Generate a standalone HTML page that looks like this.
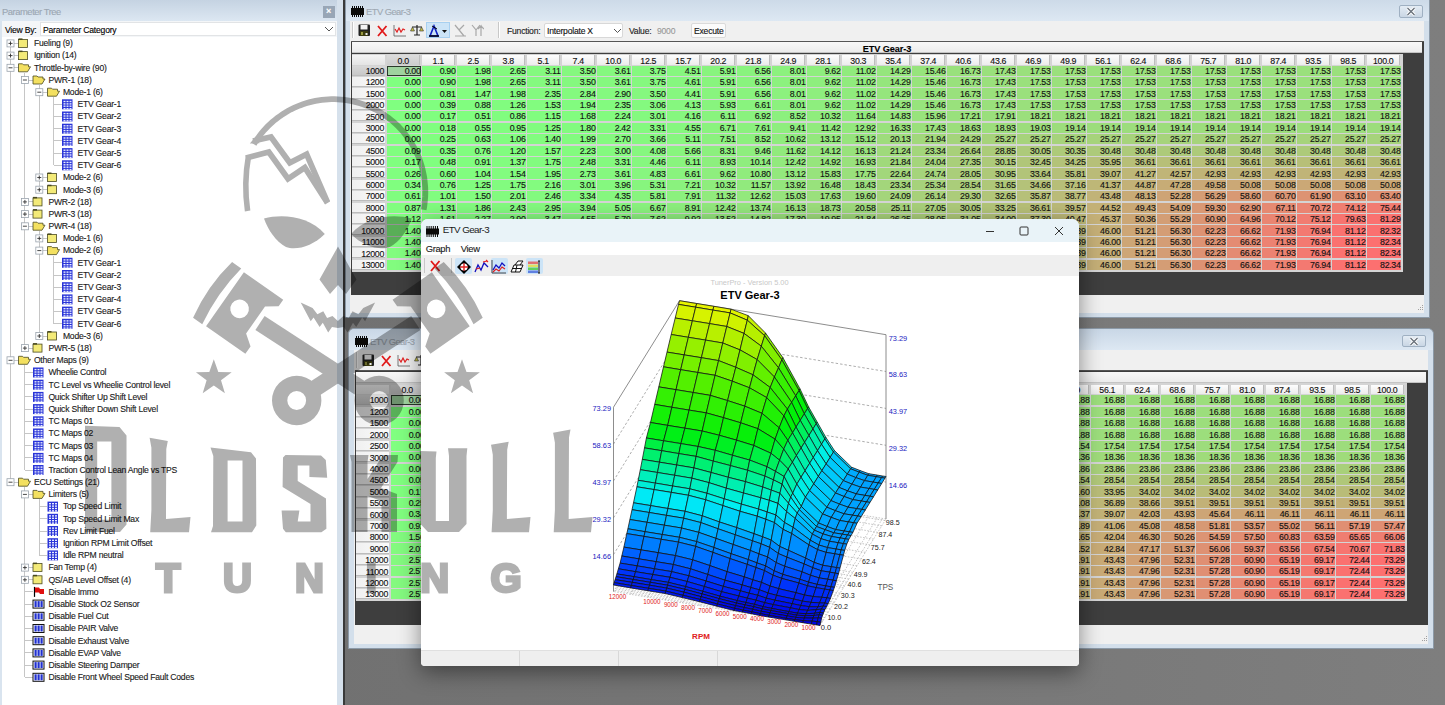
<!DOCTYPE html><html><head><meta charset="utf-8"><style>
*{margin:0;padding:0;box-sizing:border-box}
html,body{width:1445px;height:705px;overflow:hidden}
body{position:relative;background:#727272;font-family:"Liberation Sans",sans-serif;color:#000}
.a{position:absolute}
.tx{position:absolute;white-space:nowrap;font-size:8.6px;letter-spacing:-0.22px;line-height:10px;-webkit-text-stroke:0.12px currentColor}
.nm{font-size:8.8px;letter-spacing:-0.32px}
.c{position:absolute;display:block;font-style:normal;width:34px;height:10.3px;padding-top:0.3px;text-align:right;color:#111;white-space:nowrap;font-size:8.8px;letter-spacing:-0.32px;line-height:10px;-webkit-text-stroke:0.12px #111}

</style></head><body>
<div class="a" style="left:0;top:0;width:1445px;height:705px;background:linear-gradient(90deg,#6e6e6e 0%,#757575 50%,#7e7e7e 100%)"></div>
<div class="a" style="left:0;top:0;width:343px;height:705px;background:#d9e4ef"></div>
<div class="a" style="left:0;top:0;width:337px;height:21px;background:linear-gradient(#c5d3e2,#dce7f2)"></div>
<div class="tx" style="left:2px;top:7px;font-size:9.4px;color:#9ba6b2;letter-spacing:-0.45px">Parameter Tree</div>
<div class="a" style="left:323px;top:6px;width:12px;height:12px;background:#98a6b6"></div>
<div class="tx" style="left:326px;top:6px;color:#fff;font-size:9px;font-weight:bold">&#215;</div>
<div class="a" style="left:2px;top:21px;width:335px;height:16px;background:#f4f6f8"></div>
<div class="tx" style="left:5px;top:24.5px;">View By:</div>
<div class="a" style="left:40px;top:21.5px;width:296px;height:14.5px;background:#fff;border:1px solid #e2e4e6"></div>
<div class="tx" style="left:43px;top:24.5px;">Parameter Category</div>
<svg class="a" style="left:324px;top:26px" width="10" height="6"><path d="M1 1 L5 5 L9 1" stroke="#555" fill="none" stroke-width="1"/></svg>
<div class="a" style="left:2px;top:37px;width:335px;height:668px;background:#fff"></div>
<svg class="a" style="left:0;top:0" width="340" height="705"><g stroke="#c6c6c6" stroke-width="1" shape-rendering="crispEdges"><line x1="24.9" y1="72.8" x2="24.9" y2="348.1"/><line x1="39.3" y1="85.0" x2="39.3" y2="189.7"/><line x1="53.7" y1="97.2" x2="53.7" y2="165.3"/><line x1="39.3" y1="231.2" x2="39.3" y2="336.0"/><line x1="53.7" y1="255.6" x2="53.7" y2="323.8"/><line x1="24.9" y1="365.3" x2="24.9" y2="470.0"/><line x1="24.9" y1="487.2" x2="24.9" y2="677.3"/><line x1="39.3" y1="499.4" x2="39.3" y2="555.4"/><line x1="10.5" y1="43.4" x2="10.5" y2="482.2"/><line x1="10.5" y1="43.4" x2="18.5" y2="43.4"/><line x1="10.5" y1="55.6" x2="18.5" y2="55.6"/><line x1="10.5" y1="67.8" x2="18.5" y2="67.8"/><line x1="24.9" y1="80.0" x2="32.9" y2="80.0"/><line x1="39.3" y1="92.2" x2="47.3" y2="92.2"/><line x1="53.7" y1="104.3" x2="61.7" y2="104.3"/><line x1="53.7" y1="116.5" x2="61.7" y2="116.5"/><line x1="53.7" y1="128.7" x2="61.7" y2="128.7"/><line x1="53.7" y1="140.9" x2="61.7" y2="140.9"/><line x1="53.7" y1="153.1" x2="61.7" y2="153.1"/><line x1="53.7" y1="165.3" x2="61.7" y2="165.3"/><line x1="39.3" y1="177.5" x2="47.3" y2="177.5"/><line x1="39.3" y1="189.7" x2="47.3" y2="189.7"/><line x1="24.9" y1="201.9" x2="32.9" y2="201.9"/><line x1="24.9" y1="214.1" x2="32.9" y2="214.1"/><line x1="24.9" y1="226.2" x2="32.9" y2="226.2"/><line x1="39.3" y1="238.4" x2="47.3" y2="238.4"/><line x1="39.3" y1="250.6" x2="47.3" y2="250.6"/><line x1="53.7" y1="262.8" x2="61.7" y2="262.8"/><line x1="53.7" y1="275.0" x2="61.7" y2="275.0"/><line x1="53.7" y1="287.2" x2="61.7" y2="287.2"/><line x1="53.7" y1="299.4" x2="61.7" y2="299.4"/><line x1="53.7" y1="311.6" x2="61.7" y2="311.6"/><line x1="53.7" y1="323.8" x2="61.7" y2="323.8"/><line x1="39.3" y1="336.0" x2="47.3" y2="336.0"/><line x1="24.9" y1="348.1" x2="32.9" y2="348.1"/><line x1="10.5" y1="360.3" x2="18.5" y2="360.3"/><line x1="24.9" y1="372.5" x2="32.9" y2="372.5"/><line x1="24.9" y1="384.7" x2="32.9" y2="384.7"/><line x1="24.9" y1="396.9" x2="32.9" y2="396.9"/><line x1="24.9" y1="409.1" x2="32.9" y2="409.1"/><line x1="24.9" y1="421.3" x2="32.9" y2="421.3"/><line x1="24.9" y1="433.5" x2="32.9" y2="433.5"/><line x1="24.9" y1="445.7" x2="32.9" y2="445.7"/><line x1="24.9" y1="457.9" x2="32.9" y2="457.9"/><line x1="24.9" y1="470.0" x2="32.9" y2="470.0"/><line x1="10.5" y1="482.2" x2="18.5" y2="482.2"/><line x1="24.9" y1="494.4" x2="32.9" y2="494.4"/><line x1="39.3" y1="506.6" x2="47.3" y2="506.6"/><line x1="39.3" y1="518.8" x2="47.3" y2="518.8"/><line x1="39.3" y1="531.0" x2="47.3" y2="531.0"/><line x1="39.3" y1="543.2" x2="47.3" y2="543.2"/><line x1="39.3" y1="555.4" x2="47.3" y2="555.4"/><line x1="24.9" y1="567.6" x2="32.9" y2="567.6"/><line x1="24.9" y1="579.8" x2="32.9" y2="579.8"/><line x1="24.9" y1="591.9" x2="32.9" y2="591.9"/><line x1="24.9" y1="604.1" x2="32.9" y2="604.1"/><line x1="24.9" y1="616.3" x2="32.9" y2="616.3"/><line x1="24.9" y1="628.5" x2="32.9" y2="628.5"/><line x1="24.9" y1="640.7" x2="32.9" y2="640.7"/><line x1="24.9" y1="652.9" x2="32.9" y2="652.9"/><line x1="24.9" y1="665.1" x2="32.9" y2="665.1"/><line x1="24.9" y1="677.3" x2="32.9" y2="677.3"/></g></svg>
<svg class="a" style="left:0;top:0" width="340" height="705"><rect x="7.0" y="39.9" width="7" height="7" fill="#fff" stroke="#9aa3ad" stroke-width="0.8"/><line x1="8.5" y1="43.4" x2="12.5" y2="43.4" stroke="#333" stroke-width="0.9"/><line x1="10.5" y1="41.4" x2="10.5" y2="45.4" stroke="#333" stroke-width="0.9"/><rect x="18.5" y="39.4" width="9" height="8" fill="#f3ea78" stroke="#4a4a20" stroke-width="0.8"/><rect x="18.5" y="38.4" width="4" height="1.5" fill="#4a4a20"/><rect x="7.0" y="52.1" width="7" height="7" fill="#fff" stroke="#9aa3ad" stroke-width="0.8"/><line x1="8.5" y1="55.6" x2="12.5" y2="55.6" stroke="#333" stroke-width="0.9"/><line x1="10.5" y1="53.6" x2="10.5" y2="57.6" stroke="#333" stroke-width="0.9"/><rect x="18.5" y="51.6" width="9" height="8" fill="#f3ea78" stroke="#4a4a20" stroke-width="0.8"/><rect x="18.5" y="50.6" width="4" height="1.5" fill="#4a4a20"/><rect x="7.0" y="64.3" width="7" height="7" fill="#fff" stroke="#9aa3ad" stroke-width="0.8"/><line x1="8.5" y1="67.8" x2="12.5" y2="67.8" stroke="#333" stroke-width="0.9"/><path d="M18.5 63.8 h4 l1 1 h5 v2 h2 l-3 5 h-9 z" fill="#f3e060" stroke="#4a4a20" stroke-width="0.8"/><rect x="21.4" y="76.5" width="7" height="7" fill="#fff" stroke="#9aa3ad" stroke-width="0.8"/><line x1="22.9" y1="80.0" x2="26.9" y2="80.0" stroke="#333" stroke-width="0.9"/><path d="M33.0 76.0 h4 l1 1 h5 v2 h2 l-3 5 h-9 z" fill="#f3e060" stroke="#4a4a20" stroke-width="0.8"/><rect x="35.8" y="88.7" width="7" height="7" fill="#fff" stroke="#9aa3ad" stroke-width="0.8"/><line x1="37.3" y1="92.2" x2="41.3" y2="92.2" stroke="#333" stroke-width="0.9"/><path d="M47.5 88.2 h4 l1 1 h5 v2 h2 l-3 5 h-9 z" fill="#f3e060" stroke="#4a4a20" stroke-width="0.8"/><rect x="62.0" y="99.3" width="10.5" height="10" fill="#2a35d8"/><rect x="63.5" y="100.8" width="2" height="1.4" fill="#e8ecff"/><rect x="63.5" y="103.2" width="2" height="1.4" fill="#e8ecff"/><rect x="63.5" y="105.5" width="2" height="1.4" fill="#e8ecff"/><rect x="63.5" y="108.0" width="2" height="1.4" fill="#e8ecff"/><rect x="66.5" y="100.8" width="2" height="1.4" fill="#e8ecff"/><rect x="66.5" y="103.2" width="2" height="1.4" fill="#e8ecff"/><rect x="66.5" y="105.5" width="2" height="1.4" fill="#e8ecff"/><rect x="66.5" y="108.0" width="2" height="1.4" fill="#e8ecff"/><rect x="69.5" y="100.8" width="2" height="1.4" fill="#e8ecff"/><rect x="69.5" y="103.2" width="2" height="1.4" fill="#e8ecff"/><rect x="69.5" y="105.5" width="2" height="1.4" fill="#e8ecff"/><rect x="69.5" y="108.0" width="2" height="1.4" fill="#e8ecff"/><rect x="62.0" y="111.5" width="10.5" height="10" fill="#2a35d8"/><rect x="63.5" y="112.9" width="2" height="1.4" fill="#e8ecff"/><rect x="63.5" y="115.3" width="2" height="1.4" fill="#e8ecff"/><rect x="63.5" y="117.7" width="2" height="1.4" fill="#e8ecff"/><rect x="63.5" y="120.1" width="2" height="1.4" fill="#e8ecff"/><rect x="66.5" y="112.9" width="2" height="1.4" fill="#e8ecff"/><rect x="66.5" y="115.3" width="2" height="1.4" fill="#e8ecff"/><rect x="66.5" y="117.7" width="2" height="1.4" fill="#e8ecff"/><rect x="66.5" y="120.1" width="2" height="1.4" fill="#e8ecff"/><rect x="69.5" y="112.9" width="2" height="1.4" fill="#e8ecff"/><rect x="69.5" y="115.3" width="2" height="1.4" fill="#e8ecff"/><rect x="69.5" y="117.7" width="2" height="1.4" fill="#e8ecff"/><rect x="69.5" y="120.1" width="2" height="1.4" fill="#e8ecff"/><rect x="62.0" y="123.7" width="10.5" height="10" fill="#2a35d8"/><rect x="63.5" y="125.1" width="2" height="1.4" fill="#e8ecff"/><rect x="63.5" y="127.5" width="2" height="1.4" fill="#e8ecff"/><rect x="63.5" y="129.9" width="2" height="1.4" fill="#e8ecff"/><rect x="63.5" y="132.3" width="2" height="1.4" fill="#e8ecff"/><rect x="66.5" y="125.1" width="2" height="1.4" fill="#e8ecff"/><rect x="66.5" y="127.5" width="2" height="1.4" fill="#e8ecff"/><rect x="66.5" y="129.9" width="2" height="1.4" fill="#e8ecff"/><rect x="66.5" y="132.3" width="2" height="1.4" fill="#e8ecff"/><rect x="69.5" y="125.1" width="2" height="1.4" fill="#e8ecff"/><rect x="69.5" y="127.5" width="2" height="1.4" fill="#e8ecff"/><rect x="69.5" y="129.9" width="2" height="1.4" fill="#e8ecff"/><rect x="69.5" y="132.3" width="2" height="1.4" fill="#e8ecff"/><rect x="62.0" y="135.9" width="10.5" height="10" fill="#2a35d8"/><rect x="63.5" y="137.3" width="2" height="1.4" fill="#e8ecff"/><rect x="63.5" y="139.7" width="2" height="1.4" fill="#e8ecff"/><rect x="63.5" y="142.1" width="2" height="1.4" fill="#e8ecff"/><rect x="63.5" y="144.5" width="2" height="1.4" fill="#e8ecff"/><rect x="66.5" y="137.3" width="2" height="1.4" fill="#e8ecff"/><rect x="66.5" y="139.7" width="2" height="1.4" fill="#e8ecff"/><rect x="66.5" y="142.1" width="2" height="1.4" fill="#e8ecff"/><rect x="66.5" y="144.5" width="2" height="1.4" fill="#e8ecff"/><rect x="69.5" y="137.3" width="2" height="1.4" fill="#e8ecff"/><rect x="69.5" y="139.7" width="2" height="1.4" fill="#e8ecff"/><rect x="69.5" y="142.1" width="2" height="1.4" fill="#e8ecff"/><rect x="69.5" y="144.5" width="2" height="1.4" fill="#e8ecff"/><rect x="62.0" y="148.1" width="10.5" height="10" fill="#2a35d8"/><rect x="63.5" y="149.5" width="2" height="1.4" fill="#e8ecff"/><rect x="63.5" y="151.9" width="2" height="1.4" fill="#e8ecff"/><rect x="63.5" y="154.3" width="2" height="1.4" fill="#e8ecff"/><rect x="63.5" y="156.7" width="2" height="1.4" fill="#e8ecff"/><rect x="66.5" y="149.5" width="2" height="1.4" fill="#e8ecff"/><rect x="66.5" y="151.9" width="2" height="1.4" fill="#e8ecff"/><rect x="66.5" y="154.3" width="2" height="1.4" fill="#e8ecff"/><rect x="66.5" y="156.7" width="2" height="1.4" fill="#e8ecff"/><rect x="69.5" y="149.5" width="2" height="1.4" fill="#e8ecff"/><rect x="69.5" y="151.9" width="2" height="1.4" fill="#e8ecff"/><rect x="69.5" y="154.3" width="2" height="1.4" fill="#e8ecff"/><rect x="69.5" y="156.7" width="2" height="1.4" fill="#e8ecff"/><rect x="62.0" y="160.3" width="10.5" height="10" fill="#2a35d8"/><rect x="63.5" y="161.7" width="2" height="1.4" fill="#e8ecff"/><rect x="63.5" y="164.1" width="2" height="1.4" fill="#e8ecff"/><rect x="63.5" y="166.5" width="2" height="1.4" fill="#e8ecff"/><rect x="63.5" y="168.9" width="2" height="1.4" fill="#e8ecff"/><rect x="66.5" y="161.7" width="2" height="1.4" fill="#e8ecff"/><rect x="66.5" y="164.1" width="2" height="1.4" fill="#e8ecff"/><rect x="66.5" y="166.5" width="2" height="1.4" fill="#e8ecff"/><rect x="66.5" y="168.9" width="2" height="1.4" fill="#e8ecff"/><rect x="69.5" y="161.7" width="2" height="1.4" fill="#e8ecff"/><rect x="69.5" y="164.1" width="2" height="1.4" fill="#e8ecff"/><rect x="69.5" y="166.5" width="2" height="1.4" fill="#e8ecff"/><rect x="69.5" y="168.9" width="2" height="1.4" fill="#e8ecff"/><rect x="35.8" y="174.0" width="7" height="7" fill="#fff" stroke="#9aa3ad" stroke-width="0.8"/><line x1="37.3" y1="177.5" x2="41.3" y2="177.5" stroke="#333" stroke-width="0.9"/><line x1="39.3" y1="175.5" x2="39.3" y2="179.5" stroke="#333" stroke-width="0.9"/><rect x="47.5" y="173.5" width="9" height="8" fill="#f3ea78" stroke="#4a4a20" stroke-width="0.8"/><rect x="47.5" y="172.5" width="4" height="1.5" fill="#4a4a20"/><rect x="35.8" y="186.2" width="7" height="7" fill="#fff" stroke="#9aa3ad" stroke-width="0.8"/><line x1="37.3" y1="189.7" x2="41.3" y2="189.7" stroke="#333" stroke-width="0.9"/><line x1="39.3" y1="187.7" x2="39.3" y2="191.7" stroke="#333" stroke-width="0.9"/><rect x="47.5" y="185.7" width="9" height="8" fill="#f3ea78" stroke="#4a4a20" stroke-width="0.8"/><rect x="47.5" y="184.7" width="4" height="1.5" fill="#4a4a20"/><rect x="21.4" y="198.4" width="7" height="7" fill="#fff" stroke="#9aa3ad" stroke-width="0.8"/><line x1="22.9" y1="201.9" x2="26.9" y2="201.9" stroke="#333" stroke-width="0.9"/><line x1="24.9" y1="199.9" x2="24.9" y2="203.9" stroke="#333" stroke-width="0.9"/><rect x="33.0" y="197.9" width="9" height="8" fill="#f3ea78" stroke="#4a4a20" stroke-width="0.8"/><rect x="33.0" y="196.9" width="4" height="1.5" fill="#4a4a20"/><rect x="21.4" y="210.6" width="7" height="7" fill="#fff" stroke="#9aa3ad" stroke-width="0.8"/><line x1="22.9" y1="214.1" x2="26.9" y2="214.1" stroke="#333" stroke-width="0.9"/><line x1="24.9" y1="212.1" x2="24.9" y2="216.1" stroke="#333" stroke-width="0.9"/><rect x="33.0" y="210.1" width="9" height="8" fill="#f3ea78" stroke="#4a4a20" stroke-width="0.8"/><rect x="33.0" y="209.1" width="4" height="1.5" fill="#4a4a20"/><rect x="21.4" y="222.8" width="7" height="7" fill="#fff" stroke="#9aa3ad" stroke-width="0.8"/><line x1="22.9" y1="226.2" x2="26.9" y2="226.2" stroke="#333" stroke-width="0.9"/><path d="M33.0 222.2 h4 l1 1 h5 v2 h2 l-3 5 h-9 z" fill="#f3e060" stroke="#4a4a20" stroke-width="0.8"/><rect x="35.8" y="234.9" width="7" height="7" fill="#fff" stroke="#9aa3ad" stroke-width="0.8"/><line x1="37.3" y1="238.4" x2="41.3" y2="238.4" stroke="#333" stroke-width="0.9"/><line x1="39.3" y1="236.4" x2="39.3" y2="240.4" stroke="#333" stroke-width="0.9"/><rect x="47.5" y="234.4" width="9" height="8" fill="#f3ea78" stroke="#4a4a20" stroke-width="0.8"/><rect x="47.5" y="233.4" width="4" height="1.5" fill="#4a4a20"/><rect x="35.8" y="247.1" width="7" height="7" fill="#fff" stroke="#9aa3ad" stroke-width="0.8"/><line x1="37.3" y1="250.6" x2="41.3" y2="250.6" stroke="#333" stroke-width="0.9"/><path d="M47.5 246.6 h4 l1 1 h5 v2 h2 l-3 5 h-9 z" fill="#f3e060" stroke="#4a4a20" stroke-width="0.8"/><rect x="62.0" y="257.8" width="10.5" height="10" fill="#2a35d8"/><rect x="63.5" y="259.2" width="2" height="1.4" fill="#e8ecff"/><rect x="63.5" y="261.6" width="2" height="1.4" fill="#e8ecff"/><rect x="63.5" y="264.0" width="2" height="1.4" fill="#e8ecff"/><rect x="63.5" y="266.4" width="2" height="1.4" fill="#e8ecff"/><rect x="66.5" y="259.2" width="2" height="1.4" fill="#e8ecff"/><rect x="66.5" y="261.6" width="2" height="1.4" fill="#e8ecff"/><rect x="66.5" y="264.0" width="2" height="1.4" fill="#e8ecff"/><rect x="66.5" y="266.4" width="2" height="1.4" fill="#e8ecff"/><rect x="69.5" y="259.2" width="2" height="1.4" fill="#e8ecff"/><rect x="69.5" y="261.6" width="2" height="1.4" fill="#e8ecff"/><rect x="69.5" y="264.0" width="2" height="1.4" fill="#e8ecff"/><rect x="69.5" y="266.4" width="2" height="1.4" fill="#e8ecff"/><rect x="62.0" y="270.0" width="10.5" height="10" fill="#2a35d8"/><rect x="63.5" y="271.4" width="2" height="1.4" fill="#e8ecff"/><rect x="63.5" y="273.8" width="2" height="1.4" fill="#e8ecff"/><rect x="63.5" y="276.2" width="2" height="1.4" fill="#e8ecff"/><rect x="63.5" y="278.6" width="2" height="1.4" fill="#e8ecff"/><rect x="66.5" y="271.4" width="2" height="1.4" fill="#e8ecff"/><rect x="66.5" y="273.8" width="2" height="1.4" fill="#e8ecff"/><rect x="66.5" y="276.2" width="2" height="1.4" fill="#e8ecff"/><rect x="66.5" y="278.6" width="2" height="1.4" fill="#e8ecff"/><rect x="69.5" y="271.4" width="2" height="1.4" fill="#e8ecff"/><rect x="69.5" y="273.8" width="2" height="1.4" fill="#e8ecff"/><rect x="69.5" y="276.2" width="2" height="1.4" fill="#e8ecff"/><rect x="69.5" y="278.6" width="2" height="1.4" fill="#e8ecff"/><rect x="62.0" y="282.2" width="10.5" height="10" fill="#2a35d8"/><rect x="63.5" y="283.6" width="2" height="1.4" fill="#e8ecff"/><rect x="63.5" y="286.0" width="2" height="1.4" fill="#e8ecff"/><rect x="63.5" y="288.4" width="2" height="1.4" fill="#e8ecff"/><rect x="63.5" y="290.8" width="2" height="1.4" fill="#e8ecff"/><rect x="66.5" y="283.6" width="2" height="1.4" fill="#e8ecff"/><rect x="66.5" y="286.0" width="2" height="1.4" fill="#e8ecff"/><rect x="66.5" y="288.4" width="2" height="1.4" fill="#e8ecff"/><rect x="66.5" y="290.8" width="2" height="1.4" fill="#e8ecff"/><rect x="69.5" y="283.6" width="2" height="1.4" fill="#e8ecff"/><rect x="69.5" y="286.0" width="2" height="1.4" fill="#e8ecff"/><rect x="69.5" y="288.4" width="2" height="1.4" fill="#e8ecff"/><rect x="69.5" y="290.8" width="2" height="1.4" fill="#e8ecff"/><rect x="62.0" y="294.4" width="10.5" height="10" fill="#2a35d8"/><rect x="63.5" y="295.8" width="2" height="1.4" fill="#e8ecff"/><rect x="63.5" y="298.2" width="2" height="1.4" fill="#e8ecff"/><rect x="63.5" y="300.6" width="2" height="1.4" fill="#e8ecff"/><rect x="63.5" y="303.0" width="2" height="1.4" fill="#e8ecff"/><rect x="66.5" y="295.8" width="2" height="1.4" fill="#e8ecff"/><rect x="66.5" y="298.2" width="2" height="1.4" fill="#e8ecff"/><rect x="66.5" y="300.6" width="2" height="1.4" fill="#e8ecff"/><rect x="66.5" y="303.0" width="2" height="1.4" fill="#e8ecff"/><rect x="69.5" y="295.8" width="2" height="1.4" fill="#e8ecff"/><rect x="69.5" y="298.2" width="2" height="1.4" fill="#e8ecff"/><rect x="69.5" y="300.6" width="2" height="1.4" fill="#e8ecff"/><rect x="69.5" y="303.0" width="2" height="1.4" fill="#e8ecff"/><rect x="62.0" y="306.6" width="10.5" height="10" fill="#2a35d8"/><rect x="63.5" y="308.0" width="2" height="1.4" fill="#e8ecff"/><rect x="63.5" y="310.4" width="2" height="1.4" fill="#e8ecff"/><rect x="63.5" y="312.8" width="2" height="1.4" fill="#e8ecff"/><rect x="63.5" y="315.2" width="2" height="1.4" fill="#e8ecff"/><rect x="66.5" y="308.0" width="2" height="1.4" fill="#e8ecff"/><rect x="66.5" y="310.4" width="2" height="1.4" fill="#e8ecff"/><rect x="66.5" y="312.8" width="2" height="1.4" fill="#e8ecff"/><rect x="66.5" y="315.2" width="2" height="1.4" fill="#e8ecff"/><rect x="69.5" y="308.0" width="2" height="1.4" fill="#e8ecff"/><rect x="69.5" y="310.4" width="2" height="1.4" fill="#e8ecff"/><rect x="69.5" y="312.8" width="2" height="1.4" fill="#e8ecff"/><rect x="69.5" y="315.2" width="2" height="1.4" fill="#e8ecff"/><rect x="62.0" y="318.8" width="10.5" height="10" fill="#2a35d8"/><rect x="63.5" y="320.2" width="2" height="1.4" fill="#e8ecff"/><rect x="63.5" y="322.6" width="2" height="1.4" fill="#e8ecff"/><rect x="63.5" y="325.0" width="2" height="1.4" fill="#e8ecff"/><rect x="63.5" y="327.4" width="2" height="1.4" fill="#e8ecff"/><rect x="66.5" y="320.2" width="2" height="1.4" fill="#e8ecff"/><rect x="66.5" y="322.6" width="2" height="1.4" fill="#e8ecff"/><rect x="66.5" y="325.0" width="2" height="1.4" fill="#e8ecff"/><rect x="66.5" y="327.4" width="2" height="1.4" fill="#e8ecff"/><rect x="69.5" y="320.2" width="2" height="1.4" fill="#e8ecff"/><rect x="69.5" y="322.6" width="2" height="1.4" fill="#e8ecff"/><rect x="69.5" y="325.0" width="2" height="1.4" fill="#e8ecff"/><rect x="69.5" y="327.4" width="2" height="1.4" fill="#e8ecff"/><rect x="35.8" y="332.5" width="7" height="7" fill="#fff" stroke="#9aa3ad" stroke-width="0.8"/><line x1="37.3" y1="336.0" x2="41.3" y2="336.0" stroke="#333" stroke-width="0.9"/><line x1="39.3" y1="334.0" x2="39.3" y2="338.0" stroke="#333" stroke-width="0.9"/><rect x="47.5" y="332.0" width="9" height="8" fill="#f3ea78" stroke="#4a4a20" stroke-width="0.8"/><rect x="47.5" y="331.0" width="4" height="1.5" fill="#4a4a20"/><rect x="21.4" y="344.6" width="7" height="7" fill="#fff" stroke="#9aa3ad" stroke-width="0.8"/><line x1="22.9" y1="348.1" x2="26.9" y2="348.1" stroke="#333" stroke-width="0.9"/><line x1="24.9" y1="346.1" x2="24.9" y2="350.1" stroke="#333" stroke-width="0.9"/><rect x="33.0" y="344.1" width="9" height="8" fill="#f3ea78" stroke="#4a4a20" stroke-width="0.8"/><rect x="33.0" y="343.1" width="4" height="1.5" fill="#4a4a20"/><rect x="7.0" y="356.8" width="7" height="7" fill="#fff" stroke="#9aa3ad" stroke-width="0.8"/><line x1="8.5" y1="360.3" x2="12.5" y2="360.3" stroke="#333" stroke-width="0.9"/><path d="M18.5 356.3 h4 l1 1 h5 v2 h2 l-3 5 h-9 z" fill="#f3e060" stroke="#4a4a20" stroke-width="0.8"/><rect x="33.0" y="367.5" width="10.5" height="10" fill="#2a35d8"/><rect x="34.5" y="368.9" width="2" height="1.4" fill="#e8ecff"/><rect x="34.5" y="371.3" width="2" height="1.4" fill="#e8ecff"/><rect x="34.5" y="373.7" width="2" height="1.4" fill="#e8ecff"/><rect x="34.5" y="376.1" width="2" height="1.4" fill="#e8ecff"/><rect x="37.5" y="368.9" width="2" height="1.4" fill="#e8ecff"/><rect x="37.5" y="371.3" width="2" height="1.4" fill="#e8ecff"/><rect x="37.5" y="373.7" width="2" height="1.4" fill="#e8ecff"/><rect x="37.5" y="376.1" width="2" height="1.4" fill="#e8ecff"/><rect x="40.5" y="368.9" width="2" height="1.4" fill="#e8ecff"/><rect x="40.5" y="371.3" width="2" height="1.4" fill="#e8ecff"/><rect x="40.5" y="373.7" width="2" height="1.4" fill="#e8ecff"/><rect x="40.5" y="376.1" width="2" height="1.4" fill="#e8ecff"/><rect x="33.0" y="379.7" width="10.5" height="10" fill="#2a35d8"/><rect x="34.5" y="381.1" width="2" height="1.4" fill="#e8ecff"/><rect x="34.5" y="383.5" width="2" height="1.4" fill="#e8ecff"/><rect x="34.5" y="385.9" width="2" height="1.4" fill="#e8ecff"/><rect x="34.5" y="388.3" width="2" height="1.4" fill="#e8ecff"/><rect x="37.5" y="381.1" width="2" height="1.4" fill="#e8ecff"/><rect x="37.5" y="383.5" width="2" height="1.4" fill="#e8ecff"/><rect x="37.5" y="385.9" width="2" height="1.4" fill="#e8ecff"/><rect x="37.5" y="388.3" width="2" height="1.4" fill="#e8ecff"/><rect x="40.5" y="381.1" width="2" height="1.4" fill="#e8ecff"/><rect x="40.5" y="383.5" width="2" height="1.4" fill="#e8ecff"/><rect x="40.5" y="385.9" width="2" height="1.4" fill="#e8ecff"/><rect x="40.5" y="388.3" width="2" height="1.4" fill="#e8ecff"/><rect x="33.0" y="391.9" width="10.5" height="10" fill="#2a35d8"/><rect x="34.5" y="393.3" width="2" height="1.4" fill="#e8ecff"/><rect x="34.5" y="395.7" width="2" height="1.4" fill="#e8ecff"/><rect x="34.5" y="398.1" width="2" height="1.4" fill="#e8ecff"/><rect x="34.5" y="400.5" width="2" height="1.4" fill="#e8ecff"/><rect x="37.5" y="393.3" width="2" height="1.4" fill="#e8ecff"/><rect x="37.5" y="395.7" width="2" height="1.4" fill="#e8ecff"/><rect x="37.5" y="398.1" width="2" height="1.4" fill="#e8ecff"/><rect x="37.5" y="400.5" width="2" height="1.4" fill="#e8ecff"/><rect x="40.5" y="393.3" width="2" height="1.4" fill="#e8ecff"/><rect x="40.5" y="395.7" width="2" height="1.4" fill="#e8ecff"/><rect x="40.5" y="398.1" width="2" height="1.4" fill="#e8ecff"/><rect x="40.5" y="400.5" width="2" height="1.4" fill="#e8ecff"/><rect x="33.0" y="404.1" width="10.5" height="10" fill="#2a35d8"/><rect x="34.5" y="405.5" width="2" height="1.4" fill="#e8ecff"/><rect x="34.5" y="407.9" width="2" height="1.4" fill="#e8ecff"/><rect x="34.5" y="410.3" width="2" height="1.4" fill="#e8ecff"/><rect x="34.5" y="412.7" width="2" height="1.4" fill="#e8ecff"/><rect x="37.5" y="405.5" width="2" height="1.4" fill="#e8ecff"/><rect x="37.5" y="407.9" width="2" height="1.4" fill="#e8ecff"/><rect x="37.5" y="410.3" width="2" height="1.4" fill="#e8ecff"/><rect x="37.5" y="412.7" width="2" height="1.4" fill="#e8ecff"/><rect x="40.5" y="405.5" width="2" height="1.4" fill="#e8ecff"/><rect x="40.5" y="407.9" width="2" height="1.4" fill="#e8ecff"/><rect x="40.5" y="410.3" width="2" height="1.4" fill="#e8ecff"/><rect x="40.5" y="412.7" width="2" height="1.4" fill="#e8ecff"/><rect x="33.0" y="416.3" width="10.5" height="10" fill="#2a35d8"/><rect x="34.5" y="417.7" width="2" height="1.4" fill="#e8ecff"/><rect x="34.5" y="420.1" width="2" height="1.4" fill="#e8ecff"/><rect x="34.5" y="422.5" width="2" height="1.4" fill="#e8ecff"/><rect x="34.5" y="424.9" width="2" height="1.4" fill="#e8ecff"/><rect x="37.5" y="417.7" width="2" height="1.4" fill="#e8ecff"/><rect x="37.5" y="420.1" width="2" height="1.4" fill="#e8ecff"/><rect x="37.5" y="422.5" width="2" height="1.4" fill="#e8ecff"/><rect x="37.5" y="424.9" width="2" height="1.4" fill="#e8ecff"/><rect x="40.5" y="417.7" width="2" height="1.4" fill="#e8ecff"/><rect x="40.5" y="420.1" width="2" height="1.4" fill="#e8ecff"/><rect x="40.5" y="422.5" width="2" height="1.4" fill="#e8ecff"/><rect x="40.5" y="424.9" width="2" height="1.4" fill="#e8ecff"/><rect x="33.0" y="428.5" width="10.5" height="10" fill="#2a35d8"/><rect x="34.5" y="429.9" width="2" height="1.4" fill="#e8ecff"/><rect x="34.5" y="432.3" width="2" height="1.4" fill="#e8ecff"/><rect x="34.5" y="434.7" width="2" height="1.4" fill="#e8ecff"/><rect x="34.5" y="437.1" width="2" height="1.4" fill="#e8ecff"/><rect x="37.5" y="429.9" width="2" height="1.4" fill="#e8ecff"/><rect x="37.5" y="432.3" width="2" height="1.4" fill="#e8ecff"/><rect x="37.5" y="434.7" width="2" height="1.4" fill="#e8ecff"/><rect x="37.5" y="437.1" width="2" height="1.4" fill="#e8ecff"/><rect x="40.5" y="429.9" width="2" height="1.4" fill="#e8ecff"/><rect x="40.5" y="432.3" width="2" height="1.4" fill="#e8ecff"/><rect x="40.5" y="434.7" width="2" height="1.4" fill="#e8ecff"/><rect x="40.5" y="437.1" width="2" height="1.4" fill="#e8ecff"/><rect x="33.0" y="440.7" width="10.5" height="10" fill="#2a35d8"/><rect x="34.5" y="442.1" width="2" height="1.4" fill="#e8ecff"/><rect x="34.5" y="444.5" width="2" height="1.4" fill="#e8ecff"/><rect x="34.5" y="446.9" width="2" height="1.4" fill="#e8ecff"/><rect x="34.5" y="449.3" width="2" height="1.4" fill="#e8ecff"/><rect x="37.5" y="442.1" width="2" height="1.4" fill="#e8ecff"/><rect x="37.5" y="444.5" width="2" height="1.4" fill="#e8ecff"/><rect x="37.5" y="446.9" width="2" height="1.4" fill="#e8ecff"/><rect x="37.5" y="449.3" width="2" height="1.4" fill="#e8ecff"/><rect x="40.5" y="442.1" width="2" height="1.4" fill="#e8ecff"/><rect x="40.5" y="444.5" width="2" height="1.4" fill="#e8ecff"/><rect x="40.5" y="446.9" width="2" height="1.4" fill="#e8ecff"/><rect x="40.5" y="449.3" width="2" height="1.4" fill="#e8ecff"/><rect x="33.0" y="452.9" width="10.5" height="10" fill="#2a35d8"/><rect x="34.5" y="454.3" width="2" height="1.4" fill="#e8ecff"/><rect x="34.5" y="456.7" width="2" height="1.4" fill="#e8ecff"/><rect x="34.5" y="459.1" width="2" height="1.4" fill="#e8ecff"/><rect x="34.5" y="461.5" width="2" height="1.4" fill="#e8ecff"/><rect x="37.5" y="454.3" width="2" height="1.4" fill="#e8ecff"/><rect x="37.5" y="456.7" width="2" height="1.4" fill="#e8ecff"/><rect x="37.5" y="459.1" width="2" height="1.4" fill="#e8ecff"/><rect x="37.5" y="461.5" width="2" height="1.4" fill="#e8ecff"/><rect x="40.5" y="454.3" width="2" height="1.4" fill="#e8ecff"/><rect x="40.5" y="456.7" width="2" height="1.4" fill="#e8ecff"/><rect x="40.5" y="459.1" width="2" height="1.4" fill="#e8ecff"/><rect x="40.5" y="461.5" width="2" height="1.4" fill="#e8ecff"/><rect x="33.0" y="465.0" width="10.5" height="10" fill="#2a35d8"/><rect x="34.5" y="466.4" width="2" height="1.4" fill="#e8ecff"/><rect x="34.5" y="468.8" width="2" height="1.4" fill="#e8ecff"/><rect x="34.5" y="471.2" width="2" height="1.4" fill="#e8ecff"/><rect x="34.5" y="473.6" width="2" height="1.4" fill="#e8ecff"/><rect x="37.5" y="466.4" width="2" height="1.4" fill="#e8ecff"/><rect x="37.5" y="468.8" width="2" height="1.4" fill="#e8ecff"/><rect x="37.5" y="471.2" width="2" height="1.4" fill="#e8ecff"/><rect x="37.5" y="473.6" width="2" height="1.4" fill="#e8ecff"/><rect x="40.5" y="466.4" width="2" height="1.4" fill="#e8ecff"/><rect x="40.5" y="468.8" width="2" height="1.4" fill="#e8ecff"/><rect x="40.5" y="471.2" width="2" height="1.4" fill="#e8ecff"/><rect x="40.5" y="473.6" width="2" height="1.4" fill="#e8ecff"/><rect x="7.0" y="478.7" width="7" height="7" fill="#fff" stroke="#9aa3ad" stroke-width="0.8"/><line x1="8.5" y1="482.2" x2="12.5" y2="482.2" stroke="#333" stroke-width="0.9"/><path d="M18.5 478.2 h4 l1 1 h5 v2 h2 l-3 5 h-9 z" fill="#f3e060" stroke="#4a4a20" stroke-width="0.8"/><rect x="21.4" y="490.9" width="7" height="7" fill="#fff" stroke="#9aa3ad" stroke-width="0.8"/><line x1="22.9" y1="494.4" x2="26.9" y2="494.4" stroke="#333" stroke-width="0.9"/><path d="M33.0 490.4 h4 l1 1 h5 v2 h2 l-3 5 h-9 z" fill="#f3e060" stroke="#4a4a20" stroke-width="0.8"/><rect x="47.5" y="501.6" width="10.5" height="10" fill="#2a35d8"/><rect x="49.0" y="503.0" width="2" height="1.4" fill="#e8ecff"/><rect x="49.0" y="505.4" width="2" height="1.4" fill="#e8ecff"/><rect x="49.0" y="507.8" width="2" height="1.4" fill="#e8ecff"/><rect x="49.0" y="510.2" width="2" height="1.4" fill="#e8ecff"/><rect x="52.0" y="503.0" width="2" height="1.4" fill="#e8ecff"/><rect x="52.0" y="505.4" width="2" height="1.4" fill="#e8ecff"/><rect x="52.0" y="507.8" width="2" height="1.4" fill="#e8ecff"/><rect x="52.0" y="510.2" width="2" height="1.4" fill="#e8ecff"/><rect x="55.0" y="503.0" width="2" height="1.4" fill="#e8ecff"/><rect x="55.0" y="505.4" width="2" height="1.4" fill="#e8ecff"/><rect x="55.0" y="507.8" width="2" height="1.4" fill="#e8ecff"/><rect x="55.0" y="510.2" width="2" height="1.4" fill="#e8ecff"/><rect x="47.5" y="513.8" width="10.5" height="10" fill="#2a35d8"/><rect x="49.0" y="515.2" width="2" height="1.4" fill="#e8ecff"/><rect x="49.0" y="517.6" width="2" height="1.4" fill="#e8ecff"/><rect x="49.0" y="520.0" width="2" height="1.4" fill="#e8ecff"/><rect x="49.0" y="522.4" width="2" height="1.4" fill="#e8ecff"/><rect x="52.0" y="515.2" width="2" height="1.4" fill="#e8ecff"/><rect x="52.0" y="517.6" width="2" height="1.4" fill="#e8ecff"/><rect x="52.0" y="520.0" width="2" height="1.4" fill="#e8ecff"/><rect x="52.0" y="522.4" width="2" height="1.4" fill="#e8ecff"/><rect x="55.0" y="515.2" width="2" height="1.4" fill="#e8ecff"/><rect x="55.0" y="517.6" width="2" height="1.4" fill="#e8ecff"/><rect x="55.0" y="520.0" width="2" height="1.4" fill="#e8ecff"/><rect x="55.0" y="522.4" width="2" height="1.4" fill="#e8ecff"/><rect x="47.5" y="526.0" width="10.5" height="10" fill="#2a35d8"/><rect x="49.0" y="527.4" width="2" height="1.4" fill="#e8ecff"/><rect x="49.0" y="529.8" width="2" height="1.4" fill="#e8ecff"/><rect x="49.0" y="532.2" width="2" height="1.4" fill="#e8ecff"/><rect x="49.0" y="534.6" width="2" height="1.4" fill="#e8ecff"/><rect x="52.0" y="527.4" width="2" height="1.4" fill="#e8ecff"/><rect x="52.0" y="529.8" width="2" height="1.4" fill="#e8ecff"/><rect x="52.0" y="532.2" width="2" height="1.4" fill="#e8ecff"/><rect x="52.0" y="534.6" width="2" height="1.4" fill="#e8ecff"/><rect x="55.0" y="527.4" width="2" height="1.4" fill="#e8ecff"/><rect x="55.0" y="529.8" width="2" height="1.4" fill="#e8ecff"/><rect x="55.0" y="532.2" width="2" height="1.4" fill="#e8ecff"/><rect x="55.0" y="534.6" width="2" height="1.4" fill="#e8ecff"/><rect x="47.5" y="538.2" width="10.5" height="10" fill="#2a35d8"/><rect x="49.0" y="539.6" width="2" height="1.4" fill="#e8ecff"/><rect x="49.0" y="542.0" width="2" height="1.4" fill="#e8ecff"/><rect x="49.0" y="544.4" width="2" height="1.4" fill="#e8ecff"/><rect x="49.0" y="546.8" width="2" height="1.4" fill="#e8ecff"/><rect x="52.0" y="539.6" width="2" height="1.4" fill="#e8ecff"/><rect x="52.0" y="542.0" width="2" height="1.4" fill="#e8ecff"/><rect x="52.0" y="544.4" width="2" height="1.4" fill="#e8ecff"/><rect x="52.0" y="546.8" width="2" height="1.4" fill="#e8ecff"/><rect x="55.0" y="539.6" width="2" height="1.4" fill="#e8ecff"/><rect x="55.0" y="542.0" width="2" height="1.4" fill="#e8ecff"/><rect x="55.0" y="544.4" width="2" height="1.4" fill="#e8ecff"/><rect x="55.0" y="546.8" width="2" height="1.4" fill="#e8ecff"/><rect x="47.5" y="550.4" width="10.5" height="10" fill="#2a35d8"/><rect x="49.0" y="551.8" width="2" height="1.4" fill="#e8ecff"/><rect x="49.0" y="554.2" width="2" height="1.4" fill="#e8ecff"/><rect x="49.0" y="556.6" width="2" height="1.4" fill="#e8ecff"/><rect x="49.0" y="559.0" width="2" height="1.4" fill="#e8ecff"/><rect x="52.0" y="551.8" width="2" height="1.4" fill="#e8ecff"/><rect x="52.0" y="554.2" width="2" height="1.4" fill="#e8ecff"/><rect x="52.0" y="556.6" width="2" height="1.4" fill="#e8ecff"/><rect x="52.0" y="559.0" width="2" height="1.4" fill="#e8ecff"/><rect x="55.0" y="551.8" width="2" height="1.4" fill="#e8ecff"/><rect x="55.0" y="554.2" width="2" height="1.4" fill="#e8ecff"/><rect x="55.0" y="556.6" width="2" height="1.4" fill="#e8ecff"/><rect x="55.0" y="559.0" width="2" height="1.4" fill="#e8ecff"/><rect x="21.4" y="564.1" width="7" height="7" fill="#fff" stroke="#9aa3ad" stroke-width="0.8"/><line x1="22.9" y1="567.6" x2="26.9" y2="567.6" stroke="#333" stroke-width="0.9"/><line x1="24.9" y1="565.6" x2="24.9" y2="569.6" stroke="#333" stroke-width="0.9"/><rect x="33.0" y="563.6" width="9" height="8" fill="#f3ea78" stroke="#4a4a20" stroke-width="0.8"/><rect x="33.0" y="562.6" width="4" height="1.5" fill="#4a4a20"/><rect x="21.4" y="576.3" width="7" height="7" fill="#fff" stroke="#9aa3ad" stroke-width="0.8"/><line x1="22.9" y1="579.8" x2="26.9" y2="579.8" stroke="#333" stroke-width="0.9"/><line x1="24.9" y1="577.8" x2="24.9" y2="581.8" stroke="#333" stroke-width="0.9"/><rect x="33.0" y="575.8" width="9" height="8" fill="#f3ea78" stroke="#4a4a20" stroke-width="0.8"/><rect x="33.0" y="574.8" width="4" height="1.5" fill="#4a4a20"/><line x1="34.5" y1="586.9" x2="34.5" y2="596.9" stroke="#000" stroke-width="1.2"/><path d="M35.0 587.4 h4 l1 1.5 h4 v5 h-4 l-1 -1.5 h-4 z" fill="#e01010"/><rect x="33.0" y="600.1" width="11" height="8" fill="#fff" stroke="#111" stroke-width="1"/><rect x="34.5" y="601.1" width="2.2" height="6" fill="#2030d0"/><rect x="37.5" y="601.1" width="2.2" height="6" fill="#2030d0"/><rect x="40.5" y="601.1" width="2.2" height="6" fill="#2030d0"/><rect x="33.0" y="612.3" width="11" height="8" fill="#fff" stroke="#111" stroke-width="1"/><rect x="34.5" y="613.3" width="2.2" height="6" fill="#2030d0"/><rect x="37.5" y="613.3" width="2.2" height="6" fill="#2030d0"/><rect x="40.5" y="613.3" width="2.2" height="6" fill="#2030d0"/><rect x="33.0" y="624.5" width="11" height="8" fill="#fff" stroke="#111" stroke-width="1"/><rect x="34.5" y="625.5" width="2.2" height="6" fill="#2030d0"/><rect x="37.5" y="625.5" width="2.2" height="6" fill="#2030d0"/><rect x="40.5" y="625.5" width="2.2" height="6" fill="#2030d0"/><rect x="33.0" y="636.7" width="11" height="8" fill="#fff" stroke="#111" stroke-width="1"/><rect x="34.5" y="637.7" width="2.2" height="6" fill="#2030d0"/><rect x="37.5" y="637.7" width="2.2" height="6" fill="#2030d0"/><rect x="40.5" y="637.7" width="2.2" height="6" fill="#2030d0"/><rect x="33.0" y="648.9" width="11" height="8" fill="#fff" stroke="#111" stroke-width="1"/><rect x="34.5" y="649.9" width="2.2" height="6" fill="#2030d0"/><rect x="37.5" y="649.9" width="2.2" height="6" fill="#2030d0"/><rect x="40.5" y="649.9" width="2.2" height="6" fill="#2030d0"/><rect x="33.0" y="661.1" width="11" height="8" fill="#fff" stroke="#111" stroke-width="1"/><rect x="34.5" y="662.1" width="2.2" height="6" fill="#2030d0"/><rect x="37.5" y="662.1" width="2.2" height="6" fill="#2030d0"/><rect x="40.5" y="662.1" width="2.2" height="6" fill="#2030d0"/><rect x="33.0" y="673.3" width="11" height="8" fill="#fff" stroke="#111" stroke-width="1"/><rect x="34.5" y="674.3" width="2.2" height="6" fill="#2030d0"/><rect x="37.5" y="674.3" width="2.2" height="6" fill="#2030d0"/><rect x="40.5" y="674.3" width="2.2" height="6" fill="#2030d0"/></svg>
<div class="tx" style="left:33.9px;top:38.2px;color:#1a1a1a">Fueling (9)</div>
<div class="tx" style="left:33.9px;top:50.4px;color:#1a1a1a">Ignition (14)</div>
<div class="tx" style="left:33.9px;top:62.6px;color:#1a1a1a">Throttle-by-wire (90)</div>
<div class="tx" style="left:48.4px;top:74.8px;color:#1a1a1a">PWR-1 (18)</div>
<div class="tx" style="left:62.9px;top:87.0px;color:#1a1a1a">Mode-1 (6)</div>
<div class="tx" style="left:77.4px;top:99.1px;color:#1a1a1a">ETV Gear-1</div>
<div class="tx" style="left:77.4px;top:111.3px;color:#1a1a1a">ETV Gear-2</div>
<div class="tx" style="left:77.4px;top:123.5px;color:#1a1a1a">ETV Gear-3</div>
<div class="tx" style="left:77.4px;top:135.7px;color:#1a1a1a">ETV Gear-4</div>
<div class="tx" style="left:77.4px;top:147.9px;color:#1a1a1a">ETV Gear-5</div>
<div class="tx" style="left:77.4px;top:160.1px;color:#1a1a1a">ETV Gear-6</div>
<div class="tx" style="left:62.9px;top:172.3px;color:#1a1a1a">Mode-2 (6)</div>
<div class="tx" style="left:62.9px;top:184.5px;color:#1a1a1a">Mode-3 (6)</div>
<div class="tx" style="left:48.4px;top:196.7px;color:#1a1a1a">PWR-2 (18)</div>
<div class="tx" style="left:48.4px;top:208.9px;color:#1a1a1a">PWR-3 (18)</div>
<div class="tx" style="left:48.4px;top:221.1px;color:#1a1a1a">PWR-4 (18)</div>
<div class="tx" style="left:62.9px;top:233.2px;color:#1a1a1a">Mode-1 (6)</div>
<div class="tx" style="left:62.9px;top:245.4px;color:#1a1a1a">Mode-2 (6)</div>
<div class="tx" style="left:77.4px;top:257.6px;color:#1a1a1a">ETV Gear-1</div>
<div class="tx" style="left:77.4px;top:269.8px;color:#1a1a1a">ETV Gear-2</div>
<div class="tx" style="left:77.4px;top:282.0px;color:#1a1a1a">ETV Gear-3</div>
<div class="tx" style="left:77.4px;top:294.2px;color:#1a1a1a">ETV Gear-4</div>
<div class="tx" style="left:77.4px;top:306.4px;color:#1a1a1a">ETV Gear-5</div>
<div class="tx" style="left:77.4px;top:318.6px;color:#1a1a1a">ETV Gear-6</div>
<div class="tx" style="left:62.9px;top:330.8px;color:#1a1a1a">Mode-3 (6)</div>
<div class="tx" style="left:48.4px;top:342.9px;color:#1a1a1a">PWR-5 (18)</div>
<div class="tx" style="left:33.9px;top:355.1px;color:#1a1a1a">Other Maps (9)</div>
<div class="tx" style="left:48.4px;top:367.3px;color:#1a1a1a">Wheelie Control</div>
<div class="tx" style="left:48.4px;top:379.5px;color:#1a1a1a">TC Level vs Wheelie Control level</div>
<div class="tx" style="left:48.4px;top:391.7px;color:#1a1a1a">Quick Shifter Up Shift Level</div>
<div class="tx" style="left:48.4px;top:403.9px;color:#1a1a1a">Quick Shifter Down Shift Level</div>
<div class="tx" style="left:48.4px;top:416.1px;color:#1a1a1a">TC Maps 01</div>
<div class="tx" style="left:48.4px;top:428.3px;color:#1a1a1a">TC Maps 02</div>
<div class="tx" style="left:48.4px;top:440.5px;color:#1a1a1a">TC Maps 03</div>
<div class="tx" style="left:48.4px;top:452.7px;color:#1a1a1a">TC Maps 04</div>
<div class="tx" style="left:48.4px;top:464.8px;color:#1a1a1a">Traction Control Lean Angle vs TPS</div>
<div class="tx" style="left:33.9px;top:477.0px;color:#1a1a1a">ECU Settings (21)</div>
<div class="tx" style="left:48.4px;top:489.2px;color:#1a1a1a">Limiters (5)</div>
<div class="tx" style="left:62.9px;top:501.4px;color:#1a1a1a">Top Speed Limit</div>
<div class="tx" style="left:62.9px;top:513.6px;color:#1a1a1a">Top Speed Limit Max</div>
<div class="tx" style="left:62.9px;top:525.8px;color:#1a1a1a">Rev Limit Fuel</div>
<div class="tx" style="left:62.9px;top:538.0px;color:#1a1a1a">Ignition RPM Limit Offset</div>
<div class="tx" style="left:62.9px;top:550.2px;color:#1a1a1a">Idle RPM neutral</div>
<div class="tx" style="left:48.4px;top:562.4px;color:#1a1a1a">Fan Temp (4)</div>
<div class="tx" style="left:48.4px;top:574.6px;color:#1a1a1a">QS/AB Level Offset (4)</div>
<div class="tx" style="left:48.4px;top:586.7px;color:#1a1a1a">Disable Immo</div>
<div class="tx" style="left:48.4px;top:598.9px;color:#1a1a1a">Disable Stock O2 Sensor</div>
<div class="tx" style="left:48.4px;top:611.1px;color:#1a1a1a">Disable Fuel Cut</div>
<div class="tx" style="left:48.4px;top:623.3px;color:#1a1a1a">Disable PAIR Valve</div>
<div class="tx" style="left:48.4px;top:635.5px;color:#1a1a1a">Disable Exhaust Valve</div>
<div class="tx" style="left:48.4px;top:647.7px;color:#1a1a1a">Disable EVAP Valve</div>
<div class="tx" style="left:48.4px;top:659.9px;color:#1a1a1a">Disable Steering Damper</div>
<div class="tx" style="left:48.4px;top:672.1px;color:#1a1a1a">Disable Front Wheel Speed Fault Codes</div>
<div class="a" style="left:337px;top:0;width:6px;height:705px;background:#d6e1ec"></div>
<div class="a" style="left:343px;top:0;width:2px;height:705px;background:#3a3a3a"></div><div class="a" style="left:0;top:0;width:0;height:0;overflow:visible">
<div class="a" style="left:345px;top:-6px;width:1085px;height:324px;background:#d3dfeb;border:1px solid #8c9aa8;border-radius:6px 6px 0 0"></div><div class="a" style="left:346px;top:-5px;width:1083px;height:26px;background:linear-gradient(#c9d7e6,#dde8f3);border-radius:6px 6px 0 0"></div><svg class="a" style="left:351px;top:6px" width="13" height="11" shape-rendering="crispEdges"><rect x="0" y="2" width="13" height="7" fill="#0a0a0a"/><rect x="1" y="0" width="1" height="11" fill="#0a0a0a"/><rect x="3" y="0" width="1" height="11" fill="#0a0a0a"/><rect x="5" y="0" width="1" height="11" fill="#0a0a0a"/><rect x="7" y="0" width="1" height="11" fill="#0a0a0a"/><rect x="9" y="0" width="1" height="11" fill="#0a0a0a"/><rect x="11" y="0" width="1" height="11" fill="#0a0a0a"/></svg><div class="tx" style="left:366px;top:7px;font-size:9.4px;color:#9ea8b2;letter-spacing:-0.55px">ETV Gear-3</div><div class="a" style="left:1399px;top:5px;width:24px;height:13px;border:1px solid #9fb0c2;border-radius:2px;background:linear-gradient(#e4ecf4,#c9d6e4)"></div><svg class="a" style="left:1406px;top:7px" width="10" height="9"><path d="M1.5 1 L8.5 8 M8.5 1 L1.5 8" stroke="#fff" stroke-width="3.2"/><path d="M1.5 1 L8.5 8 M8.5 1 L1.5 8" stroke="#6a727c" stroke-width="1.4"/></svg><div class="a" style="left:350px;top:21px;width:1074px;height:292px;background:#f0f0f0"></div><div class="a" style="left:352px;top:22px;width:2px;height:16px;border-left:1px solid #c8c8c8;border-right:1px solid #fff"></div><svg class="a" style="left:358px;top:24px" width="13" height="13"><rect x="0.5" y="0.5" width="11.5" height="11.5" fill="#222" rx="1"/><rect x="2.5" y="1" width="7" height="4.5" fill="#f4f4f4"/><rect x="2" y="7" width="8" height="5" fill="#3c3c10"/><rect x="3" y="8" width="2" height="3" fill="#9a9a40"/><rect x="7.5" y="9" width="2" height="2" fill="#eee"/></svg><svg class="a" style="left:377px;top:25px" width="11" height="12"><path d="M1 1 L9.5 11 M9.5 1 L1 11" stroke="#e01818" stroke-width="1.8"/></svg><svg class="a" style="left:393px;top:24px" width="14" height="13"><path d="M1 1 V12 H13" stroke="#555" stroke-width="0.8" fill="none"/><path d="M2 5 L4 8 L6 4 L8 8 L10 5 L12 6" stroke="#e02020" stroke-width="1.2" fill="none"/></svg><svg class="a" style="left:410px;top:24px" width="14" height="13"><path d="M7 1 V11 M2 3 H12 M4 11 H10" stroke="#222" stroke-width="1.2"/><path d="M0.5 7 L2.5 3 L4.5 7 Z M9.5 7 L11.5 3 L13.5 7 Z" fill="#c8c040" stroke="#333" stroke-width="0.6"/></svg><div class="a" style="left:426px;top:22px;width:24px;height:15.5px;background:#cce4f7;border:1px solid #a8d0f0"></div><svg class="a" style="left:428px;top:24px" width="22" height="13"><path d="M2 12 L6 2 L10 12 Z" fill="none" stroke="#1020c0" stroke-width="1.6"/><path d="M1 12 H11" stroke="#000" stroke-width="1.4"/><path d="M4 2 L9 5" stroke="#000" stroke-width="1"/><path d="M14 6 H19 L16.5 9 Z" fill="#111"/></svg><svg class="a" style="left:454px;top:24px" width="13" height="13"><path d="M1 1 L10 12 M10 1 L5 6 M1 12 H12" stroke="#a8a8a8" stroke-width="1.2" fill="none"/></svg><svg class="a" style="left:471px;top:24px" width="13" height="13"><path d="M1 1 L5 6 V12 M9 1 L5 6 M10 12 V2 L7 5 M10 2 L13 5" stroke="#a8a8a8" stroke-width="1.2" fill="none"/></svg><div class="a" style="left:498px;top:22px;width:2px;height:16px;border-left:1px solid #c8c8c8;border-right:1px solid #fff"></div><div class="tx" style="left:507px;top:26px;color:#222">Function:</div><div class="a" style="left:544px;top:23px;width:79px;height:14.5px;background:#fff;border:1px solid #d8d8d8;border-radius:2px"></div><div class="tx" style="left:547px;top:26px;color:#111">Interpolate X</div><svg class="a" style="left:613px;top:28px" width="9" height="6"><path d="M1 1 L4.5 4.5 L8 1" stroke="#555" fill="none"/></svg><div class="tx" style="left:629px;top:26px;color:#222">Value:</div><div class="tx" style="left:657px;top:26px;color:#999">9000</div><div class="a" style="left:691px;top:23px;width:35px;height:14.5px;background:#fbfbfb;border:1px solid #dadada;border-radius:2px"></div><div class="tx" style="left:694px;top:26px;color:#111">Execute</div><div class="a" style="left:350.5px;top:40.5px;width:1073.0px;height:254.5px;background:#3e3e3e;border-top:1.5px solid #555"></div><div class="a" style="left:352.0px;top:42.0px;width:1070.0px;height:11px;background:linear-gradient(#f8f8f8,#ececec);border-bottom:1px solid #c4c4c4"></div><div class="tx" style="left:352.0px;top:43.5px;width:1070.0px;text-align:center;font-weight:bold;font-size:9.2px;letter-spacing:-0.1px">ETV Gear-3</div><div class="a" style="left:352.0px;top:53.5px;width:1050.5px;height:218.1px;background:#d4d4d4"></div><div class="a" style="left:352.0px;top:55.0px;width:32.5px;height:9.5px;background:linear-gradient(#f4f4f4,#e4e4e4)"></div><div class="a" style="left:386.5px;top:55.0px;width:33.5px;height:9.5px;background:linear-gradient(#dcdcdc,#cdcdcd);border-right:1px solid #bdbdbd"></div><div class="tx nm" style="left:386.5px;top:55.8px;width:33.5px;text-align:center;color:#111">0.0</div><div class="a" style="left:421.5px;top:55.0px;width:33.5px;height:9.5px;background:linear-gradient(#fdfdfd,#ececec);border-right:1px solid #bdbdbd"></div><div class="tx nm" style="left:421.5px;top:55.8px;width:33.5px;text-align:center;color:#111">1.1</div><div class="a" style="left:456.5px;top:55.0px;width:33.5px;height:9.5px;background:linear-gradient(#fdfdfd,#ececec);border-right:1px solid #bdbdbd"></div><div class="tx nm" style="left:456.5px;top:55.8px;width:33.5px;text-align:center;color:#111">2.5</div><div class="a" style="left:491.5px;top:55.0px;width:33.5px;height:9.5px;background:linear-gradient(#fdfdfd,#ececec);border-right:1px solid #bdbdbd"></div><div class="tx nm" style="left:491.5px;top:55.8px;width:33.5px;text-align:center;color:#111">3.8</div><div class="a" style="left:526.5px;top:55.0px;width:33.5px;height:9.5px;background:linear-gradient(#fdfdfd,#ececec);border-right:1px solid #bdbdbd"></div><div class="tx nm" style="left:526.5px;top:55.8px;width:33.5px;text-align:center;color:#111">5.1</div><div class="a" style="left:561.5px;top:55.0px;width:33.5px;height:9.5px;background:linear-gradient(#fdfdfd,#ececec);border-right:1px solid #bdbdbd"></div><div class="tx nm" style="left:561.5px;top:55.8px;width:33.5px;text-align:center;color:#111">7.4</div><div class="a" style="left:596.5px;top:55.0px;width:33.5px;height:9.5px;background:linear-gradient(#fdfdfd,#ececec);border-right:1px solid #bdbdbd"></div><div class="tx nm" style="left:596.5px;top:55.8px;width:33.5px;text-align:center;color:#111">10.0</div><div class="a" style="left:631.5px;top:55.0px;width:33.5px;height:9.5px;background:linear-gradient(#fdfdfd,#ececec);border-right:1px solid #bdbdbd"></div><div class="tx nm" style="left:631.5px;top:55.8px;width:33.5px;text-align:center;color:#111">12.5</div><div class="a" style="left:666.5px;top:55.0px;width:33.5px;height:9.5px;background:linear-gradient(#fdfdfd,#ececec);border-right:1px solid #bdbdbd"></div><div class="tx nm" style="left:666.5px;top:55.8px;width:33.5px;text-align:center;color:#111">15.7</div><div class="a" style="left:701.5px;top:55.0px;width:33.5px;height:9.5px;background:linear-gradient(#fdfdfd,#ececec);border-right:1px solid #bdbdbd"></div><div class="tx nm" style="left:701.5px;top:55.8px;width:33.5px;text-align:center;color:#111">20.2</div><div class="a" style="left:736.5px;top:55.0px;width:33.5px;height:9.5px;background:linear-gradient(#fdfdfd,#ececec);border-right:1px solid #bdbdbd"></div><div class="tx nm" style="left:736.5px;top:55.8px;width:33.5px;text-align:center;color:#111">21.8</div><div class="a" style="left:771.5px;top:55.0px;width:33.5px;height:9.5px;background:linear-gradient(#fdfdfd,#ececec);border-right:1px solid #bdbdbd"></div><div class="tx nm" style="left:771.5px;top:55.8px;width:33.5px;text-align:center;color:#111">24.9</div><div class="a" style="left:806.5px;top:55.0px;width:33.5px;height:9.5px;background:linear-gradient(#fdfdfd,#ececec);border-right:1px solid #bdbdbd"></div><div class="tx nm" style="left:806.5px;top:55.8px;width:33.5px;text-align:center;color:#111">28.1</div><div class="a" style="left:841.5px;top:55.0px;width:33.5px;height:9.5px;background:linear-gradient(#fdfdfd,#ececec);border-right:1px solid #bdbdbd"></div><div class="tx nm" style="left:841.5px;top:55.8px;width:33.5px;text-align:center;color:#111">30.3</div><div class="a" style="left:876.5px;top:55.0px;width:33.5px;height:9.5px;background:linear-gradient(#fdfdfd,#ececec);border-right:1px solid #bdbdbd"></div><div class="tx nm" style="left:876.5px;top:55.8px;width:33.5px;text-align:center;color:#111">35.4</div><div class="a" style="left:911.5px;top:55.0px;width:33.5px;height:9.5px;background:linear-gradient(#fdfdfd,#ececec);border-right:1px solid #bdbdbd"></div><div class="tx nm" style="left:911.5px;top:55.8px;width:33.5px;text-align:center;color:#111">37.4</div><div class="a" style="left:946.5px;top:55.0px;width:33.5px;height:9.5px;background:linear-gradient(#fdfdfd,#ececec);border-right:1px solid #bdbdbd"></div><div class="tx nm" style="left:946.5px;top:55.8px;width:33.5px;text-align:center;color:#111">40.6</div><div class="a" style="left:981.5px;top:55.0px;width:33.5px;height:9.5px;background:linear-gradient(#fdfdfd,#ececec);border-right:1px solid #bdbdbd"></div><div class="tx nm" style="left:981.5px;top:55.8px;width:33.5px;text-align:center;color:#111">43.6</div><div class="a" style="left:1016.5px;top:55.0px;width:33.5px;height:9.5px;background:linear-gradient(#fdfdfd,#ececec);border-right:1px solid #bdbdbd"></div><div class="tx nm" style="left:1016.5px;top:55.8px;width:33.5px;text-align:center;color:#111">46.9</div><div class="a" style="left:1051.5px;top:55.0px;width:33.5px;height:9.5px;background:linear-gradient(#fdfdfd,#ececec);border-right:1px solid #bdbdbd"></div><div class="tx nm" style="left:1051.5px;top:55.8px;width:33.5px;text-align:center;color:#111">49.9</div><div class="a" style="left:1086.5px;top:55.0px;width:33.5px;height:9.5px;background:linear-gradient(#fdfdfd,#ececec);border-right:1px solid #bdbdbd"></div><div class="tx nm" style="left:1086.5px;top:55.8px;width:33.5px;text-align:center;color:#111">56.1</div><div class="a" style="left:1121.5px;top:55.0px;width:33.5px;height:9.5px;background:linear-gradient(#fdfdfd,#ececec);border-right:1px solid #bdbdbd"></div><div class="tx nm" style="left:1121.5px;top:55.8px;width:33.5px;text-align:center;color:#111">62.4</div><div class="a" style="left:1156.5px;top:55.0px;width:33.5px;height:9.5px;background:linear-gradient(#fdfdfd,#ececec);border-right:1px solid #bdbdbd"></div><div class="tx nm" style="left:1156.5px;top:55.8px;width:33.5px;text-align:center;color:#111">68.6</div><div class="a" style="left:1191.5px;top:55.0px;width:33.5px;height:9.5px;background:linear-gradient(#fdfdfd,#ececec);border-right:1px solid #bdbdbd"></div><div class="tx nm" style="left:1191.5px;top:55.8px;width:33.5px;text-align:center;color:#111">75.7</div><div class="a" style="left:1226.5px;top:55.0px;width:33.5px;height:9.5px;background:linear-gradient(#fdfdfd,#ececec);border-right:1px solid #bdbdbd"></div><div class="tx nm" style="left:1226.5px;top:55.8px;width:33.5px;text-align:center;color:#111">81.0</div><div class="a" style="left:1261.5px;top:55.0px;width:33.5px;height:9.5px;background:linear-gradient(#fdfdfd,#ececec);border-right:1px solid #bdbdbd"></div><div class="tx nm" style="left:1261.5px;top:55.8px;width:33.5px;text-align:center;color:#111">87.4</div><div class="a" style="left:1296.5px;top:55.0px;width:33.5px;height:9.5px;background:linear-gradient(#fdfdfd,#ececec);border-right:1px solid #bdbdbd"></div><div class="tx nm" style="left:1296.5px;top:55.8px;width:33.5px;text-align:center;color:#111">93.5</div><div class="a" style="left:1331.5px;top:55.0px;width:33.5px;height:9.5px;background:linear-gradient(#fdfdfd,#ececec);border-right:1px solid #bdbdbd"></div><div class="tx nm" style="left:1331.5px;top:55.8px;width:33.5px;text-align:center;color:#111">98.5</div><div class="a" style="left:1366.5px;top:55.0px;width:33.5px;height:9.5px;background:linear-gradient(#fdfdfd,#ececec);border-right:1px solid #bdbdbd"></div><div class="tx nm" style="left:1366.5px;top:55.8px;width:33.5px;text-align:center;color:#111">100.0</div><div class="a" style="left:352.0px;top:65.6px;width:32.5px;height:10.2px;background:linear-gradient(#d8d8d8,#c8c8c8);border-bottom:1px solid #bcbcbc"></div><div class="tx nm" style="left:352.0px;top:65.9px;width:32px;text-align:right;color:#111">1000</div><div class="a" style="left:386.5px;top:65.6px;width:34px;height:10.3px;background:#9fd39f;border:1px solid #2a3a2a;"></div><div class="tx nm" style="left:386.5px;top:65.9px;width:34px;text-align:right;color:#111">0.00</div><i class="c" style="left:421.5px;top:65.6px;background:#81fd7f">0.90</i><i class="c" style="left:456.5px;top:65.6px;background:#82fb7f">1.98</i><i class="c" style="left:491.5px;top:65.6px;background:#83fa7f">2.65</i><i class="c" style="left:526.5px;top:65.6px;background:#84f97f">3.11</i><i class="c" style="left:561.5px;top:65.6px;background:#85f87f">3.50</i><i class="c" style="left:596.5px;top:65.6px;background:#85f87f">3.61</i><i class="c" style="left:631.5px;top:65.6px;background:#85f87f">3.75</i><i class="c" style="left:666.5px;top:65.6px;background:#86f77f">4.51</i><i class="c" style="left:701.5px;top:65.6px;background:#88f47e">5.91</i><i class="c" style="left:736.5px;top:65.6px;background:#89f37e">6.56</i><i class="c" style="left:771.5px;top:65.6px;background:#8cf17e">8.01</i><i class="c" style="left:806.5px;top:65.6px;background:#8eee7e">9.62</i><i class="c" style="left:841.5px;top:65.6px;background:#90eb7d">11.02</i><i class="c" style="left:876.5px;top:65.6px;background:#95e67d">14.29</i><i class="c" style="left:911.5px;top:65.6px;background:#97e47c">15.46</i><i class="c" style="left:946.5px;top:65.6px;background:#99e17c">16.73</i><i class="c" style="left:981.5px;top:65.6px;background:#9ae07c">17.43</i><i class="c" style="left:1016.5px;top:65.6px;background:#9ae07c">17.53</i><i class="c" style="left:1051.5px;top:65.6px;background:#9ae07c">17.53</i><i class="c" style="left:1086.5px;top:65.6px;background:#9ae07c">17.53</i><i class="c" style="left:1121.5px;top:65.6px;background:#9ae07c">17.53</i><i class="c" style="left:1156.5px;top:65.6px;background:#9ae07c">17.53</i><i class="c" style="left:1191.5px;top:65.6px;background:#9ae07c">17.53</i><i class="c" style="left:1226.5px;top:65.6px;background:#9ae07c">17.53</i><i class="c" style="left:1261.5px;top:65.6px;background:#9ae07c">17.53</i><i class="c" style="left:1296.5px;top:65.6px;background:#9ae07c">17.53</i><i class="c" style="left:1331.5px;top:65.6px;background:#9ae07c">17.53</i><i class="c" style="left:1366.5px;top:65.6px;background:#9ae07c">17.53</i><div class="a" style="left:352.0px;top:77.0px;width:32.5px;height:10.2px;background:linear-gradient(90deg,#f0f0f0,#fbfbfb);border-bottom:1px solid #bcbcbc"></div><div class="tx nm" style="left:352.0px;top:77.3px;width:32px;text-align:right;color:#111">1200</div><i class="c" style="left:386.5px;top:77.0px;background:#80ff80">0.00</i><i class="c" style="left:421.5px;top:77.0px;background:#81fd7f">0.90</i><i class="c" style="left:456.5px;top:77.0px;background:#82fb7f">1.98</i><i class="c" style="left:491.5px;top:77.0px;background:#83fa7f">2.65</i><i class="c" style="left:526.5px;top:77.0px;background:#84f97f">3.11</i><i class="c" style="left:561.5px;top:77.0px;background:#85f87f">3.50</i><i class="c" style="left:596.5px;top:77.0px;background:#85f87f">3.61</i><i class="c" style="left:631.5px;top:77.0px;background:#85f87f">3.75</i><i class="c" style="left:666.5px;top:77.0px;background:#86f67f">4.61</i><i class="c" style="left:701.5px;top:77.0px;background:#88f47e">5.91</i><i class="c" style="left:736.5px;top:77.0px;background:#89f37e">6.56</i><i class="c" style="left:771.5px;top:77.0px;background:#8cf17e">8.01</i><i class="c" style="left:806.5px;top:77.0px;background:#8eee7e">9.62</i><i class="c" style="left:841.5px;top:77.0px;background:#90eb7d">11.02</i><i class="c" style="left:876.5px;top:77.0px;background:#95e67d">14.29</i><i class="c" style="left:911.5px;top:77.0px;background:#97e47c">15.46</i><i class="c" style="left:946.5px;top:77.0px;background:#99e17c">16.73</i><i class="c" style="left:981.5px;top:77.0px;background:#9ae07c">17.43</i><i class="c" style="left:1016.5px;top:77.0px;background:#9ae07c">17.53</i><i class="c" style="left:1051.5px;top:77.0px;background:#9ae07c">17.53</i><i class="c" style="left:1086.5px;top:77.0px;background:#9ae07c">17.53</i><i class="c" style="left:1121.5px;top:77.0px;background:#9ae07c">17.53</i><i class="c" style="left:1156.5px;top:77.0px;background:#9ae07c">17.53</i><i class="c" style="left:1191.5px;top:77.0px;background:#9ae07c">17.53</i><i class="c" style="left:1226.5px;top:77.0px;background:#9ae07c">17.53</i><i class="c" style="left:1261.5px;top:77.0px;background:#9ae07c">17.53</i><i class="c" style="left:1296.5px;top:77.0px;background:#9ae07c">17.53</i><i class="c" style="left:1331.5px;top:77.0px;background:#9ae07c">17.53</i><i class="c" style="left:1366.5px;top:77.0px;background:#9ae07c">17.53</i><div class="a" style="left:352.0px;top:88.4px;width:32.5px;height:10.2px;background:linear-gradient(90deg,#f0f0f0,#fbfbfb);border-bottom:1px solid #bcbcbc"></div><div class="tx nm" style="left:352.0px;top:88.7px;width:32px;text-align:right;color:#111">1500</div><i class="c" style="left:386.5px;top:88.4px;background:#80ff80">0.00</i><i class="c" style="left:421.5px;top:88.4px;background:#81fd7f">0.81</i><i class="c" style="left:456.5px;top:88.4px;background:#82fc7f">1.47</i><i class="c" style="left:491.5px;top:88.4px;background:#82fb7f">1.98</i><i class="c" style="left:526.5px;top:88.4px;background:#83fa7f">2.35</i><i class="c" style="left:561.5px;top:88.4px;background:#84fa7f">2.84</i><i class="c" style="left:596.5px;top:88.4px;background:#84f97f">2.90</i><i class="c" style="left:631.5px;top:88.4px;background:#85f87f">3.50</i><i class="c" style="left:666.5px;top:88.4px;background:#86f77f">4.41</i><i class="c" style="left:701.5px;top:88.4px;background:#88f47e">5.91</i><i class="c" style="left:736.5px;top:88.4px;background:#89f37e">6.56</i><i class="c" style="left:771.5px;top:88.4px;background:#8cf17e">8.01</i><i class="c" style="left:806.5px;top:88.4px;background:#8eee7e">9.62</i><i class="c" style="left:841.5px;top:88.4px;background:#90eb7d">11.02</i><i class="c" style="left:876.5px;top:88.4px;background:#95e67d">14.29</i><i class="c" style="left:911.5px;top:88.4px;background:#97e47c">15.46</i><i class="c" style="left:946.5px;top:88.4px;background:#99e17c">16.73</i><i class="c" style="left:981.5px;top:88.4px;background:#9ae07c">17.43</i><i class="c" style="left:1016.5px;top:88.4px;background:#9ae07c">17.53</i><i class="c" style="left:1051.5px;top:88.4px;background:#9ae07c">17.53</i><i class="c" style="left:1086.5px;top:88.4px;background:#9ae07c">17.53</i><i class="c" style="left:1121.5px;top:88.4px;background:#9ae07c">17.53</i><i class="c" style="left:1156.5px;top:88.4px;background:#9ae07c">17.53</i><i class="c" style="left:1191.5px;top:88.4px;background:#9ae07c">17.53</i><i class="c" style="left:1226.5px;top:88.4px;background:#9ae07c">17.53</i><i class="c" style="left:1261.5px;top:88.4px;background:#9ae07c">17.53</i><i class="c" style="left:1296.5px;top:88.4px;background:#9ae07c">17.53</i><i class="c" style="left:1331.5px;top:88.4px;background:#9ae07c">17.53</i><i class="c" style="left:1366.5px;top:88.4px;background:#9ae07c">17.53</i><div class="a" style="left:352.0px;top:99.8px;width:32.5px;height:10.2px;background:linear-gradient(90deg,#f0f0f0,#fbfbfb);border-bottom:1px solid #bcbcbc"></div><div class="tx nm" style="left:352.0px;top:100.1px;width:32px;text-align:right;color:#111">2000</div><i class="c" style="left:386.5px;top:99.8px;background:#80ff80">0.00</i><i class="c" style="left:421.5px;top:99.8px;background:#80fe7f">0.39</i><i class="c" style="left:456.5px;top:99.8px;background:#81fd7f">0.88</i><i class="c" style="left:491.5px;top:99.8px;background:#81fc7f">1.26</i><i class="c" style="left:526.5px;top:99.8px;background:#82fc7f">1.53</i><i class="c" style="left:561.5px;top:99.8px;background:#82fb7f">1.94</i><i class="c" style="left:596.5px;top:99.8px;background:#83fa7f">2.35</i><i class="c" style="left:631.5px;top:99.8px;background:#84f97f">3.06</i><i class="c" style="left:666.5px;top:99.8px;background:#86f77f">4.13</i><i class="c" style="left:701.5px;top:99.8px;background:#88f47e">5.93</i><i class="c" style="left:736.5px;top:99.8px;background:#89f37e">6.61</i><i class="c" style="left:771.5px;top:99.8px;background:#8cf17e">8.01</i><i class="c" style="left:806.5px;top:99.8px;background:#8eee7e">9.62</i><i class="c" style="left:841.5px;top:99.8px;background:#90eb7d">11.02</i><i class="c" style="left:876.5px;top:99.8px;background:#95e67d">14.29</i><i class="c" style="left:911.5px;top:99.8px;background:#97e47c">15.46</i><i class="c" style="left:946.5px;top:99.8px;background:#99e17c">16.73</i><i class="c" style="left:981.5px;top:99.8px;background:#9ae07c">17.43</i><i class="c" style="left:1016.5px;top:99.8px;background:#9ae07c">17.53</i><i class="c" style="left:1051.5px;top:99.8px;background:#9ae07c">17.53</i><i class="c" style="left:1086.5px;top:99.8px;background:#9ae07c">17.53</i><i class="c" style="left:1121.5px;top:99.8px;background:#9ae07c">17.53</i><i class="c" style="left:1156.5px;top:99.8px;background:#9ae07c">17.53</i><i class="c" style="left:1191.5px;top:99.8px;background:#9ae07c">17.53</i><i class="c" style="left:1226.5px;top:99.8px;background:#9ae07c">17.53</i><i class="c" style="left:1261.5px;top:99.8px;background:#9ae07c">17.53</i><i class="c" style="left:1296.5px;top:99.8px;background:#9ae07c">17.53</i><i class="c" style="left:1331.5px;top:99.8px;background:#9ae07c">17.53</i><i class="c" style="left:1366.5px;top:99.8px;background:#9ae07c">17.53</i><div class="a" style="left:352.0px;top:111.2px;width:32.5px;height:10.2px;background:linear-gradient(90deg,#f0f0f0,#fbfbfb);border-bottom:1px solid #bcbcbc"></div><div class="tx nm" style="left:352.0px;top:111.5px;width:32px;text-align:right;color:#111">2500</div><i class="c" style="left:386.5px;top:111.2px;background:#80ff80">0.00</i><i class="c" style="left:421.5px;top:111.2px;background:#80fe7f">0.17</i><i class="c" style="left:456.5px;top:111.2px;background:#80fe7f">0.51</i><i class="c" style="left:491.5px;top:111.2px;background:#81fd7f">0.86</i><i class="c" style="left:526.5px;top:111.2px;background:#81fd7f">1.15</i><i class="c" style="left:561.5px;top:111.2px;background:#82fc7f">1.68</i><i class="c" style="left:596.5px;top:111.2px;background:#83fb7f">2.24</i><i class="c" style="left:631.5px;top:111.2px;background:#84f97f">3.01</i><i class="c" style="left:666.5px;top:111.2px;background:#86f77f">4.16</i><i class="c" style="left:701.5px;top:111.2px;background:#89f47e">6.11</i><i class="c" style="left:736.5px;top:111.2px;background:#8af27e">6.92</i><i class="c" style="left:771.5px;top:111.2px;background:#8cf07e">8.52</i><i class="c" style="left:806.5px;top:111.2px;background:#8fed7d">10.32</i><i class="c" style="left:841.5px;top:111.2px;background:#91ea7d">11.64</i><i class="c" style="left:876.5px;top:111.2px;background:#96e57d">14.83</i><i class="c" style="left:911.5px;top:111.2px;background:#98e37c">15.96</i><i class="c" style="left:946.5px;top:111.2px;background:#99e17c">17.21</i><i class="c" style="left:981.5px;top:111.2px;background:#9adf7c">17.91</i><i class="c" style="left:1016.5px;top:111.2px;background:#9bdf7c">18.21</i><i class="c" style="left:1051.5px;top:111.2px;background:#9bdf7c">18.21</i><i class="c" style="left:1086.5px;top:111.2px;background:#9bdf7c">18.21</i><i class="c" style="left:1121.5px;top:111.2px;background:#9bdf7c">18.21</i><i class="c" style="left:1156.5px;top:111.2px;background:#9bdf7c">18.21</i><i class="c" style="left:1191.5px;top:111.2px;background:#9bdf7c">18.21</i><i class="c" style="left:1226.5px;top:111.2px;background:#9bdf7c">18.21</i><i class="c" style="left:1261.5px;top:111.2px;background:#9bdf7c">18.21</i><i class="c" style="left:1296.5px;top:111.2px;background:#9bdf7c">18.21</i><i class="c" style="left:1331.5px;top:111.2px;background:#9bdf7c">18.21</i><i class="c" style="left:1366.5px;top:111.2px;background:#9bdf7c">18.21</i><div class="a" style="left:352.0px;top:122.6px;width:32.5px;height:10.2px;background:linear-gradient(90deg,#f0f0f0,#fbfbfb);border-bottom:1px solid #bcbcbc"></div><div class="tx nm" style="left:352.0px;top:122.9px;width:32px;text-align:right;color:#111">3000</div><i class="c" style="left:386.5px;top:122.6px;background:#80ff80">0.00</i><i class="c" style="left:421.5px;top:122.6px;background:#80fe7f">0.18</i><i class="c" style="left:456.5px;top:122.6px;background:#80fe7f">0.55</i><i class="c" style="left:491.5px;top:122.6px;background:#81fd7f">0.95</i><i class="c" style="left:526.5px;top:122.6px;background:#81fc7f">1.25</i><i class="c" style="left:561.5px;top:122.6px;background:#82fb7f">1.80</i><i class="c" style="left:596.5px;top:122.6px;background:#83fa7f">2.42</i><i class="c" style="left:631.5px;top:122.6px;background:#84f97f">3.31</i><i class="c" style="left:666.5px;top:122.6px;background:#86f77f">4.55</i><i class="c" style="left:701.5px;top:122.6px;background:#8af37e">6.71</i><i class="c" style="left:736.5px;top:122.6px;background:#8bf17e">7.61</i><i class="c" style="left:771.5px;top:122.6px;background:#8eee7e">9.41</i><i class="c" style="left:806.5px;top:122.6px;background:#91eb7d">11.42</i><i class="c" style="left:841.5px;top:122.6px;background:#93e87d">12.92</i><i class="c" style="left:876.5px;top:122.6px;background:#98e27c">16.33</i><i class="c" style="left:911.5px;top:122.6px;background:#9ae07c">17.43</i><i class="c" style="left:946.5px;top:122.6px;background:#9cde7c">18.63</i><i class="c" style="left:981.5px;top:122.6px;background:#9cde7c">18.93</i><i class="c" style="left:1016.5px;top:122.6px;background:#9cdd7c">19.03</i><i class="c" style="left:1051.5px;top:122.6px;background:#9cdd7c">19.14</i><i class="c" style="left:1086.5px;top:122.6px;background:#9cdd7c">19.14</i><i class="c" style="left:1121.5px;top:122.6px;background:#9cdd7c">19.14</i><i class="c" style="left:1156.5px;top:122.6px;background:#9cdd7c">19.14</i><i class="c" style="left:1191.5px;top:122.6px;background:#9cdd7c">19.14</i><i class="c" style="left:1226.5px;top:122.6px;background:#9cdd7c">19.14</i><i class="c" style="left:1261.5px;top:122.6px;background:#9cdd7c">19.14</i><i class="c" style="left:1296.5px;top:122.6px;background:#9cdd7c">19.14</i><i class="c" style="left:1331.5px;top:122.6px;background:#9cdd7c">19.14</i><i class="c" style="left:1366.5px;top:122.6px;background:#9cdd7c">19.14</i><div class="a" style="left:352.0px;top:134.1px;width:32.5px;height:10.2px;background:linear-gradient(90deg,#f0f0f0,#fbfbfb);border-bottom:1px solid #bcbcbc"></div><div class="tx nm" style="left:352.0px;top:134.4px;width:32px;text-align:right;color:#111">4000</div><i class="c" style="left:386.5px;top:134.1px;background:#80ff80">0.00</i><i class="c" style="left:421.5px;top:134.1px;background:#80fe7f">0.25</i><i class="c" style="left:456.5px;top:134.1px;background:#80fd7f">0.63</i><i class="c" style="left:491.5px;top:134.1px;background:#81fd7f">1.06</i><i class="c" style="left:526.5px;top:134.1px;background:#82fc7f">1.40</i><i class="c" style="left:561.5px;top:134.1px;background:#82fb7f">1.99</i><i class="c" style="left:596.5px;top:134.1px;background:#84fa7f">2.70</i><i class="c" style="left:631.5px;top:134.1px;background:#85f87f">3.66</i><i class="c" style="left:666.5px;top:134.1px;background:#87f67f">5.11</i><i class="c" style="left:701.5px;top:134.1px;background:#8bf17e">7.51</i><i class="c" style="left:736.5px;top:134.1px;background:#8cf07e">8.52</i><i class="c" style="left:771.5px;top:134.1px;background:#8fec7d">10.62</i><i class="c" style="left:806.5px;top:134.1px;background:#93e87d">13.12</i><i class="c" style="left:841.5px;top:134.1px;background:#96e47d">15.12</i><i class="c" style="left:876.5px;top:134.1px;background:#9edc7c">20.13</i><i class="c" style="left:911.5px;top:134.1px;background:#a1d87b">21.94</i><i class="c" style="left:946.5px;top:134.1px;background:#a4d47b">24.29</i><i class="c" style="left:981.5px;top:134.1px;background:#a6d37b">25.27</i><i class="c" style="left:1016.5px;top:134.1px;background:#a6d37b">25.27</i><i class="c" style="left:1051.5px;top:134.1px;background:#a6d37b">25.27</i><i class="c" style="left:1086.5px;top:134.1px;background:#a6d37b">25.27</i><i class="c" style="left:1121.5px;top:134.1px;background:#a6d37b">25.27</i><i class="c" style="left:1156.5px;top:134.1px;background:#a6d37b">25.27</i><i class="c" style="left:1191.5px;top:134.1px;background:#a6d37b">25.27</i><i class="c" style="left:1226.5px;top:134.1px;background:#a6d37b">25.27</i><i class="c" style="left:1261.5px;top:134.1px;background:#a6d37b">25.27</i><i class="c" style="left:1296.5px;top:134.1px;background:#a6d37b">25.27</i><i class="c" style="left:1331.5px;top:134.1px;background:#a6d37b">25.27</i><i class="c" style="left:1366.5px;top:134.1px;background:#a6d37b">25.27</i><div class="a" style="left:352.0px;top:145.5px;width:32.5px;height:10.2px;background:linear-gradient(90deg,#f0f0f0,#fbfbfb);border-bottom:1px solid #bcbcbc"></div><div class="tx nm" style="left:352.0px;top:145.8px;width:32px;text-align:right;color:#111">4500</div><i class="c" style="left:386.5px;top:145.5px;background:#80fe7f">0.09</i><i class="c" style="left:421.5px;top:145.5px;background:#80fe7f">0.35</i><i class="c" style="left:456.5px;top:145.5px;background:#81fd7f">0.76</i><i class="c" style="left:491.5px;top:145.5px;background:#81fc7f">1.20</i><i class="c" style="left:526.5px;top:145.5px;background:#82fc7f">1.57</i><i class="c" style="left:561.5px;top:145.5px;background:#83fb7f">2.23</i><i class="c" style="left:596.5px;top:145.5px;background:#84f97f">3.00</i><i class="c" style="left:631.5px;top:145.5px;background:#86f77f">4.08</i><i class="c" style="left:666.5px;top:145.5px;background:#88f57e">5.66</i><i class="c" style="left:701.5px;top:145.5px;background:#8cf07e">8.31</i><i class="c" style="left:736.5px;top:145.5px;background:#8eee7e">9.46</i><i class="c" style="left:771.5px;top:145.5px;background:#91ea7d">11.62</i><i class="c" style="left:806.5px;top:145.5px;background:#95e67d">14.12</i><i class="c" style="left:841.5px;top:145.5px;background:#98e27c">16.13</i><i class="c" style="left:876.5px;top:145.5px;background:#9fda7b">21.24</i><i class="c" style="left:911.5px;top:145.5px;background:#a3d67b">23.34</i><i class="c" style="left:946.5px;top:145.5px;background:#a8d07a">26.64</i><i class="c" style="left:981.5px;top:145.5px;background:#abcc7a">28.85</i><i class="c" style="left:1016.5px;top:145.5px;background:#adca7a">30.05</i><i class="c" style="left:1051.5px;top:145.5px;background:#adca7a">30.35</i><i class="c" style="left:1086.5px;top:145.5px;background:#adca7a">30.48</i><i class="c" style="left:1121.5px;top:145.5px;background:#adca7a">30.48</i><i class="c" style="left:1156.5px;top:145.5px;background:#adca7a">30.48</i><i class="c" style="left:1191.5px;top:145.5px;background:#adca7a">30.48</i><i class="c" style="left:1226.5px;top:145.5px;background:#adca7a">30.48</i><i class="c" style="left:1261.5px;top:145.5px;background:#adca7a">30.48</i><i class="c" style="left:1296.5px;top:145.5px;background:#adca7a">30.48</i><i class="c" style="left:1331.5px;top:145.5px;background:#adca7a">30.48</i><i class="c" style="left:1366.5px;top:145.5px;background:#adca7a">30.48</i><div class="a" style="left:352.0px;top:156.9px;width:32.5px;height:10.2px;background:linear-gradient(90deg,#f0f0f0,#fbfbfb);border-bottom:1px solid #bcbcbc"></div><div class="tx nm" style="left:352.0px;top:157.2px;width:32px;text-align:right;color:#111">5000</div><i class="c" style="left:386.5px;top:156.9px;background:#80fe7f">0.17</i><i class="c" style="left:421.5px;top:156.9px;background:#80fe7f">0.48</i><i class="c" style="left:456.5px;top:156.9px;background:#81fd7f">0.91</i><i class="c" style="left:491.5px;top:156.9px;background:#82fc7f">1.37</i><i class="c" style="left:526.5px;top:156.9px;background:#82fb7f">1.75</i><i class="c" style="left:561.5px;top:156.9px;background:#83fa7f">2.48</i><i class="c" style="left:596.5px;top:156.9px;background:#84f97f">3.31</i><i class="c" style="left:631.5px;top:156.9px;background:#86f77f">4.46</i><i class="c" style="left:666.5px;top:156.9px;background:#89f47e">6.11</i><i class="c" style="left:701.5px;top:156.9px;background:#8def7e">8.93</i><i class="c" style="left:736.5px;top:156.9px;background:#8fed7e">10.14</i><i class="c" style="left:771.5px;top:156.9px;background:#92e97d">12.42</i><i class="c" style="left:806.5px;top:156.9px;background:#96e57d">14.92</i><i class="c" style="left:841.5px;top:156.9px;background:#99e17c">16.93</i><i class="c" style="left:876.5px;top:156.9px;background:#a0d97b">21.84</i><i class="c" style="left:911.5px;top:156.9px;background:#a4d57b">24.04</i><i class="c" style="left:946.5px;top:156.9px;background:#a9cf7a">27.35</i><i class="c" style="left:981.5px;top:156.9px;background:#adca7a">30.15</i><i class="c" style="left:1016.5px;top:156.9px;background:#b0c679">32.45</i><i class="c" style="left:1051.5px;top:156.9px;background:#b3c379">34.25</i><i class="c" style="left:1086.5px;top:156.9px;background:#b6c079">35.95</i><i class="c" style="left:1121.5px;top:156.9px;background:#b7bf78">36.61</i><i class="c" style="left:1156.5px;top:156.9px;background:#b7bf78">36.61</i><i class="c" style="left:1191.5px;top:156.9px;background:#b7bf78">36.61</i><i class="c" style="left:1226.5px;top:156.9px;background:#b7bf78">36.61</i><i class="c" style="left:1261.5px;top:156.9px;background:#b7bf78">36.61</i><i class="c" style="left:1296.5px;top:156.9px;background:#b7bf78">36.61</i><i class="c" style="left:1331.5px;top:156.9px;background:#b7bf78">36.61</i><i class="c" style="left:1366.5px;top:156.9px;background:#b7bf78">36.61</i><div class="a" style="left:352.0px;top:168.3px;width:32.5px;height:10.2px;background:linear-gradient(90deg,#f0f0f0,#fbfbfb);border-bottom:1px solid #bcbcbc"></div><div class="tx nm" style="left:352.0px;top:168.6px;width:32px;text-align:right;color:#111">5500</div><i class="c" style="left:386.5px;top:168.3px;background:#80fe7f">0.26</i><i class="c" style="left:421.5px;top:168.3px;background:#80fd7f">0.60</i><i class="c" style="left:456.5px;top:168.3px;background:#81fd7f">1.04</i><i class="c" style="left:491.5px;top:168.3px;background:#82fc7f">1.54</i><i class="c" style="left:526.5px;top:168.3px;background:#82fb7f">1.95</i><i class="c" style="left:561.5px;top:168.3px;background:#84fa7f">2.73</i><i class="c" style="left:596.5px;top:168.3px;background:#85f87f">3.61</i><i class="c" style="left:631.5px;top:168.3px;background:#87f67f">4.83</i><i class="c" style="left:666.5px;top:168.3px;background:#89f37e">6.61</i><i class="c" style="left:701.5px;top:168.3px;background:#8eee7e">9.62</i><i class="c" style="left:736.5px;top:168.3px;background:#90ec7d">10.80</i><i class="c" style="left:771.5px;top:168.3px;background:#93e87d">13.12</i><i class="c" style="left:806.5px;top:168.3px;background:#97e37c">15.83</i><i class="c" style="left:841.5px;top:168.3px;background:#9ae07c">17.75</i><i class="c" style="left:876.5px;top:168.3px;background:#a2d77b">22.64</i><i class="c" style="left:911.5px;top:168.3px;background:#a5d47b">24.74</i><i class="c" style="left:946.5px;top:168.3px;background:#aace7a">28.05</i><i class="c" style="left:981.5px;top:168.3px;background:#aec979">30.95</i><i class="c" style="left:1016.5px;top:168.3px;background:#b2c479">33.64</i><i class="c" style="left:1051.5px;top:168.3px;background:#b5c079">35.81</i><i class="c" style="left:1086.5px;top:168.3px;background:#babb78">39.07</i><i class="c" style="left:1121.5px;top:168.3px;background:#beb777">41.27</i><i class="c" style="left:1156.5px;top:168.3px;background:#c0b577">42.57</i><i class="c" style="left:1191.5px;top:168.3px;background:#c0b477">42.93</i><i class="c" style="left:1226.5px;top:168.3px;background:#c0b477">42.93</i><i class="c" style="left:1261.5px;top:168.3px;background:#c0b477">42.93</i><i class="c" style="left:1296.5px;top:168.3px;background:#c0b477">42.93</i><i class="c" style="left:1331.5px;top:168.3px;background:#c0b477">42.93</i><i class="c" style="left:1366.5px;top:168.3px;background:#c0b477">42.93</i><div class="a" style="left:352.0px;top:179.7px;width:32.5px;height:10.2px;background:linear-gradient(90deg,#f0f0f0,#fbfbfb);border-bottom:1px solid #bcbcbc"></div><div class="tx nm" style="left:352.0px;top:180.0px;width:32px;text-align:right;color:#111">6000</div><i class="c" style="left:386.5px;top:179.7px;background:#80fe7f">0.34</i><i class="c" style="left:421.5px;top:179.7px;background:#81fd7f">0.76</i><i class="c" style="left:456.5px;top:179.7px;background:#81fc7f">1.25</i><i class="c" style="left:491.5px;top:179.7px;background:#82fb7f">1.75</i><i class="c" style="left:526.5px;top:179.7px;background:#83fb7f">2.16</i><i class="c" style="left:561.5px;top:179.7px;background:#84f97f">3.01</i><i class="c" style="left:596.5px;top:179.7px;background:#85f87f">3.96</i><i class="c" style="left:631.5px;top:179.7px;background:#87f57e">5.31</i><i class="c" style="left:666.5px;top:179.7px;background:#8af27e">7.21</i><i class="c" style="left:701.5px;top:179.7px;background:#8fed7d">10.32</i><i class="c" style="left:736.5px;top:179.7px;background:#91ea7d">11.57</i><i class="c" style="left:771.5px;top:179.7px;background:#94e67d">13.92</i><i class="c" style="left:806.5px;top:179.7px;background:#98e27c">16.48</i><i class="c" style="left:841.5px;top:179.7px;background:#9bde7c">18.43</i><i class="c" style="left:876.5px;top:179.7px;background:#a3d67b">23.34</i><i class="c" style="left:911.5px;top:179.7px;background:#a6d27b">25.34</i><i class="c" style="left:946.5px;top:179.7px;background:#aacd7a">28.54</i><i class="c" style="left:981.5px;top:179.7px;background:#afc879">31.65</i><i class="c" style="left:1016.5px;top:179.7px;background:#b4c279">34.66</i><i class="c" style="left:1051.5px;top:179.7px;background:#b7be78">37.16</i><i class="c" style="left:1086.5px;top:179.7px;background:#beb777">41.37</i><i class="c" style="left:1121.5px;top:179.7px;background:#c3b177">44.87</i><i class="c" style="left:1156.5px;top:179.7px;background:#c7ac76">47.28</i><i class="c" style="left:1191.5px;top:179.7px;background:#caa876">49.58</i><i class="c" style="left:1226.5px;top:179.7px;background:#cba876">50.08</i><i class="c" style="left:1261.5px;top:179.7px;background:#cba876">50.08</i><i class="c" style="left:1296.5px;top:179.7px;background:#cba876">50.08</i><i class="c" style="left:1331.5px;top:179.7px;background:#cba876">50.08</i><i class="c" style="left:1366.5px;top:179.7px;background:#cba876">50.08</i><div class="a" style="left:352.0px;top:191.1px;width:32.5px;height:10.2px;background:linear-gradient(90deg,#f0f0f0,#fbfbfb);border-bottom:1px solid #bcbcbc"></div><div class="tx nm" style="left:352.0px;top:191.4px;width:32px;text-align:right;color:#111">7000</div><i class="c" style="left:386.5px;top:191.1px;background:#80fd7f">0.61</i><i class="c" style="left:421.5px;top:191.1px;background:#81fd7f">1.01</i><i class="c" style="left:456.5px;top:191.1px;background:#82fc7f">1.50</i><i class="c" style="left:491.5px;top:191.1px;background:#83fb7f">2.01</i><i class="c" style="left:526.5px;top:191.1px;background:#83fa7f">2.46</i><i class="c" style="left:561.5px;top:191.1px;background:#85f97f">3.34</i><i class="c" style="left:596.5px;top:191.1px;background:#86f77f">4.35</i><i class="c" style="left:631.5px;top:191.1px;background:#88f47e">5.81</i><i class="c" style="left:666.5px;top:191.1px;background:#8bf17e">7.91</i><i class="c" style="left:701.5px;top:191.1px;background:#91eb7d">11.32</i><i class="c" style="left:736.5px;top:191.1px;background:#93e97d">12.62</i><i class="c" style="left:771.5px;top:191.1px;background:#96e47d">15.03</i><i class="c" style="left:806.5px;top:191.1px;background:#9ae07c">17.63</i><i class="c" style="left:841.5px;top:191.1px;background:#9ddc7c">19.60</i><i class="c" style="left:876.5px;top:191.1px;background:#a4d57b">24.09</i><i class="c" style="left:911.5px;top:191.1px;background:#a7d17a">26.14</i><i class="c" style="left:946.5px;top:191.1px;background:#accc7a">29.30</i><i class="c" style="left:981.5px;top:191.1px;background:#b1c679">32.65</i><i class="c" style="left:1016.5px;top:191.1px;background:#b6c079">35.87</i><i class="c" style="left:1051.5px;top:191.1px;background:#babb78">38.77</i><i class="c" style="left:1086.5px;top:191.1px;background:#c1b377">43.48</i><i class="c" style="left:1121.5px;top:191.1px;background:#c8ab76">48.13</i><i class="c" style="left:1156.5px;top:191.1px;background:#cea475">52.28</i><i class="c" style="left:1191.5px;top:191.1px;background:#d49d75">56.29</i><i class="c" style="left:1226.5px;top:191.1px;background:#d89974">58.60</i><i class="c" style="left:1261.5px;top:191.1px;background:#db9574">60.70</i><i class="c" style="left:1296.5px;top:191.1px;background:#dd9373">61.90</i><i class="c" style="left:1331.5px;top:191.1px;background:#df9173">63.10</i><i class="c" style="left:1366.5px;top:191.1px;background:#df9073">63.40</i><div class="a" style="left:352.0px;top:202.5px;width:32.5px;height:10.2px;background:linear-gradient(90deg,#f0f0f0,#fbfbfb);border-bottom:1px solid #bcbcbc"></div><div class="tx nm" style="left:352.0px;top:202.8px;width:32px;text-align:right;color:#111">8000</div><i class="c" style="left:386.5px;top:202.5px;background:#81fd7f">0.87</i><i class="c" style="left:421.5px;top:202.5px;background:#81fc7f">1.31</i><i class="c" style="left:456.5px;top:202.5px;background:#82fb7f">1.86</i><i class="c" style="left:491.5px;top:202.5px;background:#83fa7f">2.43</i><i class="c" style="left:526.5px;top:202.5px;background:#84f97f">2.95</i><i class="c" style="left:561.5px;top:202.5px;background:#85f87f">3.94</i><i class="c" style="left:596.5px;top:202.5px;background:#87f67f">5.05</i><i class="c" style="left:631.5px;top:202.5px;background:#8af37e">6.67</i><i class="c" style="left:666.5px;top:202.5px;background:#8def7e">8.91</i><i class="c" style="left:701.5px;top:202.5px;background:#92e97d">12.42</i><i class="c" style="left:736.5px;top:202.5px;background:#94e77d">13.74</i><i class="c" style="left:771.5px;top:202.5px;background:#98e27c">16.13</i><i class="c" style="left:806.5px;top:202.5px;background:#9cde7c">18.73</i><i class="c" style="left:841.5px;top:202.5px;background:#9edb7c">20.58</i><i class="c" style="left:876.5px;top:202.5px;background:#a5d37b">25.11</i><i class="c" style="left:911.5px;top:202.5px;background:#a8d07a">27.05</i><i class="c" style="left:946.5px;top:202.5px;background:#adca7a">30.05</i><i class="c" style="left:981.5px;top:202.5px;background:#b2c579">33.25</i><i class="c" style="left:1016.5px;top:202.5px;background:#b7bf78">36.61</i><i class="c" style="left:1051.5px;top:202.5px;background:#bbba78">39.57</i><i class="c" style="left:1086.5px;top:202.5px;background:#c3b177">44.52</i><i class="c" style="left:1121.5px;top:202.5px;background:#caa976">49.43</i><i class="c" style="left:1156.5px;top:202.5px;background:#d1a175">54.09</i><i class="c" style="left:1191.5px;top:202.5px;background:#d99874">59.30</i><i class="c" style="left:1226.5px;top:202.5px;background:#de9173">62.90</i><i class="c" style="left:1261.5px;top:202.5px;background:#e58a72">67.11</i><i class="c" style="left:1296.5px;top:202.5px;background:#ea8472">70.72</i><i class="c" style="left:1331.5px;top:202.5px;background:#ef7e71">74.12</i><i class="c" style="left:1366.5px;top:202.5px;background:#f17b71">75.44</i><div class="a" style="left:352.0px;top:213.9px;width:32.5px;height:10.2px;background:linear-gradient(90deg,#f0f0f0,#fbfbfb);border-bottom:1px solid #bcbcbc"></div><div class="tx nm" style="left:352.0px;top:214.2px;width:32px;text-align:right;color:#111">9000</div><i class="c" style="left:386.5px;top:213.9px;background:#81fd7f">1.12</i><i class="c" style="left:421.5px;top:213.9px;background:#82fc7f">1.61</i><i class="c" style="left:456.5px;top:213.9px;background:#83fb7f">2.27</i><i class="c" style="left:491.5px;top:213.9px;background:#84f97f">2.90</i><i class="c" style="left:526.5px;top:213.9px;background:#85f87f">3.47</i><i class="c" style="left:561.5px;top:213.9px;background:#86f77f">4.55</i><i class="c" style="left:596.5px;top:213.9px;background:#88f47e">5.79</i><i class="c" style="left:631.5px;top:213.9px;background:#8bf17e">7.62</i><i class="c" style="left:666.5px;top:213.9px;background:#8eed7e">9.92</i><i class="c" style="left:701.5px;top:213.9px;background:#94e77d">13.52</i><i class="c" style="left:736.5px;top:213.9px;background:#96e57d">14.82</i><i class="c" style="left:771.5px;top:213.9px;background:#9ae07c">17.30</i><i class="c" style="left:806.5px;top:213.9px;background:#9edc7c">19.95</i><i class="c" style="left:841.5px;top:213.9px;background:#a0d97b">21.84</i><i class="c" style="left:876.5px;top:213.9px;background:#a7d17a">26.25</i><i class="c" style="left:911.5px;top:213.9px;background:#aace7a">28.05</i><i class="c" style="left:946.5px;top:213.9px;background:#aec979">31.05</i><i class="c" style="left:981.5px;top:213.9px;background:#b3c379">34.00</i><i class="c" style="left:1016.5px;top:213.9px;background:#b8be78">37.30</i><i class="c" style="left:1051.5px;top:213.9px;background:#bcb878">40.47</i><i class="c" style="left:1086.5px;top:213.9px;background:#c4b077">45.37</i><i class="c" style="left:1121.5px;top:213.9px;background:#cba776">50.36</i><i class="c" style="left:1156.5px;top:213.9px;background:#d39e75">55.29</i><i class="c" style="left:1191.5px;top:213.9px;background:#db9574">60.90</i><i class="c" style="left:1226.5px;top:213.9px;background:#e18e73">64.96</i><i class="c" style="left:1261.5px;top:213.9px;background:#e98572">70.12</i><i class="c" style="left:1296.5px;top:213.9px;background:#f17c71">75.12</i><i class="c" style="left:1331.5px;top:213.9px;background:#f77470">79.63</i><i class="c" style="left:1366.5px;top:213.9px;background:#fa7170">81.29</i><div class="a" style="left:352.0px;top:225.3px;width:32.5px;height:10.2px;background:linear-gradient(90deg,#f0f0f0,#fbfbfb);border-bottom:1px solid #bcbcbc"></div><div class="tx nm" style="left:352.0px;top:225.6px;width:32px;text-align:right;color:#111">10000</div><i class="c" style="left:386.5px;top:225.3px;background:#82fc7f">1.40</i><i class="c" style="left:421.5px;top:225.3px;background:#82fb7f">1.91</i><i class="c" style="left:456.5px;top:225.3px;background:#83fa7f">2.57</i><i class="c" style="left:491.5px;top:225.3px;background:#84f97f">3.20</i><i class="c" style="left:526.5px;top:225.3px;background:#85f87f">3.77</i><i class="c" style="left:561.5px;top:225.3px;background:#87f67f">4.85</i><i class="c" style="left:596.5px;top:225.3px;background:#89f47e">6.09</i><i class="c" style="left:631.5px;top:225.3px;background:#8bf17e">7.92</i><i class="c" style="left:666.5px;top:225.3px;background:#8fed7e">10.22</i><i class="c" style="left:701.5px;top:225.3px;background:#94e67d">13.82</i><i class="c" style="left:736.5px;top:225.3px;background:#96e47d">15.10</i><i class="c" style="left:771.5px;top:225.3px;background:#9ae07c">17.60</i><i class="c" style="left:806.5px;top:225.3px;background:#9edb7c">20.25</i><i class="c" style="left:841.5px;top:225.3px;background:#a1d87b">22.14</i><i class="c" style="left:876.5px;top:225.3px;background:#a7d07a">26.55</i><i class="c" style="left:911.5px;top:225.3px;background:#aacd7a">28.35</i><i class="c" style="left:946.5px;top:225.3px;background:#afc879">31.35</i><i class="c" style="left:981.5px;top:225.3px;background:#b3c379">34.30</i><i class="c" style="left:1016.5px;top:225.3px;background:#b8bd78">37.60</i><i class="c" style="left:1051.5px;top:225.3px;background:#bcb878">40.39</i><i class="c" style="left:1086.5px;top:225.3px;background:#c5af77">46.00</i><i class="c" style="left:1121.5px;top:225.3px;background:#cda676">51.21</i><i class="c" style="left:1156.5px;top:225.3px;background:#d49d75">56.30</i><i class="c" style="left:1191.5px;top:225.3px;background:#dd9273">62.23</i><i class="c" style="left:1226.5px;top:225.3px;background:#e48b73">66.62</i><i class="c" style="left:1261.5px;top:225.3px;background:#ec8272">71.93</i><i class="c" style="left:1296.5px;top:225.3px;background:#f37971">76.94</i><i class="c" style="left:1331.5px;top:225.3px;background:#fa7270">81.12</i><i class="c" style="left:1366.5px;top:225.3px;background:#fb7070">82.32</i><div class="a" style="left:352.0px;top:236.8px;width:32.5px;height:10.2px;background:linear-gradient(90deg,#f0f0f0,#fbfbfb);border-bottom:1px solid #bcbcbc"></div><div class="tx nm" style="left:352.0px;top:237.1px;width:32px;text-align:right;color:#111">11000</div><i class="c" style="left:386.5px;top:236.8px;background:#82fc7f">1.40</i><i class="c" style="left:421.5px;top:236.8px;background:#82fb7f">1.91</i><i class="c" style="left:456.5px;top:236.8px;background:#83fa7f">2.57</i><i class="c" style="left:491.5px;top:236.8px;background:#84f97f">3.20</i><i class="c" style="left:526.5px;top:236.8px;background:#85f87f">3.77</i><i class="c" style="left:561.5px;top:236.8px;background:#87f67f">4.85</i><i class="c" style="left:596.5px;top:236.8px;background:#89f47e">6.09</i><i class="c" style="left:631.5px;top:236.8px;background:#8bf17e">7.92</i><i class="c" style="left:666.5px;top:236.8px;background:#8fed7e">10.22</i><i class="c" style="left:701.5px;top:236.8px;background:#94e67d">13.82</i><i class="c" style="left:736.5px;top:236.8px;background:#96e47d">15.10</i><i class="c" style="left:771.5px;top:236.8px;background:#9ae07c">17.60</i><i class="c" style="left:806.5px;top:236.8px;background:#9edb7c">20.25</i><i class="c" style="left:841.5px;top:236.8px;background:#a1d87b">22.14</i><i class="c" style="left:876.5px;top:236.8px;background:#a7d07a">26.55</i><i class="c" style="left:911.5px;top:236.8px;background:#aacd7a">28.35</i><i class="c" style="left:946.5px;top:236.8px;background:#afc879">31.35</i><i class="c" style="left:981.5px;top:236.8px;background:#b3c379">34.30</i><i class="c" style="left:1016.5px;top:236.8px;background:#b8bd78">37.60</i><i class="c" style="left:1051.5px;top:236.8px;background:#bcb878">40.39</i><i class="c" style="left:1086.5px;top:236.8px;background:#c5af77">46.00</i><i class="c" style="left:1121.5px;top:236.8px;background:#cda676">51.21</i><i class="c" style="left:1156.5px;top:236.8px;background:#d49d75">56.30</i><i class="c" style="left:1191.5px;top:236.8px;background:#dd9273">62.23</i><i class="c" style="left:1226.5px;top:236.8px;background:#e48b73">66.62</i><i class="c" style="left:1261.5px;top:236.8px;background:#ec8272">71.93</i><i class="c" style="left:1296.5px;top:236.8px;background:#f37971">76.94</i><i class="c" style="left:1331.5px;top:236.8px;background:#fa7270">81.12</i><i class="c" style="left:1366.5px;top:236.8px;background:#fc7070">82.34</i><div class="a" style="left:352.0px;top:248.2px;width:32.5px;height:10.2px;background:linear-gradient(90deg,#f0f0f0,#fbfbfb);border-bottom:1px solid #bcbcbc"></div><div class="tx nm" style="left:352.0px;top:248.5px;width:32px;text-align:right;color:#111">12000</div><i class="c" style="left:386.5px;top:248.2px;background:#82fc7f">1.40</i><i class="c" style="left:421.5px;top:248.2px;background:#82fb7f">1.91</i><i class="c" style="left:456.5px;top:248.2px;background:#83fa7f">2.57</i><i class="c" style="left:491.5px;top:248.2px;background:#84f97f">3.20</i><i class="c" style="left:526.5px;top:248.2px;background:#85f87f">3.77</i><i class="c" style="left:561.5px;top:248.2px;background:#87f67f">4.85</i><i class="c" style="left:596.5px;top:248.2px;background:#89f47e">6.09</i><i class="c" style="left:631.5px;top:248.2px;background:#8bf17e">7.92</i><i class="c" style="left:666.5px;top:248.2px;background:#8fed7e">10.22</i><i class="c" style="left:701.5px;top:248.2px;background:#94e67d">13.82</i><i class="c" style="left:736.5px;top:248.2px;background:#96e47d">15.10</i><i class="c" style="left:771.5px;top:248.2px;background:#9ae07c">17.60</i><i class="c" style="left:806.5px;top:248.2px;background:#9edb7c">20.25</i><i class="c" style="left:841.5px;top:248.2px;background:#a1d87b">22.14</i><i class="c" style="left:876.5px;top:248.2px;background:#a7d07a">26.55</i><i class="c" style="left:911.5px;top:248.2px;background:#aacd7a">28.35</i><i class="c" style="left:946.5px;top:248.2px;background:#afc879">31.35</i><i class="c" style="left:981.5px;top:248.2px;background:#b3c379">34.30</i><i class="c" style="left:1016.5px;top:248.2px;background:#b8bd78">37.60</i><i class="c" style="left:1051.5px;top:248.2px;background:#bcb878">40.39</i><i class="c" style="left:1086.5px;top:248.2px;background:#c5af77">46.00</i><i class="c" style="left:1121.5px;top:248.2px;background:#cda676">51.21</i><i class="c" style="left:1156.5px;top:248.2px;background:#d49d75">56.30</i><i class="c" style="left:1191.5px;top:248.2px;background:#dd9273">62.23</i><i class="c" style="left:1226.5px;top:248.2px;background:#e48b73">66.62</i><i class="c" style="left:1261.5px;top:248.2px;background:#ec8272">71.93</i><i class="c" style="left:1296.5px;top:248.2px;background:#f37971">76.94</i><i class="c" style="left:1331.5px;top:248.2px;background:#fa7270">81.12</i><i class="c" style="left:1366.5px;top:248.2px;background:#fc7070">82.34</i><div class="a" style="left:352.0px;top:259.6px;width:32.5px;height:10.2px;background:linear-gradient(90deg,#f0f0f0,#fbfbfb);border-bottom:1px solid #bcbcbc"></div><div class="tx nm" style="left:352.0px;top:259.9px;width:32px;text-align:right;color:#111">13000</div><i class="c" style="left:386.5px;top:259.6px;background:#82fc7f">1.40</i><i class="c" style="left:421.5px;top:259.6px;background:#82fb7f">1.91</i><i class="c" style="left:456.5px;top:259.6px;background:#83fa7f">2.57</i><i class="c" style="left:491.5px;top:259.6px;background:#84f97f">3.20</i><i class="c" style="left:526.5px;top:259.6px;background:#85f87f">3.77</i><i class="c" style="left:561.5px;top:259.6px;background:#87f67f">4.85</i><i class="c" style="left:596.5px;top:259.6px;background:#89f47e">6.09</i><i class="c" style="left:631.5px;top:259.6px;background:#8bf17e">7.92</i><i class="c" style="left:666.5px;top:259.6px;background:#8fed7e">10.22</i><i class="c" style="left:701.5px;top:259.6px;background:#94e67d">13.82</i><i class="c" style="left:736.5px;top:259.6px;background:#96e47d">15.10</i><i class="c" style="left:771.5px;top:259.6px;background:#9ae07c">17.60</i><i class="c" style="left:806.5px;top:259.6px;background:#9edb7c">20.25</i><i class="c" style="left:841.5px;top:259.6px;background:#a1d87b">22.14</i><i class="c" style="left:876.5px;top:259.6px;background:#a7d07a">26.55</i><i class="c" style="left:911.5px;top:259.6px;background:#aacd7a">28.35</i><i class="c" style="left:946.5px;top:259.6px;background:#afc879">31.35</i><i class="c" style="left:981.5px;top:259.6px;background:#b3c379">34.30</i><i class="c" style="left:1016.5px;top:259.6px;background:#b8bd78">37.60</i><i class="c" style="left:1051.5px;top:259.6px;background:#bcb878">40.39</i><i class="c" style="left:1086.5px;top:259.6px;background:#c5af77">46.00</i><i class="c" style="left:1121.5px;top:259.6px;background:#cda676">51.21</i><i class="c" style="left:1156.5px;top:259.6px;background:#d49d75">56.30</i><i class="c" style="left:1191.5px;top:259.6px;background:#dd9273">62.23</i><i class="c" style="left:1226.5px;top:259.6px;background:#e48b73">66.62</i><i class="c" style="left:1261.5px;top:259.6px;background:#ec8272">71.93</i><i class="c" style="left:1296.5px;top:259.6px;background:#f37971">76.94</i><i class="c" style="left:1331.5px;top:259.6px;background:#fa7270">81.12</i><i class="c" style="left:1366.5px;top:259.6px;background:#fc7070">82.34</i><svg class="a" style="left:1416px;top:304px" width="8" height="8"><g fill="#a0a0a0"><rect x="6" y="1" width="1" height="1"/><rect x="4" y="3" width="1" height="1"/><rect x="6" y="3" width="1" height="1"/><rect x="2" y="5" width="1" height="1"/><rect x="4" y="5" width="1" height="1"/><rect x="6" y="5" width="1" height="1"/></g></svg>
<div class="a" style="left:348px;top:328px;width:1086px;height:321px;background:#d3dfeb;border:1px solid #8c9aa8;border-radius:6px 6px 0 0"></div><div class="a" style="left:349px;top:329px;width:1084px;height:21px;background:linear-gradient(#c9d7e6,#dde8f3);border-radius:6px 6px 0 0"></div><svg class="a" style="left:355px;top:336px" width="13" height="11" shape-rendering="crispEdges"><rect x="0" y="2" width="13" height="7" fill="#0a0a0a"/><rect x="1" y="0" width="1" height="11" fill="#0a0a0a"/><rect x="3" y="0" width="1" height="11" fill="#0a0a0a"/><rect x="5" y="0" width="1" height="11" fill="#0a0a0a"/><rect x="7" y="0" width="1" height="11" fill="#0a0a0a"/><rect x="9" y="0" width="1" height="11" fill="#0a0a0a"/><rect x="11" y="0" width="1" height="11" fill="#0a0a0a"/></svg><div class="tx" style="left:370px;top:337px;font-size:9.4px;color:#9ea8b2;letter-spacing:-0.55px">ETV Gear-3</div><div class="a" style="left:1402px;top:335px;width:24px;height:12px;border:1px solid #9fb0c2;border-radius:2px;background:linear-gradient(#e4ecf4,#c9d6e4)"></div><svg class="a" style="left:1409px;top:337px" width="10" height="9"><path d="M1.5 1 L8.5 8 M8.5 1 L1.5 8" stroke="#fff" stroke-width="3.2"/><path d="M1.5 1 L8.5 8 M8.5 1 L1.5 8" stroke="#6a727c" stroke-width="1.4"/></svg><div class="a" style="left:354px;top:350px;width:1074px;height:294px;background:#f0f0f0"></div><div class="a" style="left:356px;top:352px;width:2px;height:16px;border-left:1px solid #c8c8c8;border-right:1px solid #fff"></div><svg class="a" style="left:362px;top:354px" width="13" height="13"><rect x="0.5" y="0.5" width="11.5" height="11.5" fill="#222" rx="1"/><rect x="2.5" y="1" width="7" height="4.5" fill="#f4f4f4"/><rect x="2" y="7" width="8" height="5" fill="#3c3c10"/><rect x="3" y="8" width="2" height="3" fill="#9a9a40"/><rect x="7.5" y="9" width="2" height="2" fill="#eee"/></svg><svg class="a" style="left:381px;top:355px" width="11" height="12"><path d="M1 1 L9.5 11 M9.5 1 L1 11" stroke="#e01818" stroke-width="1.8"/></svg><svg class="a" style="left:397px;top:354px" width="14" height="13"><path d="M1 1 V12 H13" stroke="#555" stroke-width="0.8" fill="none"/><path d="M2 5 L4 8 L6 4 L8 8 L10 5 L12 6" stroke="#e02020" stroke-width="1.2" fill="none"/></svg><svg class="a" style="left:414px;top:354px" width="14" height="13"><path d="M7 1 V11 M2 3 H12 M4 11 H10" stroke="#222" stroke-width="1.2"/><path d="M0.5 7 L2.5 3 L4.5 7 Z M9.5 7 L11.5 3 L13.5 7 Z" fill="#c8c040" stroke="#333" stroke-width="0.6"/></svg><div class="a" style="left:430px;top:352px;width:24px;height:15.5px;background:#cce4f7;border:1px solid #a8d0f0"></div><svg class="a" style="left:432px;top:354px" width="22" height="13"><path d="M2 12 L6 2 L10 12 Z" fill="none" stroke="#1020c0" stroke-width="1.6"/><path d="M1 12 H11" stroke="#000" stroke-width="1.4"/><path d="M4 2 L9 5" stroke="#000" stroke-width="1"/><path d="M14 6 H19 L16.5 9 Z" fill="#111"/></svg><svg class="a" style="left:458px;top:354px" width="13" height="13"><path d="M1 1 L10 12 M10 1 L5 6 M1 12 H12" stroke="#a8a8a8" stroke-width="1.2" fill="none"/></svg><svg class="a" style="left:475px;top:354px" width="13" height="13"><path d="M1 1 L5 6 V12 M9 1 L5 6 M10 12 V2 L7 5 M10 2 L13 5" stroke="#a8a8a8" stroke-width="1.2" fill="none"/></svg><div class="a" style="left:502px;top:352px;width:2px;height:16px;border-left:1px solid #c8c8c8;border-right:1px solid #fff"></div><div class="tx" style="left:511px;top:356px;color:#222">Function:</div><div class="a" style="left:548px;top:353px;width:79px;height:14.5px;background:#fff;border:1px solid #d8d8d8;border-radius:2px"></div><div class="tx" style="left:551px;top:356px;color:#111">Interpolate X</div><svg class="a" style="left:617px;top:358px" width="9" height="6"><path d="M1 1 L4.5 4.5 L8 1" stroke="#555" fill="none"/></svg><div class="tx" style="left:633px;top:356px;color:#222">Value:</div><div class="tx" style="left:661px;top:356px;color:#999">9000</div><div class="a" style="left:695px;top:353px;width:35px;height:14.5px;background:#fbfbfb;border:1px solid #dadada;border-radius:2px"></div><div class="tx" style="left:698px;top:356px;color:#111">Execute</div><div class="a" style="left:354.5px;top:370.0px;width:1073.0px;height:254.5px;background:#3e3e3e;border-top:1.5px solid #555"></div><div class="a" style="left:356.0px;top:371.5px;width:1070.0px;height:11px;background:linear-gradient(#f8f8f8,#ececec);border-bottom:1px solid #c4c4c4"></div><div class="tx" style="left:356.0px;top:373.0px;width:1070.0px;text-align:center;font-weight:bold;font-size:9.2px;letter-spacing:-0.1px">ETV Gear-3</div><div class="a" style="left:356.0px;top:383.0px;width:1050.5px;height:218.1px;background:#d4d4d4"></div><div class="a" style="left:356.0px;top:384.5px;width:32.5px;height:9.5px;background:linear-gradient(#f4f4f4,#e4e4e4)"></div><div class="a" style="left:390.5px;top:384.5px;width:33.5px;height:9.5px;background:linear-gradient(#dcdcdc,#cdcdcd);border-right:1px solid #bdbdbd"></div><div class="tx nm" style="left:390.5px;top:385.3px;width:33.5px;text-align:center;color:#111">0.0</div><div class="a" style="left:425.5px;top:384.5px;width:33.5px;height:9.5px;background:linear-gradient(#fdfdfd,#ececec);border-right:1px solid #bdbdbd"></div><div class="tx nm" style="left:425.5px;top:385.3px;width:33.5px;text-align:center;color:#111">1.1</div><div class="a" style="left:460.5px;top:384.5px;width:33.5px;height:9.5px;background:linear-gradient(#fdfdfd,#ececec);border-right:1px solid #bdbdbd"></div><div class="tx nm" style="left:460.5px;top:385.3px;width:33.5px;text-align:center;color:#111">2.5</div><div class="a" style="left:495.5px;top:384.5px;width:33.5px;height:9.5px;background:linear-gradient(#fdfdfd,#ececec);border-right:1px solid #bdbdbd"></div><div class="tx nm" style="left:495.5px;top:385.3px;width:33.5px;text-align:center;color:#111">3.8</div><div class="a" style="left:530.5px;top:384.5px;width:33.5px;height:9.5px;background:linear-gradient(#fdfdfd,#ececec);border-right:1px solid #bdbdbd"></div><div class="tx nm" style="left:530.5px;top:385.3px;width:33.5px;text-align:center;color:#111">5.1</div><div class="a" style="left:565.5px;top:384.5px;width:33.5px;height:9.5px;background:linear-gradient(#fdfdfd,#ececec);border-right:1px solid #bdbdbd"></div><div class="tx nm" style="left:565.5px;top:385.3px;width:33.5px;text-align:center;color:#111">7.4</div><div class="a" style="left:600.5px;top:384.5px;width:33.5px;height:9.5px;background:linear-gradient(#fdfdfd,#ececec);border-right:1px solid #bdbdbd"></div><div class="tx nm" style="left:600.5px;top:385.3px;width:33.5px;text-align:center;color:#111">10.0</div><div class="a" style="left:635.5px;top:384.5px;width:33.5px;height:9.5px;background:linear-gradient(#fdfdfd,#ececec);border-right:1px solid #bdbdbd"></div><div class="tx nm" style="left:635.5px;top:385.3px;width:33.5px;text-align:center;color:#111">12.5</div><div class="a" style="left:670.5px;top:384.5px;width:33.5px;height:9.5px;background:linear-gradient(#fdfdfd,#ececec);border-right:1px solid #bdbdbd"></div><div class="tx nm" style="left:670.5px;top:385.3px;width:33.5px;text-align:center;color:#111">15.7</div><div class="a" style="left:705.5px;top:384.5px;width:33.5px;height:9.5px;background:linear-gradient(#fdfdfd,#ececec);border-right:1px solid #bdbdbd"></div><div class="tx nm" style="left:705.5px;top:385.3px;width:33.5px;text-align:center;color:#111">20.2</div><div class="a" style="left:740.5px;top:384.5px;width:33.5px;height:9.5px;background:linear-gradient(#fdfdfd,#ececec);border-right:1px solid #bdbdbd"></div><div class="tx nm" style="left:740.5px;top:385.3px;width:33.5px;text-align:center;color:#111">21.8</div><div class="a" style="left:775.5px;top:384.5px;width:33.5px;height:9.5px;background:linear-gradient(#fdfdfd,#ececec);border-right:1px solid #bdbdbd"></div><div class="tx nm" style="left:775.5px;top:385.3px;width:33.5px;text-align:center;color:#111">24.9</div><div class="a" style="left:810.5px;top:384.5px;width:33.5px;height:9.5px;background:linear-gradient(#fdfdfd,#ececec);border-right:1px solid #bdbdbd"></div><div class="tx nm" style="left:810.5px;top:385.3px;width:33.5px;text-align:center;color:#111">28.1</div><div class="a" style="left:845.5px;top:384.5px;width:33.5px;height:9.5px;background:linear-gradient(#fdfdfd,#ececec);border-right:1px solid #bdbdbd"></div><div class="tx nm" style="left:845.5px;top:385.3px;width:33.5px;text-align:center;color:#111">30.3</div><div class="a" style="left:880.5px;top:384.5px;width:33.5px;height:9.5px;background:linear-gradient(#fdfdfd,#ececec);border-right:1px solid #bdbdbd"></div><div class="tx nm" style="left:880.5px;top:385.3px;width:33.5px;text-align:center;color:#111">35.4</div><div class="a" style="left:915.5px;top:384.5px;width:33.5px;height:9.5px;background:linear-gradient(#fdfdfd,#ececec);border-right:1px solid #bdbdbd"></div><div class="tx nm" style="left:915.5px;top:385.3px;width:33.5px;text-align:center;color:#111">37.4</div><div class="a" style="left:950.5px;top:384.5px;width:33.5px;height:9.5px;background:linear-gradient(#fdfdfd,#ececec);border-right:1px solid #bdbdbd"></div><div class="tx nm" style="left:950.5px;top:385.3px;width:33.5px;text-align:center;color:#111">40.6</div><div class="a" style="left:985.5px;top:384.5px;width:33.5px;height:9.5px;background:linear-gradient(#fdfdfd,#ececec);border-right:1px solid #bdbdbd"></div><div class="tx nm" style="left:985.5px;top:385.3px;width:33.5px;text-align:center;color:#111">43.6</div><div class="a" style="left:1020.5px;top:384.5px;width:33.5px;height:9.5px;background:linear-gradient(#fdfdfd,#ececec);border-right:1px solid #bdbdbd"></div><div class="tx nm" style="left:1020.5px;top:385.3px;width:33.5px;text-align:center;color:#111">46.9</div><div class="a" style="left:1055.5px;top:384.5px;width:33.5px;height:9.5px;background:linear-gradient(#fdfdfd,#ececec);border-right:1px solid #bdbdbd"></div><div class="tx nm" style="left:1055.5px;top:385.3px;width:33.5px;text-align:center;color:#111">49.9</div><div class="a" style="left:1090.5px;top:384.5px;width:33.5px;height:9.5px;background:linear-gradient(#fdfdfd,#ececec);border-right:1px solid #bdbdbd"></div><div class="tx nm" style="left:1090.5px;top:385.3px;width:33.5px;text-align:center;color:#111">56.1</div><div class="a" style="left:1125.5px;top:384.5px;width:33.5px;height:9.5px;background:linear-gradient(#fdfdfd,#ececec);border-right:1px solid #bdbdbd"></div><div class="tx nm" style="left:1125.5px;top:385.3px;width:33.5px;text-align:center;color:#111">62.4</div><div class="a" style="left:1160.5px;top:384.5px;width:33.5px;height:9.5px;background:linear-gradient(#fdfdfd,#ececec);border-right:1px solid #bdbdbd"></div><div class="tx nm" style="left:1160.5px;top:385.3px;width:33.5px;text-align:center;color:#111">68.6</div><div class="a" style="left:1195.5px;top:384.5px;width:33.5px;height:9.5px;background:linear-gradient(#fdfdfd,#ececec);border-right:1px solid #bdbdbd"></div><div class="tx nm" style="left:1195.5px;top:385.3px;width:33.5px;text-align:center;color:#111">75.7</div><div class="a" style="left:1230.5px;top:384.5px;width:33.5px;height:9.5px;background:linear-gradient(#fdfdfd,#ececec);border-right:1px solid #bdbdbd"></div><div class="tx nm" style="left:1230.5px;top:385.3px;width:33.5px;text-align:center;color:#111">81.0</div><div class="a" style="left:1265.5px;top:384.5px;width:33.5px;height:9.5px;background:linear-gradient(#fdfdfd,#ececec);border-right:1px solid #bdbdbd"></div><div class="tx nm" style="left:1265.5px;top:385.3px;width:33.5px;text-align:center;color:#111">87.4</div><div class="a" style="left:1300.5px;top:384.5px;width:33.5px;height:9.5px;background:linear-gradient(#fdfdfd,#ececec);border-right:1px solid #bdbdbd"></div><div class="tx nm" style="left:1300.5px;top:385.3px;width:33.5px;text-align:center;color:#111">93.5</div><div class="a" style="left:1335.5px;top:384.5px;width:33.5px;height:9.5px;background:linear-gradient(#fdfdfd,#ececec);border-right:1px solid #bdbdbd"></div><div class="tx nm" style="left:1335.5px;top:385.3px;width:33.5px;text-align:center;color:#111">98.5</div><div class="a" style="left:1370.5px;top:384.5px;width:33.5px;height:9.5px;background:linear-gradient(#fdfdfd,#ececec);border-right:1px solid #bdbdbd"></div><div class="tx nm" style="left:1370.5px;top:385.3px;width:33.5px;text-align:center;color:#111">100.0</div><div class="a" style="left:356.0px;top:395.1px;width:32.5px;height:10.2px;background:linear-gradient(#d8d8d8,#c8c8c8);border-bottom:1px solid #bcbcbc"></div><div class="tx nm" style="left:356.0px;top:395.4px;width:32px;text-align:right;color:#111">1000</div><div class="a" style="left:390.5px;top:395.1px;width:34px;height:10.3px;background:#9fd39f;border:1px solid #2a3a2a;"></div><div class="tx nm" style="left:390.5px;top:395.4px;width:34px;text-align:right;color:#111">0.00</div><i class="c" style="left:425.5px;top:395.1px;background:#81fd7f">0.82</i><i class="c" style="left:460.5px;top:395.1px;background:#83fb7f">1.79</i><i class="c" style="left:495.5px;top:395.1px;background:#84fa7f">2.40</i><i class="c" style="left:530.5px;top:395.1px;background:#84f97f">2.82</i><i class="c" style="left:565.5px;top:395.1px;background:#85f87f">3.17</i><i class="c" style="left:600.5px;top:395.1px;background:#85f87f">3.27</i><i class="c" style="left:635.5px;top:395.1px;background:#85f87f">3.40</i><i class="c" style="left:670.5px;top:395.1px;background:#86f77f">4.09</i><i class="c" style="left:705.5px;top:395.1px;background:#89f47e">5.35</i><i class="c" style="left:740.5px;top:395.1px;background:#8af37e">5.94</i><i class="c" style="left:775.5px;top:395.1px;background:#8cf07e">7.26</i><i class="c" style="left:810.5px;top:395.1px;background:#8eed7e">8.71</i><i class="c" style="left:845.5px;top:395.1px;background:#90eb7d">9.98</i><i class="c" style="left:880.5px;top:395.1px;background:#95e57d">12.94</i><i class="c" style="left:915.5px;top:395.1px;background:#97e37c">14.00</i><i class="c" style="left:950.5px;top:395.1px;background:#99e17c">15.16</i><i class="c" style="left:985.5px;top:395.1px;background:#9ae07c">15.79</i><i class="c" style="left:1020.5px;top:395.1px;background:#9ae07c">15.88</i><i class="c" style="left:1055.5px;top:395.1px;background:#9ae07c">15.88</i><i class="c" style="left:1090.5px;top:395.1px;background:#9cde7c">16.88</i><i class="c" style="left:1125.5px;top:395.1px;background:#9cde7c">16.88</i><i class="c" style="left:1160.5px;top:395.1px;background:#9cde7c">16.88</i><i class="c" style="left:1195.5px;top:395.1px;background:#9cde7c">16.88</i><i class="c" style="left:1230.5px;top:395.1px;background:#9cde7c">16.88</i><i class="c" style="left:1265.5px;top:395.1px;background:#9cde7c">16.88</i><i class="c" style="left:1300.5px;top:395.1px;background:#9cde7c">16.88</i><i class="c" style="left:1335.5px;top:395.1px;background:#9cde7c">16.88</i><i class="c" style="left:1370.5px;top:395.1px;background:#9cde7c">16.88</i><div class="a" style="left:356.0px;top:406.5px;width:32.5px;height:10.2px;background:linear-gradient(90deg,#f0f0f0,#fbfbfb);border-bottom:1px solid #bcbcbc"></div><div class="tx nm" style="left:356.0px;top:406.8px;width:32px;text-align:right;color:#111">1200</div><i class="c" style="left:390.5px;top:406.5px;background:#80ff80">0.00</i><i class="c" style="left:425.5px;top:406.5px;background:#81fd7f">0.82</i><i class="c" style="left:460.5px;top:406.5px;background:#83fb7f">1.79</i><i class="c" style="left:495.5px;top:406.5px;background:#84fa7f">2.40</i><i class="c" style="left:530.5px;top:406.5px;background:#84f97f">2.82</i><i class="c" style="left:565.5px;top:406.5px;background:#85f87f">3.17</i><i class="c" style="left:600.5px;top:406.5px;background:#85f87f">3.27</i><i class="c" style="left:635.5px;top:406.5px;background:#85f87f">3.40</i><i class="c" style="left:670.5px;top:406.5px;background:#87f67f">4.18</i><i class="c" style="left:705.5px;top:406.5px;background:#89f47e">5.35</i><i class="c" style="left:740.5px;top:406.5px;background:#8af37e">5.94</i><i class="c" style="left:775.5px;top:406.5px;background:#8cf07e">7.26</i><i class="c" style="left:810.5px;top:406.5px;background:#8eed7e">8.71</i><i class="c" style="left:845.5px;top:406.5px;background:#90eb7d">9.98</i><i class="c" style="left:880.5px;top:406.5px;background:#95e57d">12.94</i><i class="c" style="left:915.5px;top:406.5px;background:#97e37c">14.00</i><i class="c" style="left:950.5px;top:406.5px;background:#99e17c">15.16</i><i class="c" style="left:985.5px;top:406.5px;background:#9ae07c">15.79</i><i class="c" style="left:1020.5px;top:406.5px;background:#9ae07c">15.88</i><i class="c" style="left:1055.5px;top:406.5px;background:#9ae07c">15.88</i><i class="c" style="left:1090.5px;top:406.5px;background:#9cde7c">16.88</i><i class="c" style="left:1125.5px;top:406.5px;background:#9cde7c">16.88</i><i class="c" style="left:1160.5px;top:406.5px;background:#9cde7c">16.88</i><i class="c" style="left:1195.5px;top:406.5px;background:#9cde7c">16.88</i><i class="c" style="left:1230.5px;top:406.5px;background:#9cde7c">16.88</i><i class="c" style="left:1265.5px;top:406.5px;background:#9cde7c">16.88</i><i class="c" style="left:1300.5px;top:406.5px;background:#9cde7c">16.88</i><i class="c" style="left:1335.5px;top:406.5px;background:#9cde7c">16.88</i><i class="c" style="left:1370.5px;top:406.5px;background:#9cde7c">16.88</i><div class="a" style="left:356.0px;top:417.9px;width:32.5px;height:10.2px;background:linear-gradient(90deg,#f0f0f0,#fbfbfb);border-bottom:1px solid #bcbcbc"></div><div class="tx nm" style="left:356.0px;top:418.2px;width:32px;text-align:right;color:#111">1500</div><i class="c" style="left:390.5px;top:417.9px;background:#80ff80">0.00</i><i class="c" style="left:425.5px;top:417.9px;background:#81fd7f">0.73</i><i class="c" style="left:460.5px;top:417.9px;background:#82fc7f">1.33</i><i class="c" style="left:495.5px;top:417.9px;background:#83fb7f">1.79</i><i class="c" style="left:530.5px;top:417.9px;background:#83fa7f">2.13</i><i class="c" style="left:565.5px;top:417.9px;background:#84f97f">2.57</i><i class="c" style="left:600.5px;top:417.9px;background:#84f97f">2.63</i><i class="c" style="left:635.5px;top:417.9px;background:#85f87f">3.17</i><i class="c" style="left:670.5px;top:417.9px;background:#86f77f">3.99</i><i class="c" style="left:705.5px;top:417.9px;background:#89f47e">5.35</i><i class="c" style="left:740.5px;top:417.9px;background:#8af37e">5.94</i><i class="c" style="left:775.5px;top:417.9px;background:#8cf07e">7.26</i><i class="c" style="left:810.5px;top:417.9px;background:#8eed7e">8.71</i><i class="c" style="left:845.5px;top:417.9px;background:#90eb7d">9.98</i><i class="c" style="left:880.5px;top:417.9px;background:#95e57d">12.94</i><i class="c" style="left:915.5px;top:417.9px;background:#97e37c">14.00</i><i class="c" style="left:950.5px;top:417.9px;background:#99e17c">15.16</i><i class="c" style="left:985.5px;top:417.9px;background:#9ae07c">15.79</i><i class="c" style="left:1020.5px;top:417.9px;background:#9ae07c">15.88</i><i class="c" style="left:1055.5px;top:417.9px;background:#9ae07c">15.88</i><i class="c" style="left:1090.5px;top:417.9px;background:#9cde7c">16.88</i><i class="c" style="left:1125.5px;top:417.9px;background:#9cde7c">16.88</i><i class="c" style="left:1160.5px;top:417.9px;background:#9cde7c">16.88</i><i class="c" style="left:1195.5px;top:417.9px;background:#9cde7c">16.88</i><i class="c" style="left:1230.5px;top:417.9px;background:#9cde7c">16.88</i><i class="c" style="left:1265.5px;top:417.9px;background:#9cde7c">16.88</i><i class="c" style="left:1300.5px;top:417.9px;background:#9cde7c">16.88</i><i class="c" style="left:1335.5px;top:417.9px;background:#9cde7c">16.88</i><i class="c" style="left:1370.5px;top:417.9px;background:#9cde7c">16.88</i><div class="a" style="left:356.0px;top:429.3px;width:32.5px;height:10.2px;background:linear-gradient(90deg,#f0f0f0,#fbfbfb);border-bottom:1px solid #bcbcbc"></div><div class="tx nm" style="left:356.0px;top:429.6px;width:32px;text-align:right;color:#111">2000</div><i class="c" style="left:390.5px;top:429.3px;background:#80ff80">0.00</i><i class="c" style="left:425.5px;top:429.3px;background:#80fe7f">0.35</i><i class="c" style="left:460.5px;top:429.3px;background:#81fd7f">0.80</i><i class="c" style="left:495.5px;top:429.3px;background:#81fc7f">1.14</i><i class="c" style="left:530.5px;top:429.3px;background:#82fc7f">1.39</i><i class="c" style="left:565.5px;top:429.3px;background:#82fb7f">1.76</i><i class="c" style="left:600.5px;top:429.3px;background:#83fa7f">2.13</i><i class="c" style="left:635.5px;top:429.3px;background:#84f97f">2.77</i><i class="c" style="left:670.5px;top:429.3px;background:#86f77f">3.74</i><i class="c" style="left:705.5px;top:429.3px;background:#89f47e">5.37</i><i class="c" style="left:740.5px;top:429.3px;background:#8af37e">5.99</i><i class="c" style="left:775.5px;top:429.3px;background:#8cf07e">7.26</i><i class="c" style="left:810.5px;top:429.3px;background:#8eed7e">8.71</i><i class="c" style="left:845.5px;top:429.3px;background:#90eb7d">9.98</i><i class="c" style="left:880.5px;top:429.3px;background:#95e57d">12.94</i><i class="c" style="left:915.5px;top:429.3px;background:#97e37c">14.00</i><i class="c" style="left:950.5px;top:429.3px;background:#99e17c">15.16</i><i class="c" style="left:985.5px;top:429.3px;background:#9ae07c">15.79</i><i class="c" style="left:1020.5px;top:429.3px;background:#9ae07c">15.88</i><i class="c" style="left:1055.5px;top:429.3px;background:#9ae07c">15.88</i><i class="c" style="left:1090.5px;top:429.3px;background:#9cde7c">16.88</i><i class="c" style="left:1125.5px;top:429.3px;background:#9cde7c">16.88</i><i class="c" style="left:1160.5px;top:429.3px;background:#9cde7c">16.88</i><i class="c" style="left:1195.5px;top:429.3px;background:#9cde7c">16.88</i><i class="c" style="left:1230.5px;top:429.3px;background:#9cde7c">16.88</i><i class="c" style="left:1265.5px;top:429.3px;background:#9cde7c">16.88</i><i class="c" style="left:1300.5px;top:429.3px;background:#9cde7c">16.88</i><i class="c" style="left:1335.5px;top:429.3px;background:#9cde7c">16.88</i><i class="c" style="left:1370.5px;top:429.3px;background:#9cde7c">16.88</i><div class="a" style="left:356.0px;top:440.7px;width:32.5px;height:10.2px;background:linear-gradient(90deg,#f0f0f0,#fbfbfb);border-bottom:1px solid #bcbcbc"></div><div class="tx nm" style="left:356.0px;top:441.0px;width:32px;text-align:right;color:#111">2500</div><i class="c" style="left:390.5px;top:440.7px;background:#80ff80">0.00</i><i class="c" style="left:425.5px;top:440.7px;background:#80fe7f">0.15</i><i class="c" style="left:460.5px;top:440.7px;background:#80fe7f">0.46</i><i class="c" style="left:495.5px;top:440.7px;background:#81fd7f">0.78</i><i class="c" style="left:530.5px;top:440.7px;background:#81fc7f">1.04</i><i class="c" style="left:565.5px;top:440.7px;background:#82fc7f">1.53</i><i class="c" style="left:600.5px;top:440.7px;background:#83fb7f">2.03</i><i class="c" style="left:635.5px;top:440.7px;background:#84f97f">2.73</i><i class="c" style="left:670.5px;top:440.7px;background:#86f77f">3.78</i><i class="c" style="left:705.5px;top:440.7px;background:#89f47e">5.55</i><i class="c" style="left:740.5px;top:440.7px;background:#8af27e">6.29</i><i class="c" style="left:775.5px;top:440.7px;background:#8def7e">7.74</i><i class="c" style="left:810.5px;top:440.7px;background:#8fec7d">9.37</i><i class="c" style="left:845.5px;top:440.7px;background:#91ea7d">10.57</i><i class="c" style="left:880.5px;top:440.7px;background:#96e47d">13.47</i><i class="c" style="left:915.5px;top:440.7px;background:#98e27c">14.50</i><i class="c" style="left:950.5px;top:440.7px;background:#9ae07c">15.63</i><i class="c" style="left:985.5px;top:440.7px;background:#9bdf7c">16.27</i><i class="c" style="left:1020.5px;top:440.7px;background:#9bde7c">16.54</i><i class="c" style="left:1055.5px;top:440.7px;background:#9bde7c">16.54</i><i class="c" style="left:1090.5px;top:440.7px;background:#9ddc7c">17.54</i><i class="c" style="left:1125.5px;top:440.7px;background:#9ddc7c">17.54</i><i class="c" style="left:1160.5px;top:440.7px;background:#9ddc7c">17.54</i><i class="c" style="left:1195.5px;top:440.7px;background:#9ddc7c">17.54</i><i class="c" style="left:1230.5px;top:440.7px;background:#9ddc7c">17.54</i><i class="c" style="left:1265.5px;top:440.7px;background:#9ddc7c">17.54</i><i class="c" style="left:1300.5px;top:440.7px;background:#9ddc7c">17.54</i><i class="c" style="left:1335.5px;top:440.7px;background:#9ddc7c">17.54</i><i class="c" style="left:1370.5px;top:440.7px;background:#9ddc7c">17.54</i><div class="a" style="left:356.0px;top:452.2px;width:32.5px;height:10.2px;background:linear-gradient(90deg,#f0f0f0,#fbfbfb);border-bottom:1px solid #bcbcbc"></div><div class="tx nm" style="left:356.0px;top:452.5px;width:32px;text-align:right;color:#111">3000</div><i class="c" style="left:390.5px;top:452.2px;background:#80ff80">0.00</i><i class="c" style="left:425.5px;top:452.2px;background:#80fe7f">0.16</i><i class="c" style="left:460.5px;top:452.2px;background:#80fe7f">0.50</i><i class="c" style="left:495.5px;top:452.2px;background:#81fd7f">0.86</i><i class="c" style="left:530.5px;top:452.2px;background:#81fc7f">1.13</i><i class="c" style="left:565.5px;top:452.2px;background:#82fb7f">1.63</i><i class="c" style="left:600.5px;top:452.2px;background:#83fa7f">2.19</i><i class="c" style="left:635.5px;top:452.2px;background:#85f97f">3.00</i><i class="c" style="left:670.5px;top:452.2px;background:#86f67f">4.13</i><i class="c" style="left:705.5px;top:452.2px;background:#8af37e">6.09</i><i class="c" style="left:740.5px;top:452.2px;background:#8bf17e">6.90</i><i class="c" style="left:775.5px;top:452.2px;background:#8eee7e">8.53</i><i class="c" style="left:810.5px;top:452.2px;background:#91ea7d">10.36</i><i class="c" style="left:845.5px;top:452.2px;background:#93e87d">11.72</i><i class="c" style="left:880.5px;top:452.2px;background:#99e27c">14.81</i><i class="c" style="left:915.5px;top:452.2px;background:#9ae07c">15.81</i><i class="c" style="left:950.5px;top:452.2px;background:#9cde7c">16.90</i><i class="c" style="left:985.5px;top:452.2px;background:#9ddd7c">17.17</i><i class="c" style="left:1020.5px;top:452.2px;background:#9ddd7c">17.26</i><i class="c" style="left:1055.5px;top:452.2px;background:#9ddd7c">17.36</i><i class="c" style="left:1090.5px;top:452.2px;background:#9fdb7b">18.36</i><i class="c" style="left:1125.5px;top:452.2px;background:#9fdb7b">18.36</i><i class="c" style="left:1160.5px;top:452.2px;background:#9fdb7b">18.36</i><i class="c" style="left:1195.5px;top:452.2px;background:#9fdb7b">18.36</i><i class="c" style="left:1230.5px;top:452.2px;background:#9fdb7b">18.36</i><i class="c" style="left:1265.5px;top:452.2px;background:#9fdb7b">18.36</i><i class="c" style="left:1300.5px;top:452.2px;background:#9fdb7b">18.36</i><i class="c" style="left:1335.5px;top:452.2px;background:#9fdb7b">18.36</i><i class="c" style="left:1370.5px;top:452.2px;background:#9fdb7b">18.36</i><div class="a" style="left:356.0px;top:463.6px;width:32.5px;height:10.2px;background:linear-gradient(90deg,#f0f0f0,#fbfbfb);border-bottom:1px solid #bcbcbc"></div><div class="tx nm" style="left:356.0px;top:463.9px;width:32px;text-align:right;color:#111">4000</div><i class="c" style="left:390.5px;top:463.6px;background:#80ff80">0.00</i><i class="c" style="left:425.5px;top:463.6px;background:#80fe7f">0.23</i><i class="c" style="left:460.5px;top:463.6px;background:#80fd7f">0.57</i><i class="c" style="left:495.5px;top:463.6px;background:#81fd7f">0.96</i><i class="c" style="left:530.5px;top:463.6px;background:#82fc7f">1.27</i><i class="c" style="left:565.5px;top:463.6px;background:#83fb7f">1.80</i><i class="c" style="left:600.5px;top:463.6px;background:#84fa7f">2.44</i><i class="c" style="left:635.5px;top:463.6px;background:#85f87f">3.31</i><i class="c" style="left:670.5px;top:463.6px;background:#87f57e">4.62</i><i class="c" style="left:705.5px;top:463.6px;background:#8bf17e">6.79</i><i class="c" style="left:740.5px;top:463.6px;background:#8def7e">7.71</i><i class="c" style="left:775.5px;top:463.6px;background:#90ec7d">9.61</i><i class="c" style="left:810.5px;top:463.6px;background:#94e77d">11.87</i><i class="c" style="left:845.5px;top:463.6px;background:#97e47d">13.68</i><i class="c" style="left:880.5px;top:463.6px;background:#9edb7c">18.21</i><i class="c" style="left:915.5px;top:463.6px;background:#a1d87b">19.85</i><i class="c" style="left:950.5px;top:463.6px;background:#a5d47b">21.97</i><i class="c" style="left:985.5px;top:463.6px;background:#a6d27b">22.86</i><i class="c" style="left:1020.5px;top:463.6px;background:#a6d27b">22.86</i><i class="c" style="left:1055.5px;top:463.6px;background:#a6d27b">22.86</i><i class="c" style="left:1090.5px;top:463.6px;background:#a8d07a">23.86</i><i class="c" style="left:1125.5px;top:463.6px;background:#a8d07a">23.86</i><i class="c" style="left:1160.5px;top:463.6px;background:#a8d07a">23.86</i><i class="c" style="left:1195.5px;top:463.6px;background:#a8d07a">23.86</i><i class="c" style="left:1230.5px;top:463.6px;background:#a8d07a">23.86</i><i class="c" style="left:1265.5px;top:463.6px;background:#a8d07a">23.86</i><i class="c" style="left:1300.5px;top:463.6px;background:#a8d07a">23.86</i><i class="c" style="left:1335.5px;top:463.6px;background:#a8d07a">23.86</i><i class="c" style="left:1370.5px;top:463.6px;background:#a8d07a">23.86</i><div class="a" style="left:356.0px;top:475.0px;width:32.5px;height:10.2px;background:linear-gradient(90deg,#f0f0f0,#fbfbfb);border-bottom:1px solid #bcbcbc"></div><div class="tx nm" style="left:356.0px;top:475.3px;width:32px;text-align:right;color:#111">4500</div><i class="c" style="left:390.5px;top:475.0px;background:#80fe7f">0.05</i><i class="c" style="left:425.5px;top:475.0px;background:#80fe7f">0.29</i><i class="c" style="left:460.5px;top:475.0px;background:#81fd7f">0.66</i><i class="c" style="left:495.5px;top:475.0px;background:#81fc7f">1.06</i><i class="c" style="left:530.5px;top:475.0px;background:#82fc7f">1.39</i><i class="c" style="left:565.5px;top:475.0px;background:#83fb7f">1.99</i><i class="c" style="left:600.5px;top:475.0px;background:#84f97f">2.69</i><i class="c" style="left:635.5px;top:475.0px;background:#86f77f">3.67</i><i class="c" style="left:670.5px;top:475.0px;background:#88f57e">5.11</i><i class="c" style="left:705.5px;top:475.0px;background:#8cf07e">7.52</i><i class="c" style="left:740.5px;top:475.0px;background:#8eee7e">8.56</i><i class="c" style="left:775.5px;top:475.0px;background:#91ea7d">10.52</i><i class="c" style="left:810.5px;top:475.0px;background:#95e67d">12.80</i><i class="c" style="left:845.5px;top:475.0px;background:#98e27c">14.62</i><i class="c" style="left:880.5px;top:475.0px;background:#a0d97b">19.26</i><i class="c" style="left:915.5px;top:475.0px;background:#a3d57b">21.17</i><i class="c" style="left:950.5px;top:475.0px;background:#a8cf7a">24.17</i><i class="c" style="left:985.5px;top:475.0px;background:#accb7a">26.18</i><i class="c" style="left:1020.5px;top:475.0px;background:#aec97a">27.27</i><i class="c" style="left:1055.5px;top:475.0px;background:#aec979">27.54</i><i class="c" style="left:1090.5px;top:475.0px;background:#b0c779">28.54</i><i class="c" style="left:1125.5px;top:475.0px;background:#b0c779">28.54</i><i class="c" style="left:1160.5px;top:475.0px;background:#b0c779">28.54</i><i class="c" style="left:1195.5px;top:475.0px;background:#b0c779">28.54</i><i class="c" style="left:1230.5px;top:475.0px;background:#b0c779">28.54</i><i class="c" style="left:1265.5px;top:475.0px;background:#b0c779">28.54</i><i class="c" style="left:1300.5px;top:475.0px;background:#b0c779">28.54</i><i class="c" style="left:1335.5px;top:475.0px;background:#b0c779">28.54</i><i class="c" style="left:1370.5px;top:475.0px;background:#b0c779">28.54</i><div class="a" style="left:356.0px;top:486.4px;width:32.5px;height:10.2px;background:linear-gradient(90deg,#f0f0f0,#fbfbfb);border-bottom:1px solid #bcbcbc"></div><div class="tx nm" style="left:356.0px;top:486.7px;width:32px;text-align:right;color:#111">5000</div><i class="c" style="left:390.5px;top:486.4px;background:#80fe7f">0.17</i><i class="c" style="left:425.5px;top:486.4px;background:#80fe7f">0.47</i><i class="c" style="left:460.5px;top:486.4px;background:#81fd7f">0.90</i><i class="c" style="left:495.5px;top:486.4px;background:#82fc7f">1.35</i><i class="c" style="left:530.5px;top:486.4px;background:#82fb7f">1.72</i><i class="c" style="left:565.5px;top:486.4px;background:#84fa7f">2.44</i><i class="c" style="left:600.5px;top:486.4px;background:#85f87f">3.25</i><i class="c" style="left:635.5px;top:486.4px;background:#87f67f">4.38</i><i class="c" style="left:670.5px;top:486.4px;background:#8af37e">6.00</i><i class="c" style="left:705.5px;top:486.4px;background:#8eed7e">8.76</i><i class="c" style="left:740.5px;top:486.4px;background:#90eb7d">9.95</i><i class="c" style="left:775.5px;top:486.4px;background:#94e77d">12.19</i><i class="c" style="left:810.5px;top:486.4px;background:#98e27c">14.64</i><i class="c" style="left:845.5px;top:486.4px;background:#9cde7c">16.61</i><i class="c" style="left:880.5px;top:486.4px;background:#a4d57b">21.43</i><i class="c" style="left:915.5px;top:486.4px;background:#a7d07a">23.58</i><i class="c" style="left:950.5px;top:486.4px;background:#adca7a">26.83</i><i class="c" style="left:985.5px;top:486.4px;background:#b2c579">29.58</i><i class="c" style="left:1020.5px;top:486.4px;background:#b5c079">31.83</i><i class="c" style="left:1055.5px;top:486.4px;background:#b8bd78">33.60</i><i class="c" style="left:1090.5px;top:486.4px;background:#b9bc78">33.95</i><i class="c" style="left:1125.5px;top:486.4px;background:#b9bc78">34.02</i><i class="c" style="left:1160.5px;top:486.4px;background:#b9bc78">34.02</i><i class="c" style="left:1195.5px;top:486.4px;background:#b9bc78">34.02</i><i class="c" style="left:1230.5px;top:486.4px;background:#b9bc78">34.02</i><i class="c" style="left:1265.5px;top:486.4px;background:#b9bc78">34.02</i><i class="c" style="left:1300.5px;top:486.4px;background:#b9bc78">34.02</i><i class="c" style="left:1335.5px;top:486.4px;background:#b9bc78">34.02</i><i class="c" style="left:1370.5px;top:486.4px;background:#b9bc78">34.02</i><div class="a" style="left:356.0px;top:497.8px;width:32.5px;height:10.2px;background:linear-gradient(90deg,#f0f0f0,#fbfbfb);border-bottom:1px solid #bcbcbc"></div><div class="tx nm" style="left:356.0px;top:498.1px;width:32px;text-align:right;color:#111">5500</div><i class="c" style="left:390.5px;top:497.8px;background:#80fe7f">0.25</i><i class="c" style="left:425.5px;top:497.8px;background:#80fd7f">0.58</i><i class="c" style="left:460.5px;top:497.8px;background:#81fd7f">1.01</i><i class="c" style="left:495.5px;top:497.8px;background:#82fc7f">1.50</i><i class="c" style="left:530.5px;top:497.8px;background:#83fb7f">1.91</i><i class="c" style="left:565.5px;top:497.8px;background:#84f97f">2.67</i><i class="c" style="left:600.5px;top:497.8px;background:#85f87f">3.53</i><i class="c" style="left:635.5px;top:497.8px;background:#87f57e">4.73</i><i class="c" style="left:670.5px;top:497.8px;background:#8af27e">6.47</i><i class="c" style="left:705.5px;top:497.8px;background:#8fec7d">9.42</i><i class="c" style="left:740.5px;top:497.8px;background:#91ea7d">10.58</i><i class="c" style="left:775.5px;top:497.8px;background:#95e57d">12.85</i><i class="c" style="left:810.5px;top:497.8px;background:#9ae07c">15.50</i><i class="c" style="left:845.5px;top:497.8px;background:#9ddd7c">17.39</i><i class="c" style="left:880.5px;top:497.8px;background:#a5d37b">22.18</i><i class="c" style="left:915.5px;top:497.8px;background:#a9cf7a">24.23</i><i class="c" style="left:950.5px;top:497.8px;background:#aec97a">27.48</i><i class="c" style="left:985.5px;top:497.8px;background:#b3c379">30.32</i><i class="c" style="left:1020.5px;top:497.8px;background:#b7be78">32.95</i><i class="c" style="left:1055.5px;top:497.8px;background:#bbba78">35.08</i><i class="c" style="left:1090.5px;top:497.8px;background:#beb777">36.89</i><i class="c" style="left:1125.5px;top:497.8px;background:#c1b377">38.66</i><i class="c" style="left:1160.5px;top:497.8px;background:#c2b177">39.51</i><i class="c" style="left:1195.5px;top:497.8px;background:#c2b177">39.51</i><i class="c" style="left:1230.5px;top:497.8px;background:#c2b177">39.51</i><i class="c" style="left:1265.5px;top:497.8px;background:#c2b177">39.51</i><i class="c" style="left:1300.5px;top:497.8px;background:#c2b177">39.51</i><i class="c" style="left:1335.5px;top:497.8px;background:#c2b177">39.51</i><i class="c" style="left:1370.5px;top:497.8px;background:#c2b177">39.51</i><div class="a" style="left:356.0px;top:509.2px;width:32.5px;height:10.2px;background:linear-gradient(90deg,#f0f0f0,#fbfbfb);border-bottom:1px solid #bcbcbc"></div><div class="tx nm" style="left:356.0px;top:509.5px;width:32px;text-align:right;color:#111">6000</div><i class="c" style="left:390.5px;top:509.2px;background:#80fe7f">0.34</i><i class="c" style="left:425.5px;top:509.2px;background:#81fd7f">0.75</i><i class="c" style="left:460.5px;top:509.2px;background:#82fc7f">1.23</i><i class="c" style="left:495.5px;top:509.2px;background:#82fb7f">1.72</i><i class="c" style="left:530.5px;top:509.2px;background:#83fa7f">2.12</i><i class="c" style="left:565.5px;top:509.2px;background:#84f97f">2.95</i><i class="c" style="left:600.5px;top:509.2px;background:#86f77f">3.88</i><i class="c" style="left:635.5px;top:509.2px;background:#88f47e">5.20</i><i class="c" style="left:670.5px;top:509.2px;background:#8bf17e">7.06</i><i class="c" style="left:705.5px;top:509.2px;background:#91eb7d">10.11</i><i class="c" style="left:740.5px;top:509.2px;background:#93e87d">11.33</i><i class="c" style="left:775.5px;top:509.2px;background:#97e47d">13.63</i><i class="c" style="left:810.5px;top:509.2px;background:#9bdf7c">16.13</i><i class="c" style="left:845.5px;top:509.2px;background:#9edb7c">18.04</i><i class="c" style="left:880.5px;top:509.2px;background:#a6d27b">22.85</i><i class="c" style="left:915.5px;top:509.2px;background:#a9ce7a">24.80</i><i class="c" style="left:950.5px;top:509.2px;background:#afc879">27.93</i><i class="c" style="left:985.5px;top:509.2px;background:#b4c279">30.98</i><i class="c" style="left:1020.5px;top:509.2px;background:#b9bc78">33.92</i><i class="c" style="left:1055.5px;top:509.2px;background:#bdb878">36.37</i><i class="c" style="left:1090.5px;top:509.2px;background:#c2b277">39.07</i><i class="c" style="left:1125.5px;top:509.2px;background:#c7ac76">42.03</i><i class="c" style="left:1160.5px;top:509.2px;background:#caa976">43.93</i><i class="c" style="left:1195.5px;top:509.2px;background:#cda576">45.64</i><i class="c" style="left:1230.5px;top:509.2px;background:#cea575">46.11</i><i class="c" style="left:1265.5px;top:509.2px;background:#cea575">46.11</i><i class="c" style="left:1300.5px;top:509.2px;background:#cea575">46.11</i><i class="c" style="left:1335.5px;top:509.2px;background:#cea575">46.11</i><i class="c" style="left:1370.5px;top:509.2px;background:#cea575">46.11</i><div class="a" style="left:356.0px;top:520.6px;width:32.5px;height:10.2px;background:linear-gradient(90deg,#f0f0f0,#fbfbfb);border-bottom:1px solid #bcbcbc"></div><div class="tx nm" style="left:356.0px;top:520.9px;width:32px;text-align:right;color:#111">7000</div><i class="c" style="left:390.5px;top:520.6px;background:#81fd7f">0.92</i><i class="c" style="left:425.5px;top:520.6px;background:#82fc7f">1.31</i><i class="c" style="left:460.5px;top:520.6px;background:#83fb7f">1.78</i><i class="c" style="left:495.5px;top:520.6px;background:#83fa7f">2.28</i><i class="c" style="left:530.5px;top:520.6px;background:#84f97f">2.71</i><i class="c" style="left:565.5px;top:520.6px;background:#86f87f">3.56</i><i class="c" style="left:600.5px;top:520.6px;background:#87f67f">4.54</i><i class="c" style="left:635.5px;top:520.6px;background:#8af37e">5.96</i><i class="c" style="left:670.5px;top:520.6px;background:#8def7e">7.99</i><i class="c" style="left:705.5px;top:520.6px;background:#93e87d">11.30</i><i class="c" style="left:740.5px;top:520.6px;background:#95e67d">12.56</i><i class="c" style="left:775.5px;top:520.6px;background:#99e17c">14.89</i><i class="c" style="left:810.5px;top:520.6px;background:#9ddd7c">17.41</i><i class="c" style="left:845.5px;top:520.6px;background:#a0d97b">19.32</i><i class="c" style="left:880.5px;top:520.6px;background:#a8d07a">23.67</i><i class="c" style="left:915.5px;top:520.6px;background:#abcc7a">25.65</i><i class="c" style="left:950.5px;top:520.6px;background:#b0c679">28.72</i><i class="c" style="left:985.5px;top:520.6px;background:#b6c079">31.96</i><i class="c" style="left:1020.5px;top:520.6px;background:#bbba78">35.08</i><i class="c" style="left:1055.5px;top:520.6px;background:#c0b577">37.89</i><i class="c" style="left:1090.5px;top:520.6px;background:#c5ae77">41.06</i><i class="c" style="left:1125.5px;top:520.6px;background:#cca776">45.08</i><i class="c" style="left:1160.5px;top:520.6px;background:#d2a075">48.58</i><i class="c" style="left:1195.5px;top:520.6px;background:#d79974">51.81</i><i class="c" style="left:1230.5px;top:520.6px;background:#da9674">53.57</i><i class="c" style="left:1265.5px;top:520.6px;background:#dd9373">55.02</i><i class="c" style="left:1300.5px;top:520.6px;background:#de9173">56.11</i><i class="c" style="left:1335.5px;top:520.6px;background:#e08f73">57.19</i><i class="c" style="left:1370.5px;top:520.6px;background:#e18e73">57.47</i><div class="a" style="left:356.0px;top:532.0px;width:32.5px;height:10.2px;background:linear-gradient(90deg,#f0f0f0,#fbfbfb);border-bottom:1px solid #bcbcbc"></div><div class="tx nm" style="left:356.0px;top:532.3px;width:32px;text-align:right;color:#111">8000</div><i class="c" style="left:390.5px;top:532.0px;background:#82fb7f">1.56</i><i class="c" style="left:425.5px;top:532.0px;background:#83fb7f">1.98</i><i class="c" style="left:460.5px;top:532.0px;background:#84fa7f">2.51</i><i class="c" style="left:495.5px;top:532.0px;background:#85f97f">3.06</i><i class="c" style="left:530.5px;top:532.0px;background:#86f87f">3.55</i><i class="c" style="left:565.5px;top:532.0px;background:#87f67f">4.50</i><i class="c" style="left:600.5px;top:532.0px;background:#89f47e">5.57</i><i class="c" style="left:635.5px;top:532.0px;background:#8cf17e">7.12</i><i class="c" style="left:670.5px;top:532.0px;background:#8fec7d">9.27</i><i class="c" style="left:705.5px;top:532.0px;background:#95e67d">12.63</i><i class="c" style="left:740.5px;top:532.0px;background:#97e37c">13.89</i><i class="c" style="left:775.5px;top:532.0px;background:#9bdf7c">16.19</i><i class="c" style="left:810.5px;top:532.0px;background:#9fda7b">18.68</i><i class="c" style="left:845.5px;top:532.0px;background:#a2d77b">20.45</i><i class="c" style="left:880.5px;top:532.0px;background:#a9ce7a">24.79</i><i class="c" style="left:915.5px;top:532.0px;background:#adcb7a">26.65</i><i class="c" style="left:950.5px;top:532.0px;background:#b1c579">29.53</i><i class="c" style="left:985.5px;top:532.0px;background:#b7bf78">32.59</i><i class="c" style="left:1020.5px;top:532.0px;background:#bcb978">35.81</i><i class="c" style="left:1055.5px;top:532.0px;background:#c1b377">38.65</i><i class="c" style="left:1090.5px;top:532.0px;background:#c7ac76">42.04</i><i class="c" style="left:1125.5px;top:532.0px;background:#cea475">46.30</i><i class="c" style="left:1160.5px;top:532.0px;background:#d59c75">50.26</i><i class="c" style="left:1195.5px;top:532.0px;background:#dc9474">54.59</i><i class="c" style="left:1230.5px;top:532.0px;background:#e18e73">57.50</i><i class="c" style="left:1265.5px;top:532.0px;background:#e68872">60.83</i><i class="c" style="left:1300.5px;top:532.0px;background:#eb8272">63.59</i><i class="c" style="left:1335.5px;top:532.0px;background:#ef7e71">65.65</i><i class="c" style="left:1370.5px;top:532.0px;background:#ef7e71">66.06</i><div class="a" style="left:356.0px;top:543.4px;width:32.5px;height:10.2px;background:linear-gradient(90deg,#f0f0f0,#fbfbfb);border-bottom:1px solid #bcbcbc"></div><div class="tx nm" style="left:356.0px;top:543.7px;width:32px;text-align:right;color:#111">9000</div><i class="c" style="left:390.5px;top:543.4px;background:#83fa7f">2.07</i><i class="c" style="left:425.5px;top:543.4px;background:#84fa7f">2.54</i><i class="c" style="left:460.5px;top:543.4px;background:#85f87f">3.16</i><i class="c" style="left:495.5px;top:543.4px;background:#86f77f">3.76</i><i class="c" style="left:530.5px;top:543.4px;background:#87f67f">4.31</i><i class="c" style="left:565.5px;top:543.4px;background:#89f47e">5.33</i><i class="c" style="left:600.5px;top:543.4px;background:#8bf27e">6.51</i><i class="c" style="left:635.5px;top:543.4px;background:#8dee7e">8.26</i><i class="c" style="left:670.5px;top:543.4px;background:#91ea7d">10.45</i><i class="c" style="left:705.5px;top:543.4px;background:#97e37c">13.87</i><i class="c" style="left:740.5px;top:543.4px;background:#99e17c">15.11</i><i class="c" style="left:775.5px;top:543.4px;background:#9ddc7c">17.47</i><i class="c" style="left:810.5px;top:543.4px;background:#a1d77b">19.99</i><i class="c" style="left:845.5px;top:543.4px;background:#a4d47b">21.79</i><i class="c" style="left:880.5px;top:543.4px;background:#abcc7a">25.99</i><i class="c" style="left:915.5px;top:543.4px;background:#aec879">27.70</i><i class="c" style="left:950.5px;top:543.4px;background:#b3c379">30.55</i><i class="c" style="left:985.5px;top:543.4px;background:#b8bd78">33.36</i><i class="c" style="left:1020.5px;top:543.4px;background:#bdb778">36.50</i><i class="c" style="left:1055.5px;top:543.4px;background:#c2b177">39.52</i><i class="c" style="left:1090.5px;top:543.4px;background:#c8ab76">42.84</i><i class="c" style="left:1125.5px;top:543.4px;background:#cfa275">47.17</i><i class="c" style="left:1160.5px;top:543.4px;background:#d69a74">51.37</i><i class="c" style="left:1195.5px;top:543.4px;background:#de9173">56.06</i><i class="c" style="left:1230.5px;top:543.4px;background:#e48b73">59.37</i><i class="c" style="left:1265.5px;top:543.4px;background:#eb8272">63.56</i><i class="c" style="left:1300.5px;top:543.4px;background:#f27b71">67.54</i><i class="c" style="left:1335.5px;top:543.4px;background:#f77570">70.67</i><i class="c" style="left:1370.5px;top:543.4px;background:#f97270">71.83</i><div class="a" style="left:356.0px;top:554.8px;width:32.5px;height:10.2px;background:linear-gradient(90deg,#f0f0f0,#fbfbfb);border-bottom:1px solid #bcbcbc"></div><div class="tx nm" style="left:356.0px;top:555.1px;width:32px;text-align:right;color:#111">10000</div><i class="c" style="left:390.5px;top:554.8px;background:#84f97f">2.57</i><i class="c" style="left:425.5px;top:554.8px;background:#85f97f">3.06</i><i class="c" style="left:460.5px;top:554.8px;background:#86f77f">3.69</i><i class="c" style="left:495.5px;top:554.8px;background:#87f67f">4.29</i><i class="c" style="left:530.5px;top:554.8px;background:#88f57e">4.84</i><i class="c" style="left:565.5px;top:554.8px;background:#89f37e">5.87</i><i class="c" style="left:600.5px;top:554.8px;background:#8bf17e">7.06</i><i class="c" style="left:635.5px;top:554.8px;background:#8eed7e">8.81</i><i class="c" style="left:670.5px;top:554.8px;background:#92e97d">11.02</i><i class="c" style="left:705.5px;top:554.8px;background:#98e27c">14.46</i><i class="c" style="left:740.5px;top:554.8px;background:#9ae07c">15.69</i><i class="c" style="left:775.5px;top:554.8px;background:#9edb7c">18.08</i><i class="c" style="left:810.5px;top:554.8px;background:#a2d67b">20.62</i><i class="c" style="left:845.5px;top:554.8px;background:#a5d37b">22.43</i><i class="c" style="left:880.5px;top:554.8px;background:#adca7a">26.66</i><i class="c" style="left:915.5px;top:554.8px;background:#b0c779">28.38</i><i class="c" style="left:950.5px;top:554.8px;background:#b4c279">31.25</i><i class="c" style="left:985.5px;top:554.8px;background:#b9bc78">34.08</i><i class="c" style="left:1020.5px;top:554.8px;background:#bfb677">37.24</i><i class="c" style="left:1055.5px;top:554.8px;background:#c3b177">39.91</i><i class="c" style="left:1090.5px;top:554.8px;background:#c9aa76">43.43</i><i class="c" style="left:1125.5px;top:554.8px;background:#d1a175">47.96</i><i class="c" style="left:1160.5px;top:554.8px;background:#d89874">52.31</i><i class="c" style="left:1195.5px;top:554.8px;background:#e08f73">57.28</i><i class="c" style="left:1230.5px;top:554.8px;background:#e78872">60.90</i><i class="c" style="left:1265.5px;top:554.8px;background:#ee7f71">65.19</i><i class="c" style="left:1300.5px;top:554.8px;background:#f57870">69.17</i><i class="c" style="left:1335.5px;top:554.8px;background:#fa7170">72.44</i><i class="c" style="left:1370.5px;top:554.8px;background:#fc7070">73.29</i><div class="a" style="left:356.0px;top:566.2px;width:32.5px;height:10.2px;background:linear-gradient(90deg,#f0f0f0,#fbfbfb);border-bottom:1px solid #bcbcbc"></div><div class="tx nm" style="left:356.0px;top:566.5px;width:32px;text-align:right;color:#111">11000</div><i class="c" style="left:390.5px;top:566.2px;background:#84f97f">2.57</i><i class="c" style="left:425.5px;top:566.2px;background:#85f97f">3.06</i><i class="c" style="left:460.5px;top:566.2px;background:#86f77f">3.69</i><i class="c" style="left:495.5px;top:566.2px;background:#87f67f">4.29</i><i class="c" style="left:530.5px;top:566.2px;background:#88f57e">4.84</i><i class="c" style="left:565.5px;top:566.2px;background:#89f37e">5.87</i><i class="c" style="left:600.5px;top:566.2px;background:#8bf17e">7.06</i><i class="c" style="left:635.5px;top:566.2px;background:#8eed7e">8.81</i><i class="c" style="left:670.5px;top:566.2px;background:#92e97d">11.02</i><i class="c" style="left:705.5px;top:566.2px;background:#98e27c">14.46</i><i class="c" style="left:740.5px;top:566.2px;background:#9ae07c">15.69</i><i class="c" style="left:775.5px;top:566.2px;background:#9edb7c">18.08</i><i class="c" style="left:810.5px;top:566.2px;background:#a2d67b">20.62</i><i class="c" style="left:845.5px;top:566.2px;background:#a5d37b">22.43</i><i class="c" style="left:880.5px;top:566.2px;background:#adca7a">26.66</i><i class="c" style="left:915.5px;top:566.2px;background:#b0c779">28.38</i><i class="c" style="left:950.5px;top:566.2px;background:#b4c279">31.25</i><i class="c" style="left:985.5px;top:566.2px;background:#b9bc78">34.08</i><i class="c" style="left:1020.5px;top:566.2px;background:#bfb677">37.24</i><i class="c" style="left:1055.5px;top:566.2px;background:#c3b177">39.91</i><i class="c" style="left:1090.5px;top:566.2px;background:#c9aa76">43.43</i><i class="c" style="left:1125.5px;top:566.2px;background:#d1a175">47.96</i><i class="c" style="left:1160.5px;top:566.2px;background:#d89874">52.31</i><i class="c" style="left:1195.5px;top:566.2px;background:#e08f73">57.28</i><i class="c" style="left:1230.5px;top:566.2px;background:#e78872">60.90</i><i class="c" style="left:1265.5px;top:566.2px;background:#ee7f71">65.19</i><i class="c" style="left:1300.5px;top:566.2px;background:#f57870">69.17</i><i class="c" style="left:1335.5px;top:566.2px;background:#fa7170">72.44</i><i class="c" style="left:1370.5px;top:566.2px;background:#fc7070">73.29</i><div class="a" style="left:356.0px;top:577.7px;width:32.5px;height:10.2px;background:linear-gradient(90deg,#f0f0f0,#fbfbfb);border-bottom:1px solid #bcbcbc"></div><div class="tx nm" style="left:356.0px;top:578.0px;width:32px;text-align:right;color:#111">12000</div><i class="c" style="left:390.5px;top:577.7px;background:#84f97f">2.57</i><i class="c" style="left:425.5px;top:577.7px;background:#85f97f">3.06</i><i class="c" style="left:460.5px;top:577.7px;background:#86f77f">3.69</i><i class="c" style="left:495.5px;top:577.7px;background:#87f67f">4.29</i><i class="c" style="left:530.5px;top:577.7px;background:#88f57e">4.84</i><i class="c" style="left:565.5px;top:577.7px;background:#89f37e">5.87</i><i class="c" style="left:600.5px;top:577.7px;background:#8bf17e">7.06</i><i class="c" style="left:635.5px;top:577.7px;background:#8eed7e">8.81</i><i class="c" style="left:670.5px;top:577.7px;background:#92e97d">11.02</i><i class="c" style="left:705.5px;top:577.7px;background:#98e27c">14.46</i><i class="c" style="left:740.5px;top:577.7px;background:#9ae07c">15.69</i><i class="c" style="left:775.5px;top:577.7px;background:#9edb7c">18.08</i><i class="c" style="left:810.5px;top:577.7px;background:#a2d67b">20.62</i><i class="c" style="left:845.5px;top:577.7px;background:#a5d37b">22.43</i><i class="c" style="left:880.5px;top:577.7px;background:#adca7a">26.66</i><i class="c" style="left:915.5px;top:577.7px;background:#b0c779">28.38</i><i class="c" style="left:950.5px;top:577.7px;background:#b4c279">31.25</i><i class="c" style="left:985.5px;top:577.7px;background:#b9bc78">34.08</i><i class="c" style="left:1020.5px;top:577.7px;background:#bfb677">37.24</i><i class="c" style="left:1055.5px;top:577.7px;background:#c3b177">39.91</i><i class="c" style="left:1090.5px;top:577.7px;background:#c9aa76">43.43</i><i class="c" style="left:1125.5px;top:577.7px;background:#d1a175">47.96</i><i class="c" style="left:1160.5px;top:577.7px;background:#d89874">52.31</i><i class="c" style="left:1195.5px;top:577.7px;background:#e08f73">57.28</i><i class="c" style="left:1230.5px;top:577.7px;background:#e78872">60.90</i><i class="c" style="left:1265.5px;top:577.7px;background:#ee7f71">65.19</i><i class="c" style="left:1300.5px;top:577.7px;background:#f57870">69.17</i><i class="c" style="left:1335.5px;top:577.7px;background:#fa7170">72.44</i><i class="c" style="left:1370.5px;top:577.7px;background:#fc7070">73.29</i><div class="a" style="left:356.0px;top:589.1px;width:32.5px;height:10.2px;background:linear-gradient(90deg,#f0f0f0,#fbfbfb);border-bottom:1px solid #bcbcbc"></div><div class="tx nm" style="left:356.0px;top:589.4px;width:32px;text-align:right;color:#111">13000</div><i class="c" style="left:390.5px;top:589.1px;background:#84f97f">2.57</i><i class="c" style="left:425.5px;top:589.1px;background:#85f97f">3.06</i><i class="c" style="left:460.5px;top:589.1px;background:#86f77f">3.69</i><i class="c" style="left:495.5px;top:589.1px;background:#87f67f">4.29</i><i class="c" style="left:530.5px;top:589.1px;background:#88f57e">4.84</i><i class="c" style="left:565.5px;top:589.1px;background:#89f37e">5.87</i><i class="c" style="left:600.5px;top:589.1px;background:#8bf17e">7.06</i><i class="c" style="left:635.5px;top:589.1px;background:#8eed7e">8.81</i><i class="c" style="left:670.5px;top:589.1px;background:#92e97d">11.02</i><i class="c" style="left:705.5px;top:589.1px;background:#98e27c">14.46</i><i class="c" style="left:740.5px;top:589.1px;background:#9ae07c">15.69</i><i class="c" style="left:775.5px;top:589.1px;background:#9edb7c">18.08</i><i class="c" style="left:810.5px;top:589.1px;background:#a2d67b">20.62</i><i class="c" style="left:845.5px;top:589.1px;background:#a5d37b">22.43</i><i class="c" style="left:880.5px;top:589.1px;background:#adca7a">26.66</i><i class="c" style="left:915.5px;top:589.1px;background:#b0c779">28.38</i><i class="c" style="left:950.5px;top:589.1px;background:#b4c279">31.25</i><i class="c" style="left:985.5px;top:589.1px;background:#b9bc78">34.08</i><i class="c" style="left:1020.5px;top:589.1px;background:#bfb677">37.24</i><i class="c" style="left:1055.5px;top:589.1px;background:#c3b177">39.91</i><i class="c" style="left:1090.5px;top:589.1px;background:#c9aa76">43.43</i><i class="c" style="left:1125.5px;top:589.1px;background:#d1a175">47.96</i><i class="c" style="left:1160.5px;top:589.1px;background:#d89874">52.31</i><i class="c" style="left:1195.5px;top:589.1px;background:#e08f73">57.28</i><i class="c" style="left:1230.5px;top:589.1px;background:#e78872">60.90</i><i class="c" style="left:1265.5px;top:589.1px;background:#ee7f71">65.19</i><i class="c" style="left:1300.5px;top:589.1px;background:#f57870">69.17</i><i class="c" style="left:1335.5px;top:589.1px;background:#fa7170">72.44</i><i class="c" style="left:1370.5px;top:589.1px;background:#fc7070">73.29</i><svg class="a" style="left:1420px;top:635px" width="8" height="8"><g fill="#a0a0a0"><rect x="6" y="1" width="1" height="1"/><rect x="4" y="3" width="1" height="1"/><rect x="6" y="3" width="1" height="1"/><rect x="2" y="5" width="1" height="1"/><rect x="4" y="5" width="1" height="1"/><rect x="6" y="5" width="1" height="1"/></g></svg>
</div><div class="a" style="left:420.8px;top:219.0px;width:658.2px;height:447.4px;border-radius:7px 7px 4px 4px;box-shadow:0 6px 22px rgba(0,0,0,0.45);background:#fff;overflow:hidden">
<div class="a" style="left:0;top:0;width:100%;height:23px;background:#e9f3f8"></div>
<svg class="a" style="left:5px;top:7px" width="14" height="11"><rect x="0" y="2.5" width="13" height="6" fill="#0a0a0a"/><g stroke="#0a0a0a" stroke-width="1"><line x1="1.0" y1="0" x2="1.0" y2="11"/><line x1="3.1" y1="0" x2="3.1" y2="11"/><line x1="5.2" y1="0" x2="5.2" y2="11"/><line x1="7.3" y1="0" x2="7.3" y2="11"/><line x1="9.4" y1="0" x2="9.4" y2="11"/><line x1="11.5" y1="0" x2="11.5" y2="11"/></g></svg>
<div class="tx" style="left:22px;top:5.6px;font-size:9.8px;letter-spacing:-0.6px;color:#1a1a1a;-webkit-text-stroke:0">ETV Gear-3</div>
<svg class="a" style="left:563.2px;top:5px" width="90" height="14"><path d="M2.0 7.5 h8" stroke="#333" stroke-width="1"/><rect x="36.0" y="3" width="8" height="8" rx="1" fill="none" stroke="#333" stroke-width="1"/><path d="M71.0 3 l8 8 M79.0 3 l-8 8" stroke="#333" stroke-width="1"/></svg>
<div class="tx" style="left:5px;top:25px;font-size:9.4px;letter-spacing:-0.35px;color:#1a1a1a">Graph</div>
<div class="tx" style="left:40px;top:25px;font-size:9.4px;letter-spacing:-0.35px;color:#1a1a1a">View</div>
<div class="a" style="left:0;top:36px;width:100%;height:21px;background:#efefef"></div>
<div class="a" style="left:3px;top:39px;width:1px;height:15px;background:#c8c8c8"></div>
<svg class="a" style="left:9px;top:41px" width="11" height="12"><path d="M1 1 L9.5 11 M9.5 1 L1 11" stroke="#e01818" stroke-width="1.8"/></svg>
<div class="a" style="left:30px;top:39px;width:1px;height:15px;background:#c8c8c8"></div>
<div class="a" style="left:34.6px;top:39.2px;width:17px;height:16px;background:#cce4f7;border-radius:2px"></div>
<div class="a" style="left:69.8px;top:39.2px;width:17px;height:16px;background:#cce4f7;border-radius:2px"></div>
<div class="a" style="left:105.0px;top:39.2px;width:17px;height:16px;background:#cce4f7;border-radius:2px"></div>
<svg class="a" style="left:35.5px;top:39.5px" width="16" height="16"><path d="M8 1 L15 8 L8 15 L1 8 Z" fill="#000"/><circle cx="8" cy="8" r="3.6" fill="#fff"/><path d="M8 4.2 V11.8 M4.2 8 H11.8" stroke="#e02020" stroke-width="1.4"/></svg>
<svg class="a" style="left:53px;top:40px" width="16" height="15"><path d="M1 13 L4 6 L7 11 L10 4 L14 8" stroke="#1010c0" stroke-width="1.3" fill="none"/><path d="M2 10 L6 9 M9 3 L13 2 M12 1 L14 3" stroke="#e02020" stroke-width="1.2" fill="none"/></svg>
<svg class="a" style="left:70.5px;top:40px" width="16" height="15"><path d="M1 1 V14 H15" stroke="#333" stroke-width="0.9" fill="none"/><path d="M2 11 L5 6 L8 9 L11 4 L14 7" stroke="#1010c0" stroke-width="1.3" fill="none"/><path d="M2 13 L5 10 L8 12 L11 8 L14 10" stroke="#e02020" stroke-width="1.2" fill="none"/></svg>
<svg class="a" style="left:89.5px;top:41px" width="14" height="13"><path d="M1 12 L4 5 H13 L10 12 Z M2.5 8.5 H11.5 M7 5 L5.5 12 M5 5 L8 1 H13 L10 5" stroke="#111" stroke-width="1" fill="#fff"/></svg>
<svg class="a" style="left:106.5px;top:40.5px" width="15" height="14"><rect x="1" y="1.5" width="10" height="2.5" fill="#e07070"/><rect x="1" y="4.5" width="10" height="2.5" fill="#e0e060"/><rect x="1" y="7.5" width="10" height="2.5" fill="#60d060"/><rect x="1" y="10.5" width="10" height="2.5" fill="#6080e0"/><path d="M12 1 V13 M11 1 H13 M11 13 H13" stroke="#111" stroke-width="1"/></svg>
<div class="a" style="left:0;top:431.0px;width:100%;height:20px;background:#efefef;border-top:1px solid #e0e0e0"></div>
<div class="a" style="left:98.2px;top:432.0px;width:1px;height:16px;background:#d8d8d8"></div>
<div class="a" style="left:197.2px;top:432.0px;width:1px;height:16px;background:#d8d8d8"></div>
<div class="a" style="left:296.7px;top:432.0px;width:1px;height:16px;background:#d8d8d8"></div>
</div>
<svg class="a" style="left:0;top:0" width="1445" height="705" viewBox="0 0 1445 705"><g stroke="#a0a0a0" stroke-width="0.6" stroke-dasharray="1.6 1.4"><line x1="820.0" y1="625.5" x2="886.0" y2="519.0"/><line x1="816.6" y1="624.9" x2="882.6" y2="518.4"/><line x1="811.4" y1="624.1" x2="877.4" y2="517.6"/><line x1="802.8" y1="622.7" x2="868.8" y2="516.2"/><line x1="794.2" y1="621.2" x2="860.2" y2="514.8"/><line x1="785.6" y1="619.8" x2="851.6" y2="513.3"/><line x1="768.4" y1="617.0" x2="834.4" y2="510.5"/><line x1="759.8" y1="615.6" x2="825.8" y2="509.1"/><line x1="751.2" y1="614.2" x2="817.2" y2="507.7"/><line x1="742.6" y1="612.8" x2="808.6" y2="506.2"/><line x1="734.0" y1="611.3" x2="800.0" y2="504.8"/><line x1="716.8" y1="608.5" x2="782.8" y2="502.0"/><line x1="699.5" y1="605.7" x2="765.5" y2="499.2"/><line x1="682.3" y1="602.8" x2="748.3" y2="496.3"/><line x1="665.1" y1="600.0" x2="731.1" y2="493.5"/><line x1="647.9" y1="597.2" x2="713.9" y2="490.7"/><line x1="630.7" y1="594.3" x2="696.7" y2="487.8"/><line x1="613.5" y1="591.5" x2="679.5" y2="485.0"/><line x1="820.0" y1="625.5" x2="613.5" y2="591.5"/><line x1="820.7" y1="624.3" x2="614.2" y2="590.3"/><line x1="821.6" y1="622.8" x2="615.1" y2="588.8"/><line x1="822.5" y1="621.5" x2="616.0" y2="587.5"/><line x1="823.4" y1="620.1" x2="616.9" y2="586.1"/><line x1="824.9" y1="617.6" x2="618.4" y2="583.6"/><line x1="826.6" y1="614.9" x2="620.1" y2="580.9"/><line x1="828.2" y1="612.2" x2="621.8" y2="578.2"/><line x1="830.4" y1="608.8" x2="623.9" y2="574.8"/><line x1="833.3" y1="604.0" x2="626.8" y2="570.0"/><line x1="834.4" y1="602.3" x2="627.9" y2="568.3"/><line x1="836.4" y1="599.0" x2="629.9" y2="565.0"/><line x1="838.5" y1="595.6" x2="632.0" y2="561.6"/><line x1="840.0" y1="593.2" x2="633.5" y2="559.2"/><line x1="843.4" y1="587.8" x2="636.9" y2="553.8"/><line x1="844.7" y1="585.7" x2="638.2" y2="551.7"/><line x1="846.8" y1="582.3" x2="640.3" y2="548.3"/><line x1="848.8" y1="579.1" x2="642.3" y2="545.1"/><line x1="851.0" y1="575.6" x2="644.5" y2="541.6"/><line x1="852.9" y1="572.4" x2="646.4" y2="538.4"/><line x1="857.0" y1="565.8" x2="650.5" y2="531.8"/><line x1="861.2" y1="559.0" x2="654.7" y2="525.0"/><line x1="865.3" y1="552.4" x2="658.8" y2="518.4"/><line x1="870.0" y1="544.9" x2="663.5" y2="510.9"/><line x1="873.5" y1="539.2" x2="667.0" y2="505.2"/><line x1="877.7" y1="532.4" x2="671.2" y2="498.4"/><line x1="881.7" y1="525.9" x2="675.2" y2="491.9"/><line x1="885.0" y1="520.6" x2="678.5" y2="486.6"/><line x1="886.0" y1="519.0" x2="679.5" y2="485.0"/></g><g stroke="#8a8a8a" stroke-width="0.7" stroke-dasharray="2.5 2" fill="none"><polyline points="613.5,554.6 679.5,448.1 886.0,482.1"/><polyline points="613.5,517.8 679.5,411.3 886.0,445.3"/><polyline points="613.5,480.9 679.5,374.4 886.0,408.4"/><polyline points="613.5,444.0 679.5,337.5 886.0,371.5"/></g><polyline points="613.5,591.5 613.5,407.2 679.5,300.7 886.0,334.7 886.0,519.0" fill="none" stroke="#707070" stroke-width="0.8"/><g stroke="#101010" stroke-width="0.75" stroke-linejoin="round"><polygon points="695.7,307.2 678.5,304.4 679.5,300.7 696.7,303.5" fill="#e7f400"/><polygon points="712.9,310.1 695.7,307.2 696.7,303.5 713.9,306.3" fill="#e7f400"/><polygon points="692.4,320.8 675.2,318.0 678.5,304.4 695.7,307.2" fill="#d6f300"/><polygon points="730.1,312.9 712.9,310.1 713.9,306.3 731.1,309.2" fill="#e7f400"/><polygon points="709.6,323.6 692.4,320.8 695.7,307.2 712.9,310.1" fill="#d6f300"/><polygon points="747.3,320.2 730.1,312.9 731.1,309.2 748.3,315.7" fill="#e0f400"/><polygon points="726.8,326.5 709.6,323.6 712.9,310.1 730.1,312.9" fill="#d6f300"/><polygon points="688.4,337.3 671.2,334.5 675.2,318.0 692.4,320.8" fill="#b8f000"/><polygon points="764.6,335.7 747.3,320.2 748.3,315.7 765.5,333.0" fill="#c4f100"/><polygon points="744.0,333.4 726.8,326.5 730.1,312.9 747.3,320.2" fill="#cff200"/><polygon points="705.6,340.1 688.4,337.3 692.4,320.8 709.6,323.6" fill="#b8f000"/><polygon points="781.8,359.8 764.6,335.7 765.5,333.0 782.8,357.5" fill="#8af000"/><polygon points="761.3,346.2 744.0,333.4 747.3,320.2 764.6,335.7" fill="#b6f000"/><polygon points="722.8,343.0 705.6,340.1 709.6,323.6 726.8,326.5" fill="#b8f000"/><polygon points="684.2,354.9 667.0,352.1 671.2,334.5 688.4,337.3" fill="#96f000"/><polygon points="799.0,390.5 781.8,359.8 782.8,357.5 800.0,388.9" fill="#3ef003"/><polygon points="778.5,367.8 761.3,346.2 764.6,335.7 781.8,359.8" fill="#82f000"/><polygon points="740.0,349.9 722.8,343.0 726.8,326.5 744.0,333.4" fill="#b2f000"/><polygon points="701.4,357.7 684.2,354.9 688.4,337.3 705.6,340.1" fill="#96f000"/><polygon points="807.6,408.5 799.0,390.5 800.0,388.9 808.6,406.9" fill="#02f009"/><polygon points="795.7,395.8 778.5,367.8 781.8,359.8 799.0,390.5" fill="#3cf003"/><polygon points="757.2,359.6 740.0,349.9 744.0,333.4 761.3,346.2" fill="#9df000"/><polygon points="816.2,423.7 807.6,408.5 808.6,406.9 817.2,422.1" fill="#00f05e"/><polygon points="718.6,360.6 701.4,357.7 705.6,340.1 722.8,343.0" fill="#96f000"/><polygon points="680.7,369.7 663.5,366.8 667.0,352.1 684.2,354.9" fill="#76f000"/><polygon points="824.8,438.9 816.2,423.7 817.2,422.1 825.8,437.3" fill="#00efaa"/><polygon points="804.3,413.8 795.7,395.8 799.0,390.5 807.6,408.5" fill="#02f009"/><polygon points="774.4,377.0 757.2,359.6 761.3,346.2 778.5,367.8" fill="#74f000"/><polygon points="833.4,452.1 824.8,438.9 825.8,437.3 834.4,450.5" fill="#00eee5"/><polygon points="812.9,429.0 804.3,413.8 807.6,408.5 816.2,423.7" fill="#00f05e"/><polygon points="735.8,367.3 718.6,360.6 722.8,343.0 740.0,349.9" fill="#90f000"/><polygon points="697.9,372.5 680.7,369.7 684.2,354.9 701.4,357.7" fill="#76f000"/><polygon points="821.5,444.2 812.9,429.0 816.2,423.7 824.8,438.9" fill="#00efaa"/><polygon points="850.6,468.8 833.4,452.1 834.4,450.5 851.6,467.2" fill="#00c9fa"/><polygon points="791.6,402.3 774.4,377.0 778.5,367.8 795.7,395.8" fill="#38f003"/><polygon points="830.1,457.4 821.5,444.2 824.8,438.9 833.4,452.1" fill="#00eee5"/><polygon points="753.0,374.8 735.8,367.3 740.0,349.9 757.2,359.6" fill="#80f000"/><polygon points="715.1,375.3 697.9,372.5 701.4,357.7 718.6,360.6" fill="#76f000"/><polygon points="859.2,472.2 850.6,468.8 851.6,467.2 860.2,470.6" fill="#00abff"/><polygon points="676.0,389.7 658.8,386.9 663.5,366.8 680.7,369.7" fill="#53f000"/><polygon points="800.2,420.3 791.6,402.3 795.7,395.8 804.3,413.8" fill="#02f009"/><polygon points="847.3,474.1 830.1,457.4 833.4,452.1 850.6,468.8" fill="#00c9fa"/><polygon points="867.8,475.3 859.2,472.2 860.2,470.6 868.8,473.7" fill="#00a5ff"/><polygon points="808.9,435.5 800.2,420.3 804.3,413.8 812.9,429.0" fill="#00f05e"/><polygon points="770.2,387.5 753.0,374.8 757.2,359.6 774.4,377.0" fill="#62f000"/><polygon points="732.3,381.2 715.1,375.3 718.6,360.6 735.8,367.3" fill="#70f000"/><polygon points="876.4,476.7 867.8,475.3 868.8,473.7 877.4,475.1" fill="#00a2ff"/><polygon points="693.2,392.5 676.0,389.7 680.7,369.7 697.9,372.5" fill="#53f000"/><polygon points="855.9,477.6 847.3,474.1 850.6,468.8 859.2,472.2" fill="#00abff"/><polygon points="817.5,450.7 808.9,435.5 812.9,429.0 821.5,444.2" fill="#00efaa"/><polygon points="881.6,477.6 876.4,476.7 877.4,475.1 882.6,476.0" fill="#00a2ff"/><polygon points="885.0,478.1 881.6,477.6 882.6,476.0 886.0,476.5" fill="#00a2ff"/><polygon points="864.5,480.6 855.9,477.6 859.2,472.2 867.8,475.3" fill="#00a5ff"/><polygon points="826.1,463.9 817.5,450.7 821.5,444.2 830.1,457.4" fill="#00eee5"/><polygon points="787.4,409.1 770.2,387.5 774.4,377.0 791.6,402.3" fill="#34f004"/><polygon points="749.5,387.8 732.3,381.2 735.8,367.3 753.0,374.8" fill="#63f000"/><polygon points="710.4,395.4 693.2,392.5 697.9,372.5 715.1,375.3" fill="#53f000"/><polygon points="873.1,482.1 864.5,480.6 867.8,475.3 876.4,476.7" fill="#00a2ff"/><polygon points="843.3,480.6 826.1,463.9 830.1,457.4 847.3,474.1" fill="#00c9fa"/><polygon points="796.0,427.1 787.4,409.1 791.6,402.3 800.2,420.3" fill="#02f009"/><polygon points="671.9,407.3 654.7,404.4 658.8,386.9 676.0,389.7" fill="#34f004"/><polygon points="878.3,482.9 873.1,482.1 876.4,476.7 881.6,477.6" fill="#00a2ff"/><polygon points="766.7,397.6 749.5,387.8 753.0,374.8 770.2,387.5" fill="#50f001"/><polygon points="881.7,483.5 878.3,482.9 881.6,477.6 885.0,478.1" fill="#00a2ff"/><polygon points="804.6,442.3 796.0,427.1 800.2,420.3 808.9,435.5" fill="#00f05e"/><polygon points="727.6,400.6 710.4,395.4 715.1,375.3 732.3,381.2" fill="#50f001"/><polygon points="851.9,484.1 843.3,480.6 847.3,474.1 855.9,477.6" fill="#00abff"/><polygon points="813.2,457.5 804.6,442.3 808.9,435.5 817.5,450.7" fill="#00efaa"/><polygon points="689.1,410.1 671.9,407.3 676.0,389.7 693.2,392.5" fill="#34f004"/><polygon points="860.5,487.1 851.9,484.1 855.9,477.6 864.5,480.6" fill="#00a5ff"/><polygon points="783.9,415.9 766.7,397.6 770.2,387.5 787.4,409.1" fill="#2ef004"/><polygon points="821.8,470.7 813.2,457.5 817.5,450.7 826.1,463.9" fill="#00eee5"/><polygon points="744.8,406.2 727.6,400.6 732.3,381.2 749.5,387.8" fill="#48f001"/><polygon points="869.1,488.5 860.5,487.1 864.5,480.6 873.1,482.1" fill="#00a2ff"/><polygon points="706.3,412.9 689.1,410.1 693.2,392.5 710.4,395.4" fill="#34f004"/><polygon points="792.5,432.8 783.9,415.9 787.4,409.1 796.0,427.1" fill="#01f009"/><polygon points="874.2,489.4 869.1,488.5 873.1,482.1 878.3,482.9" fill="#00a2ff"/><polygon points="839.0,487.4 821.8,470.7 826.1,463.9 843.3,480.6" fill="#00c9fa"/><polygon points="667.7,425.4 650.5,422.5 654.7,404.4 671.9,407.3" fill="#15f007"/><polygon points="877.7,490.0 874.2,489.4 878.3,482.9 881.7,483.5" fill="#00a2ff"/><polygon points="762.0,413.3 744.8,406.2 749.5,387.8 766.7,397.6" fill="#3cf003"/><polygon points="801.1,448.0 792.5,432.8 796.0,427.1 804.6,442.3" fill="#00f05e"/><polygon points="847.6,490.9 839.0,487.4 843.3,480.6 851.9,484.1" fill="#00abff"/><polygon points="723.5,417.7 706.3,412.9 710.4,395.4 727.6,400.6" fill="#31f004"/><polygon points="809.7,463.2 801.1,448.0 804.6,442.3 813.2,457.5" fill="#00efaa"/><polygon points="684.9,428.2 667.7,425.4 671.9,407.3 689.1,410.1" fill="#15f007"/><polygon points="856.3,493.9 847.6,490.9 851.9,484.1 860.5,487.1" fill="#00a5ff"/><polygon points="779.2,427.8 762.0,413.3 766.7,397.6 783.9,415.9" fill="#21f006"/><polygon points="818.3,476.4 809.7,463.2 813.2,457.5 821.8,470.7" fill="#00eee5"/><polygon points="864.9,495.4 856.3,493.9 860.5,487.1 869.1,488.5" fill="#00a2ff"/><polygon points="740.7,422.8 723.5,417.7 727.6,400.6 744.8,406.2" fill="#2af005"/><polygon points="702.2,431.0 684.9,428.2 689.1,410.1 706.3,412.9" fill="#15f007"/><polygon points="787.8,440.3 779.2,427.8 783.9,415.9 792.5,432.8" fill="#00f00f"/><polygon points="835.5,493.0 818.3,476.4 821.8,470.7 839.0,487.4" fill="#00c9fa"/><polygon points="870.0,496.2 864.9,495.4 869.1,488.5 874.2,489.4" fill="#00a2ff"/><polygon points="663.6,440.8 646.4,438.0 650.5,422.5 667.7,425.4" fill="#00f016"/><polygon points="873.5,496.8 870.0,496.2 874.2,489.4 877.7,490.0" fill="#00a2ff"/><polygon points="796.4,455.5 787.8,440.3 792.5,432.8 801.1,448.0" fill="#00f05e"/><polygon points="757.9,428.7 740.7,422.8 744.8,406.2 762.0,413.3" fill="#22f006"/><polygon points="844.1,496.5 835.5,493.0 839.0,487.4 847.6,490.9" fill="#00abff"/><polygon points="719.4,435.3 702.2,431.0 706.3,412.9 723.5,417.7" fill="#13f007"/><polygon points="805.0,470.7 796.4,455.5 801.1,448.0 809.7,463.2" fill="#00efaa"/><polygon points="680.9,443.6 663.6,440.8 667.7,425.4 684.9,428.2" fill="#00f016"/><polygon points="852.8,499.6 844.1,496.5 847.6,490.9 856.3,493.9" fill="#00a5ff"/><polygon points="813.7,483.9 805.0,470.7 809.7,463.2 818.3,476.4" fill="#00eee5"/><polygon points="775.1,439.2 757.9,428.7 762.0,413.3 779.2,427.8" fill="#10f008"/><polygon points="861.4,501.0 852.8,499.6 856.3,493.9 864.9,495.4" fill="#00a2ff"/><polygon points="661.7,450.7 644.5,447.9 646.4,438.0 663.6,440.8" fill="#00f043"/><polygon points="736.6,440.2 719.4,435.3 723.5,417.7 740.7,422.8" fill="#0ef008"/><polygon points="866.5,501.9 861.4,501.0 864.9,495.4 870.0,496.2" fill="#00a2ff"/><polygon points="698.1,446.5 680.9,443.6 684.9,428.2 702.2,431.0" fill="#00f016"/><polygon points="830.9,500.6 813.7,483.9 818.3,476.4 835.5,493.0" fill="#00c9fa"/><polygon points="783.7,449.1 775.1,439.2 779.2,427.8 787.8,440.3" fill="#00f01f"/><polygon points="870.0,502.4 866.5,501.9 870.0,496.2 873.5,496.8" fill="#00a2ff"/><polygon points="678.9,453.6 661.7,450.7 663.6,440.8 680.9,443.6" fill="#00f043"/><polygon points="792.4,462.2 783.7,449.1 787.8,440.3 796.4,455.5" fill="#00f061"/><polygon points="753.8,445.5 736.6,440.2 740.7,422.8 757.9,428.7" fill="#07f009"/><polygon points="659.5,462.2 642.3,459.4 644.5,447.9 661.7,450.7" fill="#00f06e"/><polygon points="839.5,504.1 830.9,500.6 835.5,493.0 844.1,496.5" fill="#00abff"/><polygon points="715.3,450.3 698.1,446.5 702.2,431.0 719.4,435.3" fill="#00f019"/><polygon points="801.0,477.3 792.4,462.2 796.4,455.5 805.0,470.7" fill="#00efaa"/><polygon points="848.1,507.2 839.5,504.1 844.1,496.5 852.8,499.6" fill="#00a5ff"/><polygon points="696.1,456.4 678.9,453.6 680.9,443.6 698.1,446.5" fill="#00f043"/><polygon points="809.6,490.5 801.0,477.3 805.0,470.7 813.7,483.9" fill="#00eee5"/><polygon points="771.0,453.3 753.8,445.5 757.9,428.7 775.1,439.2" fill="#00f014"/><polygon points="676.7,465.0 659.5,462.2 661.7,450.7 678.9,453.6" fill="#00f06e"/><polygon points="856.7,508.6 848.1,507.2 852.8,499.6 861.4,501.0" fill="#00a2ff"/><polygon points="657.5,472.5 640.3,469.7 642.3,459.4 659.5,462.2" fill="#00ef99"/><polygon points="732.5,455.3 715.3,450.3 719.4,435.3 736.6,440.2" fill="#00f023"/><polygon points="861.8,509.4 856.7,508.6 861.4,501.0 866.5,501.9" fill="#00a2ff"/><polygon points="865.3,510.0 861.8,509.4 866.5,501.9 870.0,502.4" fill="#00a2ff"/><polygon points="826.8,507.2 809.6,490.5 813.7,483.9 830.9,500.6" fill="#00c9fa"/><polygon points="779.6,460.2 771.0,453.3 775.1,439.2 783.7,449.1" fill="#00f03b"/><polygon points="713.3,461.1 696.1,456.4 698.1,446.5 715.3,450.3" fill="#00f047"/><polygon points="693.9,467.9 676.7,465.0 678.9,453.6 696.1,456.4" fill="#00f06e"/><polygon points="674.7,475.3 657.5,472.5 659.5,462.2 676.7,465.0" fill="#00ef99"/><polygon points="788.2,469.0 779.6,460.2 783.7,449.1 792.4,462.2" fill="#00f06b"/><polygon points="749.7,460.1 732.5,455.3 736.6,440.2 753.8,445.5" fill="#00f030"/><polygon points="655.4,483.1 638.2,480.3 640.3,469.7 657.5,472.5" fill="#00efbb"/><polygon points="835.4,510.7 826.8,507.2 830.9,500.6 839.5,504.1" fill="#00abff"/><polygon points="796.8,484.1 788.2,469.0 792.4,462.2 801.0,477.3" fill="#00efaa"/><polygon points="730.5,465.6 713.3,461.1 715.3,450.3 732.5,455.3" fill="#00f051"/><polygon points="844.0,513.8 835.4,510.7 839.5,504.1 848.1,507.2" fill="#00a5ff"/><polygon points="711.1,472.5 693.9,467.9 696.1,456.4 713.3,461.1" fill="#00f073"/><polygon points="691.9,478.2 674.7,475.3 676.7,465.0 693.9,467.9" fill="#00ef99"/><polygon points="654.1,489.6 636.9,486.8 638.2,480.3 655.4,483.1" fill="#00eed6"/><polygon points="805.4,497.2 796.8,484.1 801.0,477.3 809.6,490.5" fill="#00eee5"/><polygon points="766.9,466.7 749.7,460.1 753.8,445.5 771.0,453.3" fill="#00f043"/><polygon points="672.6,486.0 655.4,483.1 657.5,472.5 674.7,475.3" fill="#00efbb"/><polygon points="852.6,515.2 844.0,513.8 848.1,507.2 856.7,508.6" fill="#00a2ff"/><polygon points="857.7,516.0 852.6,515.2 856.7,508.6 861.8,509.4" fill="#00a2ff"/><polygon points="747.7,470.3 730.5,465.6 732.5,455.3 749.7,460.1" fill="#00f05d"/><polygon points="822.6,513.9 805.4,497.2 809.6,490.5 826.8,507.2" fill="#00c9fa"/><polygon points="775.5,471.4 766.9,466.7 771.0,453.3 779.6,460.2" fill="#00f05d"/><polygon points="728.3,477.3 711.1,472.5 713.3,461.1 730.5,465.6" fill="#00f07e"/><polygon points="861.2,516.6 857.7,516.0 861.8,509.4 865.3,510.0" fill="#00a2ff"/><polygon points="709.1,482.7 691.9,478.2 693.9,467.9 711.1,472.5" fill="#00ef9d"/><polygon points="671.3,492.4 654.1,489.6 655.4,483.1 672.6,486.0" fill="#00eed6"/><polygon points="689.8,488.8 672.6,486.0 674.7,475.3 691.9,478.2" fill="#00efbb"/><polygon points="784.1,476.5 775.5,471.4 779.6,460.2 788.2,469.0" fill="#00f07a"/><polygon points="650.7,505.6 633.5,502.8 636.9,486.8 654.1,489.6" fill="#00eaf5"/><polygon points="831.2,517.4 822.6,513.9 826.8,507.2 835.4,510.7" fill="#00abff"/><polygon points="764.9,476.1 747.7,470.3 749.7,460.1 766.9,466.7" fill="#00f06c"/><polygon points="792.7,493.2 784.1,476.5 788.2,469.0 796.8,484.1" fill="#00efae"/><polygon points="745.5,481.7 728.3,477.3 730.5,465.6 747.7,470.3" fill="#00f089"/><polygon points="726.3,488.2 709.1,482.7 711.1,472.5 728.3,477.3" fill="#00efa7"/><polygon points="688.5,495.3 671.3,492.4 672.6,486.0 689.8,488.8" fill="#00eed6"/><polygon points="839.8,520.5 831.2,517.4 835.4,510.7 844.0,513.8" fill="#00a5ff"/><polygon points="707.0,493.3 689.8,488.8 691.9,478.2 709.1,482.7" fill="#00efbf"/><polygon points="801.3,506.4 792.7,493.2 796.8,484.1 805.4,497.2" fill="#00eeeb"/><polygon points="667.9,508.5 650.7,505.6 654.1,489.6 671.3,492.4" fill="#00eaf5"/><polygon points="773.5,479.9 764.9,476.1 766.9,466.7 775.5,471.4" fill="#00f07e"/><polygon points="848.4,521.9 839.8,520.5 844.0,513.8 852.6,515.2" fill="#00a2ff"/><polygon points="649.3,512.5 632.0,509.7 633.5,502.8 650.7,505.6" fill="#00cdfa"/><polygon points="762.7,487.0 745.5,481.7 747.7,470.3 764.9,476.1" fill="#00f095"/><polygon points="853.6,522.7 848.4,521.9 852.6,515.2 857.7,516.0" fill="#00a2ff"/><polygon points="782.1,484.2 773.5,479.9 775.5,471.4 784.1,476.5" fill="#00f090"/><polygon points="743.5,493.0 726.3,488.2 728.3,477.3 745.5,481.7" fill="#00efb0"/><polygon points="705.7,499.8 688.5,495.3 689.8,488.8 707.0,493.3" fill="#00eeda"/><polygon points="818.5,523.0 801.3,506.4 805.4,497.2 822.6,513.9" fill="#00c4fb"/><polygon points="724.2,498.8 707.0,493.3 709.1,482.7 726.3,488.2" fill="#00eec9"/><polygon points="857.0,523.3 853.6,522.7 857.7,516.0 861.2,516.6" fill="#00a2ff"/><polygon points="685.1,511.3 667.9,508.5 671.3,492.4 688.5,495.3" fill="#00eaf5"/><polygon points="790.7,497.1 782.1,484.2 784.1,476.5 792.7,493.2" fill="#00efb8"/><polygon points="771.3,490.1 762.7,487.0 764.9,476.1 773.5,479.9" fill="#00efa1"/><polygon points="647.1,522.3 629.9,519.5 632.0,509.7 649.3,512.5" fill="#00b8fd"/><polygon points="666.5,515.4 649.3,512.5 650.7,505.6 667.9,508.5" fill="#00cdfa"/><polygon points="827.1,526.5 818.5,523.0 822.6,513.9 831.2,517.4" fill="#00a7ff"/><polygon points="799.3,509.6 790.7,497.1 792.7,493.2 801.3,506.4" fill="#00eef2"/><polygon points="760.8,497.8 743.5,493.0 745.5,481.7 762.7,487.0" fill="#00efba"/><polygon points="722.9,505.6 705.7,499.8 707.0,493.3 724.2,498.8" fill="#00eee4"/><polygon points="779.9,493.3 771.3,490.1 773.5,479.9 782.1,484.2" fill="#00efab"/><polygon points="741.4,504.1 724.2,498.8 726.3,488.2 743.5,493.0" fill="#00eed4"/><polygon points="835.7,529.6 827.1,526.5 831.2,517.4 839.8,520.5" fill="#00a0ff"/><polygon points="702.3,515.8 685.1,511.3 688.5,495.3 705.7,499.8" fill="#00e7f6"/><polygon points="788.5,503.3 779.9,493.3 782.1,484.2 790.7,497.1" fill="#00eec8"/><polygon points="664.4,525.2 647.1,522.3 649.3,512.5 666.5,515.4" fill="#00b8fd"/><polygon points="683.7,518.2 666.5,515.4 667.9,508.5 685.1,511.3" fill="#00cdfa"/><polygon points="816.5,526.5 799.3,509.6 801.3,506.4 818.5,523.0" fill="#00bffc"/><polygon points="769.4,500.4 760.8,497.8 762.7,487.0 771.3,490.1" fill="#00efc2"/><polygon points="645.1,531.7 627.9,528.8 629.9,519.5 647.1,522.3" fill="#00a2ff"/><polygon points="844.3,531.0 835.7,529.6 839.8,520.5 848.4,521.9" fill="#009dff"/><polygon points="740.1,511.3 722.9,505.6 724.2,498.8 741.4,504.1" fill="#00eef1"/><polygon points="797.2,513.1 788.5,503.3 790.7,497.1 799.3,509.6" fill="#00ecf5"/><polygon points="758.6,509.1 741.4,504.1 743.5,493.0 760.8,497.8" fill="#00eedf"/><polygon points="849.5,531.9 844.3,531.0 848.4,521.9 853.6,522.7" fill="#009dff"/><polygon points="778.0,503.4 769.4,500.4 771.3,490.1 779.9,493.3" fill="#00eeca"/><polygon points="719.5,522.0 702.3,515.8 705.7,499.8 722.9,505.6" fill="#00def7"/><polygon points="852.9,532.4 849.5,531.9 853.6,522.7 857.0,523.3" fill="#009dff"/><polygon points="825.1,529.7 816.5,526.5 818.5,523.0 827.1,526.5" fill="#00a2ff"/><polygon points="644.0,536.4 626.8,533.6 627.9,528.8 645.1,531.7" fill="#0092ff"/><polygon points="681.6,528.0 664.4,525.2 666.5,515.4 683.7,518.2" fill="#00b8fd"/><polygon points="700.9,522.6 683.7,518.2 685.1,511.3 702.3,515.8" fill="#00cafa"/><polygon points="786.6,511.6 778.0,503.4 779.9,493.3 788.5,503.3" fill="#00eee0"/><polygon points="662.3,534.5 645.1,531.7 647.1,522.3 664.4,525.2" fill="#00a2ff"/><polygon points="814.4,530.2 797.2,513.1 799.3,509.6 816.5,526.5" fill="#00bffc"/><polygon points="767.2,512.0 758.6,509.1 760.8,497.8 769.4,500.4" fill="#00eee6"/><polygon points="833.7,532.8 825.1,529.7 827.1,526.5 835.7,529.6" fill="#009cff"/><polygon points="757.3,516.2 740.1,511.3 741.4,504.1 758.6,509.1" fill="#00e7f6"/><polygon points="795.2,518.5 786.6,511.6 788.5,503.3 797.2,513.1" fill="#00e3f6"/><polygon points="736.7,527.6 719.5,522.0 722.9,505.6 740.1,511.3" fill="#00d2f9"/><polygon points="775.9,515.0 767.2,512.0 769.4,500.4 778.0,503.4" fill="#00eeed"/><polygon points="842.3,534.2 833.7,532.8 835.7,529.6 844.3,531.0" fill="#0099ff"/><polygon points="823.0,533.9 814.4,530.2 816.5,526.5 825.1,529.7" fill="#00a1ff"/><polygon points="661.2,539.3 644.0,536.4 645.1,531.7 662.3,534.5" fill="#0092ff"/><polygon points="698.8,532.4 681.6,528.0 683.7,518.2 700.9,522.6" fill="#00b5fd"/><polygon points="718.1,528.8 700.9,522.6 702.3,515.8 719.5,522.0" fill="#00c1fc"/><polygon points="641.1,549.9 623.9,547.1 626.8,533.6 644.0,536.4" fill="#007dff"/><polygon points="679.5,537.3 662.3,534.5 664.4,525.2 681.6,528.0" fill="#00a2ff"/><polygon points="765.9,519.3 757.3,516.2 758.6,509.1 767.2,512.0" fill="#00e0f7"/><polygon points="784.5,522.5 775.9,515.0 778.0,503.4 786.6,511.6" fill="#00e4f6"/><polygon points="847.5,535.0 842.3,534.2 844.3,531.0 849.5,531.9" fill="#0099ff"/><polygon points="812.4,534.1 795.2,518.5 797.2,513.1 814.4,530.2" fill="#00bcfc"/><polygon points="831.6,536.5 823.0,533.9 825.1,529.7 833.7,532.8" fill="#009bff"/><polygon points="851.0,535.6 847.5,535.0 849.5,531.9 852.9,532.4" fill="#0099ff"/><polygon points="774.5,522.6 765.9,519.3 767.2,512.0 775.9,515.0" fill="#00daf8"/><polygon points="754.0,533.7 736.7,527.6 740.1,511.3 757.3,516.2" fill="#00c8fa"/><polygon points="793.1,527.3 784.5,522.5 786.6,511.6 795.2,518.5" fill="#00d0f9"/><polygon points="840.2,537.9 831.6,536.5 833.7,532.8 842.3,534.2" fill="#0098ff"/><polygon points="678.5,542.1 661.2,539.3 662.3,534.5 679.5,537.3" fill="#0092ff"/><polygon points="716.0,538.4 698.8,532.4 700.9,522.6 718.1,528.8" fill="#00acff"/><polygon points="735.3,534.8 718.1,528.8 719.5,522.0 736.7,527.6" fill="#00b5fe"/><polygon points="658.3,552.7 641.1,549.9 644.0,536.4 661.2,539.3" fill="#007dff"/><polygon points="821.0,538.7 812.4,534.1 814.4,530.2 823.0,533.9" fill="#009eff"/><polygon points="696.7,541.6 679.5,537.3 681.6,528.0 698.8,532.4" fill="#009fff"/><polygon points="783.1,529.4 774.5,522.6 775.9,515.0 784.5,522.5" fill="#00ccfa"/><polygon points="845.3,538.8 840.2,537.9 842.3,534.2 847.5,535.0" fill="#0098ff"/><polygon points="762.6,536.8 754.0,533.7 757.3,516.2 765.9,519.3" fill="#00c0fc"/><polygon points="639.0,558.9 621.8,556.0 623.9,547.1 641.1,549.9" fill="#0062fe"/><polygon points="810.3,540.2 793.1,527.3 795.2,518.5 812.4,534.1" fill="#00b1fe"/><polygon points="829.6,541.3 821.0,538.7 823.0,533.9 831.6,536.5" fill="#0097ff"/><polygon points="848.8,539.4 845.3,538.8 847.5,535.0 851.0,535.6" fill="#0098ff"/><polygon points="791.7,533.5 783.1,529.4 784.5,522.5 793.1,527.3" fill="#00bbfd"/><polygon points="771.2,540.1 762.6,536.8 765.9,519.3 774.5,522.6" fill="#00b9fd"/><polygon points="695.7,546.4 678.5,542.1 679.5,537.3 696.7,541.6" fill="#008fff"/><polygon points="733.2,544.5 716.0,538.4 718.1,528.8 735.3,534.8" fill="#00a1ff"/><polygon points="752.5,540.8 735.3,534.8 736.7,527.6 754.0,533.7" fill="#00a9ff"/><polygon points="675.5,555.6 658.3,552.7 661.2,539.3 678.5,542.1" fill="#007dff"/><polygon points="838.2,542.7 829.6,541.3 831.6,536.5 840.2,537.9" fill="#0095ff"/><polygon points="713.9,547.5 696.7,541.6 698.8,532.4 716.0,538.4" fill="#0097ff"/><polygon points="818.9,545.0 810.3,540.2 812.4,534.1 821.0,538.7" fill="#0097ff"/><polygon points="808.9,544.9 791.7,533.5 793.1,527.3 810.3,540.2" fill="#00a4ff"/><polygon points="779.8,546.5 771.2,540.1 774.5,522.6 783.1,529.4" fill="#00abff"/><polygon points="656.2,561.7 639.0,558.9 641.1,549.9 658.3,552.7" fill="#0062fe"/><polygon points="637.3,565.9 620.1,563.1 621.8,556.0 639.0,558.9" fill="#004efc"/><polygon points="843.4,543.6 838.2,542.7 840.2,537.9 845.3,538.8" fill="#0095ff"/><polygon points="827.5,547.6 818.9,545.0 821.0,538.7 829.6,541.3" fill="#008fff"/><polygon points="846.8,544.1 843.4,543.6 845.3,538.8 848.8,539.4" fill="#0095ff"/><polygon points="761.1,543.8 752.5,540.8 754.0,533.7 762.6,536.8" fill="#00a1ff"/><polygon points="788.4,550.3 779.8,546.5 783.1,529.4 791.7,533.5" fill="#009eff"/><polygon points="712.9,552.4 695.7,546.4 696.7,541.6 713.9,547.5" fill="#0087ff"/><polygon points="750.4,550.5 733.2,544.5 735.3,534.8 752.5,540.8" fill="#0096ff"/><polygon points="692.7,559.8 675.5,555.6 678.5,542.1 695.7,546.4" fill="#007aff"/><polygon points="731.1,553.7 713.9,547.5 716.0,538.4 733.2,544.5" fill="#008cff"/><polygon points="817.6,549.7 808.9,544.9 810.3,540.2 818.9,545.0" fill="#008eff"/><polygon points="836.1,549.0 827.5,547.6 829.6,541.3 838.2,542.7" fill="#008dff"/><polygon points="769.7,547.4 761.1,543.8 762.6,536.8 771.2,540.1" fill="#009aff"/><polygon points="635.6,571.7 618.4,568.8 620.1,563.1 637.3,565.9" fill="#003ffb"/><polygon points="673.4,564.5 656.2,561.7 658.3,552.7 675.5,555.6" fill="#0062fe"/><polygon points="654.5,568.8 637.3,565.9 639.0,558.9 656.2,561.7" fill="#004efc"/><polygon points="841.2,549.9 836.1,549.0 838.2,542.7 843.4,543.6" fill="#008dff"/><polygon points="826.2,552.4 817.6,549.7 818.9,545.0 827.5,547.6" fill="#0086ff"/><polygon points="805.6,558.1 788.4,550.3 791.7,533.5 808.9,544.9" fill="#008eff"/><polygon points="759.0,553.9 750.4,550.5 752.5,540.8 761.1,543.8" fill="#008dff"/><polygon points="778.3,553.5 769.7,547.4 771.2,540.1 779.8,546.5" fill="#008eff"/><polygon points="844.7,550.4 841.2,549.9 843.4,543.6 846.8,544.1" fill="#008dff"/><polygon points="730.1,558.6 712.9,552.4 713.9,547.5 731.1,553.7" fill="#007cff"/><polygon points="709.9,565.6 692.7,559.8 695.7,546.4 712.9,552.4" fill="#0072ff"/><polygon points="748.3,559.6 731.1,553.7 733.2,544.5 750.4,550.5" fill="#0080ff"/><polygon points="834.8,553.8 826.2,552.4 827.5,547.6 836.1,549.0" fill="#0084ff"/><polygon points="767.6,557.0 759.0,553.9 761.1,543.8 769.7,547.4" fill="#0086ff"/><polygon points="786.9,557.2 778.3,553.5 779.8,546.5 788.4,550.3" fill="#0081ff"/><polygon points="634.1,576.7 616.9,573.9 618.4,568.8 635.6,571.7" fill="#0034fa"/><polygon points="652.8,574.5 635.6,571.7 637.3,565.9 654.5,568.8" fill="#003ffb"/><polygon points="814.2,562.4 805.6,558.1 808.9,544.9 817.6,549.7" fill="#007cff"/><polygon points="690.6,568.8 673.4,564.5 675.5,555.6 692.7,559.8" fill="#0060fd"/><polygon points="671.7,571.6 654.5,568.8 656.2,561.7 673.4,564.5" fill="#004efc"/><polygon points="839.9,554.7 834.8,553.8 836.1,549.0 841.2,549.9" fill="#0084ff"/><polygon points="776.2,562.6 767.6,557.0 769.7,547.4 778.3,553.5" fill="#007bff"/><polygon points="843.4,555.2 839.9,554.7 841.2,549.9 844.7,550.4" fill="#0084ff"/><polygon points="757.0,562.9 748.3,559.6 750.4,550.5 759.0,553.9" fill="#0077ff"/><polygon points="822.8,565.3 814.2,562.4 817.6,549.7 826.2,552.4" fill="#0074ff"/><polygon points="633.2,579.5 616.0,576.7 616.9,573.9 634.1,576.7" fill="#002cf7"/><polygon points="747.3,564.4 730.1,558.6 731.1,553.7 748.3,559.6" fill="#0070ff"/><polygon points="804.1,563.9 786.9,557.2 788.4,550.3 805.6,558.1" fill="#0076ff"/><polygon points="727.1,571.7 709.9,565.6 712.9,552.4 730.1,558.6" fill="#0066fe"/><polygon points="784.8,566.3 776.2,562.6 778.3,553.5 786.9,557.2" fill="#006fff"/><polygon points="651.3,579.6 634.1,576.7 635.6,571.7 652.8,574.5" fill="#0034fa"/><polygon points="765.6,565.9 757.0,562.9 759.0,553.9 767.6,557.0" fill="#0071ff"/><polygon points="670.0,577.3 652.8,574.5 654.5,568.8 671.7,571.6" fill="#003ffb"/><polygon points="632.4,582.4 615.1,579.6 616.0,576.7 633.2,579.5" fill="#0026f5"/><polygon points="831.4,566.7 822.8,565.3 826.2,552.4 834.8,553.8" fill="#0072ff"/><polygon points="707.8,574.5 690.6,568.8 692.7,559.8 709.9,565.6" fill="#0057fd"/><polygon points="688.9,575.8 671.7,571.6 673.4,564.5 690.6,568.8" fill="#004bfc"/><polygon points="755.9,567.5 747.3,564.4 748.3,559.6 757.0,562.9" fill="#0067fe"/><polygon points="812.7,567.7 804.1,563.9 805.6,558.1 814.2,562.4" fill="#0069fe"/><polygon points="836.6,567.6 831.4,566.7 834.8,553.8 839.9,554.7" fill="#0072ff"/><polygon points="774.2,570.8 765.6,565.9 767.6,557.0 776.2,562.6" fill="#0066fe"/><polygon points="631.4,585.5 614.2,582.6 615.1,579.6 632.4,582.4" fill="#0020f3"/><polygon points="650.4,582.3 633.2,579.5 634.1,576.7 651.3,579.6" fill="#002cf7"/><polygon points="802.0,571.8 784.8,566.3 786.9,557.2 804.1,563.9" fill="#0064fe"/><polygon points="744.3,576.9 727.1,571.7 730.1,558.6 747.3,564.4" fill="#005afd"/><polygon points="840.0,568.1 836.6,567.6 839.9,554.7 843.4,555.2" fill="#0072ff"/><polygon points="764.5,570.6 755.9,567.5 757.0,562.9 765.6,565.9" fill="#0060fd"/><polygon points="821.3,570.8 812.7,567.7 814.2,562.4 822.8,565.3" fill="#0060fd"/><polygon points="668.5,582.4 651.3,579.6 652.8,574.5 670.0,577.3" fill="#0034fa"/><polygon points="630.7,587.9 613.5,585.0 614.2,582.6 631.4,585.5" fill="#001bf0"/><polygon points="782.8,574.4 774.2,570.8 776.2,562.6 784.8,566.3" fill="#005afd"/><polygon points="687.2,581.5 670.0,577.3 671.7,571.6 688.9,575.8" fill="#003cfa"/><polygon points="649.6,585.2 632.4,582.4 633.2,579.5 650.4,582.3" fill="#0026f5"/><polygon points="725.0,580.2 707.8,574.5 709.9,565.6 727.1,571.7" fill="#004bfc"/><polygon points="706.1,581.0 688.9,575.8 690.6,568.8 707.8,574.5" fill="#0043fb"/><polygon points="773.1,575.2 764.5,570.6 765.6,565.9 774.2,570.8" fill="#0056fd"/><polygon points="810.6,575.3 802.0,571.8 804.1,563.9 812.7,567.7" fill="#0059fd"/><polygon points="829.9,572.2 821.3,570.8 822.8,565.3 831.4,566.7" fill="#005dfd"/><polygon points="752.9,579.8 744.3,576.9 747.3,564.4 755.9,567.5" fill="#0052fc"/><polygon points="648.6,588.3 631.4,585.5 632.4,582.4 649.6,585.2" fill="#0020f3"/><polygon points="667.6,585.2 650.4,582.3 651.3,579.6 668.5,582.4" fill="#002cf7"/><polygon points="800.0,579.3 782.8,574.4 784.8,566.3 802.0,571.8" fill="#0051fc"/><polygon points="835.1,573.1 829.9,572.2 831.4,566.7 836.6,567.6" fill="#005dfd"/><polygon points="781.7,578.4 773.1,575.2 774.2,570.8 782.8,574.4" fill="#004bfc"/><polygon points="819.2,577.9 810.6,575.3 812.7,567.7 821.3,570.8" fill="#0052fc"/><polygon points="685.7,586.6 668.5,582.4 670.0,577.3 687.2,581.5" fill="#0031f9"/><polygon points="761.5,582.4 752.9,579.8 755.9,567.5 764.5,570.6" fill="#004bfc"/><polygon points="647.9,590.7 630.7,587.9 631.4,585.5 648.6,588.3" fill="#001bf0"/><polygon points="838.5,573.7 835.1,573.1 836.6,567.6 840.0,568.1" fill="#005dfd"/><polygon points="704.4,586.5 687.2,581.5 688.9,575.8 706.1,581.0" fill="#0035fa"/><polygon points="666.8,588.1 649.6,585.2 650.4,582.3 667.6,585.2" fill="#0026f5"/><polygon points="742.2,584.9 725.0,580.2 727.1,571.7 744.3,576.9" fill="#0040fb"/><polygon points="723.4,586.4 706.1,581.0 707.8,574.5 725.0,580.2" fill="#0038fa"/><polygon points="827.8,579.3 819.2,577.9 821.3,570.8 829.9,572.2" fill="#004ffc"/><polygon points="770.1,586.0 761.5,582.4 764.5,570.6 773.1,575.2" fill="#0043fb"/><polygon points="808.6,582.2 800.0,579.3 802.0,571.8 810.6,575.3" fill="#0048fb"/><polygon points="665.9,591.1 648.6,588.3 649.6,585.2 666.8,588.1" fill="#0020f3"/><polygon points="684.8,589.3 667.6,585.2 668.5,582.4 685.7,586.6" fill="#0029f6"/><polygon points="798.9,583.0 781.7,578.4 782.8,574.4 800.0,579.3" fill="#0043fb"/><polygon points="833.0,580.2 827.8,579.3 829.9,572.2 835.1,573.1" fill="#004ffc"/><polygon points="750.8,587.5 742.2,584.9 744.3,576.9 752.9,579.8" fill="#0039fa"/><polygon points="702.9,591.3 685.7,586.6 687.2,581.5 704.4,586.5" fill="#002bf7"/><polygon points="778.7,588.7 770.1,586.0 773.1,575.2 781.7,578.4" fill="#003bfa"/><polygon points="665.1,593.5 647.9,590.7 648.6,588.3 665.9,591.1" fill="#001bf0"/><polygon points="817.2,584.4 808.6,582.2 810.6,575.3 819.2,577.9" fill="#0043fb"/><polygon points="836.4,580.7 833.0,580.2 835.1,573.1 838.5,573.7" fill="#004ffc"/><polygon points="721.6,591.7 704.4,586.5 706.1,581.0 723.4,586.4" fill="#002cf7"/><polygon points="684.0,592.2 666.8,588.1 667.6,585.2 684.8,589.3" fill="#0024f4"/><polygon points="740.6,590.9 723.4,586.4 725.0,580.2 742.2,584.9" fill="#002ff9"/><polygon points="759.4,589.8 750.8,587.5 752.9,579.8 761.5,582.4" fill="#0034fa"/><polygon points="807.5,585.8 798.9,583.0 800.0,579.3 808.6,582.2" fill="#003dfa"/><polygon points="825.8,585.9 817.2,584.4 819.2,577.9 827.8,579.3" fill="#0041fb"/><polygon points="683.1,595.3 665.9,591.1 666.8,588.1 684.0,592.2" fill="#001ef2"/><polygon points="702.0,593.9 684.8,589.3 685.7,586.6 702.9,591.3" fill="#0023f4"/><polygon points="795.9,592.7 778.7,588.7 781.7,578.4 798.9,583.0" fill="#0034fa"/><polygon points="768.0,593.0 759.4,589.8 761.5,582.4 770.1,586.0" fill="#002ef8"/><polygon points="816.1,587.6 807.5,585.8 808.6,582.2 817.2,584.4" fill="#0038fa"/><polygon points="749.2,593.2 740.6,590.9 742.2,584.9 750.8,587.5" fill="#002af6"/><polygon points="830.9,586.8 825.8,585.9 827.8,579.3 833.0,580.2" fill="#0041fb"/><polygon points="720.1,596.2 702.9,591.3 704.4,586.5 721.6,591.7" fill="#0022f3"/><polygon points="682.3,597.6 665.1,593.5 665.9,591.1 683.1,595.3" fill="#0018ef"/><polygon points="738.8,596.0 721.6,591.7 723.4,586.4 740.6,590.9" fill="#0024f4"/><polygon points="701.2,596.7 684.0,592.2 684.8,589.3 702.0,593.9" fill="#001ef2"/><polygon points="834.4,587.3 830.9,586.8 833.0,580.2 836.4,580.7" fill="#0041fb"/><polygon points="776.6,595.4 768.0,593.0 770.1,586.0 778.7,588.7" fill="#0028f6"/><polygon points="824.7,589.1 816.1,587.6 817.2,584.4 825.8,585.9" fill="#0037fa"/><polygon points="757.8,595.3 749.2,593.2 750.8,587.5 759.4,589.8" fill="#0026f5"/><polygon points="804.5,595.0 795.9,592.7 798.9,583.0 807.5,585.8" fill="#002ff9"/><polygon points="700.3,599.5 683.1,595.3 684.0,592.2 701.2,596.7" fill="#0018ef"/><polygon points="719.3,598.7 702.0,593.9 702.9,591.3 720.1,596.2" fill="#001cf1"/><polygon points="829.9,590.0 824.7,589.1 825.8,585.9 830.9,586.8" fill="#0037fa"/><polygon points="747.4,598.2 738.8,596.0 740.6,590.9 749.2,593.2" fill="#001ff2"/><polygon points="766.4,598.2 757.8,595.3 759.4,589.8 768.0,593.0" fill="#0022f3"/><polygon points="737.3,600.6 720.1,596.2 721.6,591.7 738.8,596.0" fill="#001bf1"/><polygon points="813.2,596.5 804.5,595.0 807.5,585.8 816.1,587.6" fill="#002cf7"/><polygon points="699.5,601.7 682.3,597.6 683.1,595.3 700.3,599.5" fill="#0013ed"/><polygon points="833.3,590.5 829.9,590.0 830.9,586.8 834.4,587.3" fill="#0037fa"/><polygon points="718.4,601.4 701.2,596.7 702.0,593.9 719.3,598.7" fill="#0017ef"/><polygon points="793.8,599.0 776.6,595.4 778.7,588.7 795.9,592.7" fill="#0024f4"/><polygon points="756.1,600.2 747.4,598.2 749.2,593.2 757.8,595.3" fill="#001cf1"/><polygon points="775.0,600.2 766.4,598.2 768.0,593.0 776.6,595.4" fill="#001df1"/><polygon points="821.8,597.3 813.2,596.5 816.1,587.6 824.7,589.1" fill="#002cf7"/><polygon points="717.5,604.0 700.3,599.5 701.2,596.7 718.4,601.4" fill="#0012ed"/><polygon points="736.5,603.0 719.3,598.7 720.1,596.2 737.3,600.6" fill="#0015ee"/><polygon points="745.9,602.5 737.3,600.6 738.8,596.0 747.4,598.2" fill="#0017ef"/><polygon points="764.7,602.7 756.1,600.2 757.8,595.3 766.4,598.2" fill="#0019f0"/><polygon points="802.4,601.1 793.8,599.0 795.9,592.7 804.5,595.0" fill="#0021f3"/><polygon points="826.9,597.7 821.8,597.3 824.7,589.1 829.9,590.0" fill="#002df8"/><polygon points="716.8,606.2 699.5,601.7 700.3,599.5 717.5,604.0" fill="#000eeb"/><polygon points="735.6,605.6 718.4,601.4 719.3,598.7 736.5,603.0" fill="#0011ec"/><polygon points="830.4,598.5 826.9,597.7 829.9,590.0 833.3,590.5" fill="#002ef8"/><polygon points="792.2,603.7 775.0,600.2 776.6,595.4 793.8,599.0" fill="#001af0"/><polygon points="754.5,604.4 745.9,602.5 747.4,598.2 756.1,600.2" fill="#0015ee"/><polygon points="773.3,604.6 764.7,602.7 766.4,598.2 775.0,600.2" fill="#0015ee"/><polygon points="745.1,604.9 736.5,603.0 737.3,600.6 745.9,602.5" fill="#0011ed"/><polygon points="811.0,602.4 802.4,601.1 804.5,595.0 813.2,596.5" fill="#001ff2"/><polygon points="734.7,608.3 717.5,604.0 718.4,601.4 735.6,605.6" fill="#000cea"/><polygon points="763.1,606.6 754.5,604.4 756.1,600.2 764.7,602.7" fill="#0012ed"/><polygon points="744.2,607.5 735.6,605.6 736.5,603.0 745.1,604.9" fill="#000deb"/><polygon points="753.7,606.7 745.1,604.9 745.9,602.5 754.5,604.4" fill="#000fec"/><polygon points="819.6,602.8 811.0,602.4 813.2,596.5 821.8,597.3" fill="#0021f3"/><polygon points="800.8,605.5 792.2,603.7 793.8,599.0 802.4,601.1" fill="#0018ef"/><polygon points="734.0,610.5 716.8,606.2 717.5,604.0 734.7,608.3" fill="#0008e9"/><polygon points="790.5,607.8 773.3,604.6 775.0,600.2 792.2,603.7" fill="#0013ed"/><polygon points="771.7,608.4 763.1,606.6 764.7,602.7 773.3,604.6" fill="#000fec"/><polygon points="824.8,603.1 819.6,602.8 821.8,597.3 826.9,597.7" fill="#0023f4"/><polygon points="743.3,610.1 734.7,608.3 735.6,605.6 744.2,607.5" fill="#0008e9"/><polygon points="752.8,609.3 744.2,607.5 745.1,604.9 753.7,606.7" fill="#000bea"/><polygon points="762.3,608.9 753.7,606.7 754.5,604.4 763.1,606.6" fill="#000deb"/><polygon points="809.4,606.7 800.8,605.5 802.4,601.1 811.0,602.4" fill="#0017ef"/><polygon points="828.2,603.6 824.8,603.1 826.9,597.7 830.4,598.5" fill="#0024f4"/><polygon points="742.6,612.1 734.0,610.5 734.7,608.3 743.3,610.1" fill="#0004e7"/><polygon points="751.9,611.8 743.3,610.1 744.2,607.5 752.8,609.3" fill="#0007e8"/><polygon points="799.1,609.5 790.5,607.8 792.2,603.7 800.8,605.5" fill="#0012ed"/><polygon points="761.4,611.3 752.8,609.3 753.7,606.7 762.3,608.9" fill="#0009e9"/><polygon points="770.9,610.5 762.3,608.9 763.1,606.6 771.7,608.4" fill="#000bea"/><polygon points="818.0,606.8 809.4,606.7 811.0,602.4 819.6,602.8" fill="#001af0"/><polygon points="788.9,611.6 771.7,608.4 773.3,604.6 790.5,607.8" fill="#000eeb"/><polygon points="751.2,613.7 742.6,612.1 743.3,610.1 751.9,611.8" fill="#0003e7"/><polygon points="823.2,606.1 818.0,606.8 819.6,602.8 824.8,603.1" fill="#001ef2"/><polygon points="760.5,613.7 751.9,611.8 752.8,609.3 761.4,611.3" fill="#0005e8"/><polygon points="807.7,610.4 799.1,609.5 800.8,605.5 809.4,606.7" fill="#0012ed"/><polygon points="770.0,612.9 761.4,611.3 762.3,608.9 770.9,610.5" fill="#0007e9"/><polygon points="826.6,606.6 823.2,606.1 824.8,603.1 828.2,603.6" fill="#0020f2"/><polygon points="788.1,613.6 770.9,610.5 771.7,608.4 788.9,611.6" fill="#000aea"/><polygon points="797.6,613.2 788.9,611.6 790.5,607.8 799.1,609.5" fill="#000deb"/><polygon points="759.8,615.5 751.2,613.7 751.9,611.8 760.5,613.7" fill="#0002e6"/><polygon points="769.1,615.3 760.5,613.7 761.4,611.3 770.0,612.9" fill="#0004e7"/><polygon points="816.3,609.7 807.7,610.4 809.4,606.7 818.0,606.8" fill="#0016ee"/><polygon points="787.2,615.9 770.0,612.9 770.9,610.5 788.1,613.6" fill="#0007e8"/><polygon points="806.2,613.7 797.6,613.2 799.1,609.5 807.7,610.4" fill="#000deb"/><polygon points="821.4,609.1 816.3,609.7 818.0,606.8 823.2,606.1" fill="#001cf1"/><polygon points="768.4,617.0 759.8,615.5 760.5,613.7 769.1,615.3" fill="#0001e6"/><polygon points="796.7,615.2 788.1,613.6 788.9,611.6 797.6,613.2" fill="#0009e9"/><polygon points="824.9,609.6 821.4,609.1 823.2,606.1 826.6,606.6" fill="#001ff2"/><polygon points="786.3,618.3 769.1,615.3 770.0,612.9 787.2,615.9" fill="#0003e7"/><polygon points="814.8,613.3 806.2,613.7 807.7,610.4 816.3,609.7" fill="#0013ed"/><polygon points="795.8,617.4 787.2,615.9 788.1,613.6 796.7,615.2" fill="#0006e8"/><polygon points="805.3,615.7 796.7,615.2 797.6,613.2 806.2,613.7" fill="#000aea"/><polygon points="785.6,619.8 768.4,617.0 769.1,615.3 786.3,618.3" fill="#0000e6"/><polygon points="819.9,612.4 814.8,613.3 816.3,609.7 821.4,609.1" fill="#001af0"/><polygon points="794.9,619.7 786.3,618.3 787.2,615.9 795.8,617.4" fill="#0003e7"/><polygon points="804.4,618.0 795.8,617.4 796.7,615.2 805.3,615.7" fill="#0007e9"/><polygon points="813.9,615.5 805.3,615.7 806.2,613.7 814.8,613.3" fill="#000fec"/><polygon points="823.4,613.0 819.9,612.4 821.4,609.1 824.9,609.6" fill="#001df1"/><polygon points="819.1,614.8 813.9,615.5 814.8,613.3 819.9,612.4" fill="#0016ee"/><polygon points="794.2,621.2 785.6,619.8 786.3,618.3 794.9,619.7" fill="#0000e6"/><polygon points="803.5,620.6 794.9,619.7 795.8,617.4 804.4,618.0" fill="#0004e7"/><polygon points="813.0,618.1 804.4,618.0 805.3,615.7 813.9,615.5" fill="#000cea"/><polygon points="822.5,615.4 819.1,614.8 819.9,612.4 823.4,613.0" fill="#0019f0"/><polygon points="818.2,617.8 813.0,618.1 813.9,615.5 819.1,614.8" fill="#0011ed"/><polygon points="802.8,622.7 794.2,621.2 794.9,619.7 803.5,620.6" fill="#0001e6"/><polygon points="812.1,621.1 803.5,620.6 804.4,618.0 813.0,618.1" fill="#0007e9"/><polygon points="821.6,618.3 818.2,617.8 819.1,614.8 822.5,615.4" fill="#0014ee"/><polygon points="817.3,621.7 812.1,621.1 813.0,618.1 818.2,617.8" fill="#000bea"/><polygon points="811.4,624.1 802.8,622.7 803.5,620.6 812.1,621.1" fill="#0002e7"/><polygon points="820.7,622.3 817.3,621.7 818.2,617.8 821.6,618.3" fill="#000ceb"/><polygon points="816.6,624.9 811.4,624.1 812.1,621.1 817.3,621.7" fill="#0003e7"/><polygon points="820.0,625.5 816.6,624.9 817.3,621.7 820.7,622.3" fill="#0003e7"/></g><g font-family="Liberation Sans, sans-serif" font-size="7.4px"><text x="611.0" y="558.9" text-anchor="end" fill="#2020c0">14.66</text><text x="888.7" y="488.0" fill="#2020c0">14.66</text><text x="611.0" y="522.0" text-anchor="end" fill="#2020c0">29.32</text><text x="888.7" y="451.1" fill="#2020c0">29.32</text><text x="611.0" y="485.2" text-anchor="end" fill="#2020c0">43.97</text><text x="888.7" y="414.3" fill="#2020c0">43.97</text><text x="611.0" y="448.3" text-anchor="end" fill="#2020c0">58.63</text><text x="888.7" y="377.4" fill="#2020c0">58.63</text><text x="611.0" y="411.4" text-anchor="end" fill="#2020c0">73.29</text><text x="888.7" y="340.5" fill="#2020c0">73.29</text><text x="815.5" y="629.9" text-anchor="end" fill="#e02020" textLength="13.9" lengthAdjust="spacingAndGlyphs">1000</text><text x="798.3" y="627.1" text-anchor="end" fill="#e02020" textLength="13.9" lengthAdjust="spacingAndGlyphs">2000</text><text x="781.1" y="624.2" text-anchor="end" fill="#e02020" textLength="13.9" lengthAdjust="spacingAndGlyphs">3000</text><text x="763.9" y="621.4" text-anchor="end" fill="#e02020" textLength="13.9" lengthAdjust="spacingAndGlyphs">4000</text><text x="746.7" y="618.6" text-anchor="end" fill="#e02020" textLength="13.9" lengthAdjust="spacingAndGlyphs">5000</text><text x="729.5" y="615.7" text-anchor="end" fill="#e02020" textLength="13.9" lengthAdjust="spacingAndGlyphs">6000</text><text x="712.2" y="612.9" text-anchor="end" fill="#e02020" textLength="13.9" lengthAdjust="spacingAndGlyphs">7000</text><text x="695.0" y="610.1" text-anchor="end" fill="#e02020" textLength="13.9" lengthAdjust="spacingAndGlyphs">8000</text><text x="677.8" y="607.2" text-anchor="end" fill="#e02020" textLength="13.9" lengthAdjust="spacingAndGlyphs">9000</text><text x="660.6" y="604.4" text-anchor="end" fill="#e02020" textLength="17.4" lengthAdjust="spacingAndGlyphs">10000</text><text x="626.2" y="598.7" text-anchor="end" fill="#e02020" textLength="17.4" lengthAdjust="spacingAndGlyphs">12000</text><text x="820.8" y="630.4" fill="#202020" textLength="10.4" lengthAdjust="spacingAndGlyphs">0.0</text><text x="827.4" y="619.7" fill="#202020" textLength="13.8" lengthAdjust="spacingAndGlyphs">10.0</text><text x="834.1" y="608.8" fill="#202020" textLength="13.8" lengthAdjust="spacingAndGlyphs">20.2</text><text x="840.8" y="598.1" fill="#202020" textLength="13.8" lengthAdjust="spacingAndGlyphs">30.3</text><text x="847.6" y="587.1" fill="#202020" textLength="13.8" lengthAdjust="spacingAndGlyphs">40.6</text><text x="853.7" y="577.2" fill="#202020" textLength="13.8" lengthAdjust="spacingAndGlyphs">49.9</text><text x="862.0" y="563.9" fill="#202020" textLength="13.8" lengthAdjust="spacingAndGlyphs">62.4</text><text x="870.8" y="549.7" fill="#202020" textLength="13.8" lengthAdjust="spacingAndGlyphs">75.7</text><text x="878.5" y="537.3" fill="#202020" textLength="13.8" lengthAdjust="spacingAndGlyphs">87.4</text><text x="885.8" y="525.4" fill="#202020" textLength="13.8" lengthAdjust="spacingAndGlyphs">98.5</text></g><text x="701" y="639" text-anchor="middle" fill="#e02020" font-family="Liberation Sans, sans-serif" font-size="8px" font-weight="bold">RPM</text><text x="877.4" y="590" fill="#555" font-family="Liberation Sans, sans-serif" font-size="8.2px">TPS</text><text x="749.5" y="284.5" text-anchor="middle" fill="#c8c8c8" font-family="Liberation Sans, sans-serif" font-size="7.4px">TunerPro - Version 5.00</text><text x="750" y="299" text-anchor="middle" fill="#000" font-family="Liberation Sans, sans-serif" font-size="11px" font-weight="bold">ETV Gear-3</text></svg><svg class="a" style="left:0;top:0;pointer-events:none" width="1445" height="705" viewBox="0 0 1445 705"><g opacity="0.31" fill="#000"><path d="M253.9,144.2 L255.6,141.5 L257.4,138.8 L259.3,136.2 L261.3,133.6 L263.3,131.1 L265.5,128.7 L267.7,126.4 L270.1,124.1 L272.4,122.0 L274.9,119.9 L277.5,117.9 L280.1,116.0 L282.7,114.2 L285.5,112.5 L288.3,110.8 L291.1,109.3 L294.0,107.9 L296.9,106.6 L299.9,105.4 L303.0,104.3 L306.0,103.3 L309.1,102.4 L312.2,101.6 L315.4,100.9 L318.6,100.3 L321.8,99.9 L325.0,99.6 L328.2,99.3 L331.4,99.2 L334.6,99.2 L337.8,99.3 L341.0,99.6 L344.2,99.9 L347.4,100.3 L350.6,100.9 L353.8,101.6 L356.9,102.4 L360.0,103.3 L363.0,104.3 L366.1,105.4 L369.1,106.6 L372.0,107.9 L374.9,109.3 L377.7,110.8 L380.5,112.5 L383.3,114.2 L385.9,116.0 L388.5,117.9 L391.1,119.9 L393.6,122.0 L395.9,124.1 L398.3,126.4 L400.5,128.7 L402.7,131.1 L404.7,133.6 L406.7,136.2 L408.6,138.8 L410.4,141.5 L412.1,144.2 L413.7,147.0 L415.2,149.9 L416.7,152.8 L418.0,155.7 L419.2,158.7 L420.3,161.8 L421.3,164.9 L422.2,168.0 L422.9,171.1 L423.6,174.3 L424.2,177.5 L424.6,180.7 L424.9,183.9 L425.2,187.1 L425.3,190.4 L425.3,193.6 L425.2,196.9 L424.9,200.1 L424.6,203.3 L424.2,206.5 L423.6,209.7" fill="none" stroke="#000" stroke-width="5.8"/><path d="M249.8,143.6 L256.5,135.8 L259.5,143.2 Z"/><path d="M248.5,156 Q243.6,183.5 247.6,211" fill="none" stroke="#000" stroke-width="5.6"/><path d="M253,141 L271,137 L289.8,162.8 L306.6,154.2 L327.5,202.5" fill="none" stroke="#000" stroke-width="5.8" stroke-linejoin="miter" stroke-miterlimit="10"/><path d="M246,158 L268.8,152 L288,178.8 L304.8,167.5 L327.5,203" fill="none" stroke="#000" stroke-width="5.8" stroke-linejoin="miter" stroke-miterlimit="10"/><path d="M264,218.6 C282,213.5 309,216 324.8,234 C313,246 296,251 286,247 C276,242 268,230 264,218.6 Z"/><path d="M264,218.6 C282,213.5 309,216 324.8,234 C313,246 296,251 286,247 C276,242 268,230 264,218.6 Z" transform="translate(675.8,0) scale(-1,1)"/><path d="M338.0,246.5 L356.5,279.5 L346.0,294.0 L338.0,285.0 L330.0,294.0 L319.5,279.5 Z"/><path d="M300.7,302.6 L312.6,308.0 L317.4,314.2 L323.3,311.2 L327.1,318.0 L332.5,316.1 L337.9,321.0 L343.3,316.1 L348.7,318.0 L352.5,311.2 L358.4,314.2 L363.2,308.0 L375.1,302.6 L365.1,321.2 L362.2,317.4 L356.2,327.1 L353.0,322.8 L347.6,332.5 L343.8,327.1 L337.9,328.0 L332.0,327.1 L328.2,332.5 L322.8,322.8 L319.6,327.1 L313.6,317.4 L310.7,321.2 Z"/><g transform="translate(239.6,308.9) rotate(35.0)"><path d="M-17.5,-32.5 L30.5,-32.5 L30.5,-24.5 L19.5,-16.5 L19.5,16.5 L30.5,24.5 L30.5,33.5 L-17.5,33.5 Z M9.3,0 A9.3,9.3 0 1,0 -9.3,0 A9.3,9.3 0 1,0 9.3,0 Z" fill-rule="evenodd"/><path d="M-21.8,-34 L-33,-34 Q-39.5,0 -33,34 L-21.8,34 Q-27.5,0 -21.8,-34 Z"/></g><path d="M255.4,330.0 L357.8,396.6 L366.9,382.6 L264.6,316.0 Z"/><path d="M403.8,400.5 A24.7,24.7 0 1,0 354.4,400.5 A24.7,24.7 0 1,0 403.8,400.5 Z M388.5,400.5 A9.4,9.4 0 1,0 369.7,400.5 A9.4,9.4 0 1,0 388.5,400.5 Z" fill-rule="evenodd"/><g transform="translate(675.8,0) scale(-1,1)"><g transform="translate(239.6,308.9) rotate(35.0)"><path d="M-17.5,-32.5 L30.5,-32.5 L30.5,-24.5 L19.5,-16.5 L19.5,16.5 L30.5,24.5 L30.5,33.5 L-17.5,33.5 Z M9.3,0 A9.3,9.3 0 1,0 -9.3,0 A9.3,9.3 0 1,0 9.3,0 Z" fill-rule="evenodd"/><path d="M-21.8,-34 L-33,-34 Q-39.5,0 -33,34 L-21.8,34 Q-27.5,0 -21.8,-34 Z"/></g><path d="M255.4,330.0 L357.8,396.6 L366.9,382.6 L264.6,316.0 Z"/><path d="M403.8,400.5 A24.7,24.7 0 1,0 354.4,400.5 A24.7,24.7 0 1,0 403.8,400.5 Z M388.5,400.5 A9.4,9.4 0 1,0 369.7,400.5 A9.4,9.4 0 1,0 388.5,400.5 Z" fill-rule="evenodd"/></g><path d="M213.8,359.2 L218.3,371.9 L231.7,372.2 L221.0,380.3 L224.9,393.2 L213.8,385.6 L202.7,393.2 L206.6,380.3 L195.9,372.2 L209.3,371.9 Z"/><path d="M462.0,359.2 L466.5,371.9 L479.9,372.2 L469.2,380.3 L473.1,393.2 L462.0,385.6 L450.9,393.2 L454.8,380.3 L444.1,372.2 L457.5,371.9 Z"/><path d="M85.0,425.7 L119.5,427.0 L126.5,435.5 L126.5,524.5 L120.0,532.0 L85.0,532.0 Z M97.2,441.6 L111.4,441.6 L111.4,519.7 L97.2,519.7 Z" fill-rule="evenodd"/><path d="M149.6,437.7 L167.8,441.0 L166.3,449.0 L166.0,505.0 L166.0,519.0 L190.5,517.0 L189.0,532.3 L150.2,532.3 L151.4,510.0 L151.4,447.7 Z"/><path d="M210.5,447.5 L251.0,452.3 L256.0,458.5 L256.3,525.5 L252.0,532.3 L211.0,532.3 L213.0,526.0 L213.3,456.0 Z M227.6,460.6 L242.5,460.6 L242.5,521.6 L227.6,521.6 Z" fill-rule="evenodd"/><path d="M283.0,457.5 L285.5,455.0 L321.0,455.5 L325.8,460.0 L327.2,477.8 L309.4,477.0 L309.4,465.5 L297.7,465.5 L297.7,481.0 L326.0,498.5 L326.4,528.7 L321.4,532.3 L285.8,532.3 L283.0,528.7 L281.6,510.4 L299.4,510.4 L297.7,521.6 L310.5,521.6 L310.5,504.0 L282.6,487.0 Z"/><path d="M350.0,455.0 L368.5,455.0 L367.5,462.0 L367.5,479.0 L383.0,455.0 L398.0,455.0 L397.5,462.0 L381.0,488.0 L397.0,494.0 L397.0,532.0 L381.5,532.0 L381.5,501.0 L367.5,496.0 L367.5,532.0 L351.5,532.0 L351.5,462.0 Z"/><path d="M419.7,451.0 L436.5,451.5 L435.8,458.0 L435.8,521.0 L449.0,521.0 L449.0,456.0 L448.0,448.2 L467.3,448.2 L466.5,456.0 L466.5,524.0 L459.0,532.0 L428.0,532.0 L420.5,524.0 L420.5,458.0 Z"/><path d="M491.0,444.7 L508.7,441.8 L507.2,449.8 L506.9,505.0 L506.9,519.0 L530.5,517.0 L529.0,532.3 L491.6,532.3 L492.8,510.0 L492.8,454.7 Z"/><path d="M553.1,432.8 L570.5,429.4 L569.0,437.4 L568.7,505.0 L568.7,519.0 L592.5,517.0 L591.0,532.3 L553.7,532.3 L554.9,510.0 L554.9,442.8 Z"/><g font-family="Liberation Sans, sans-serif" font-weight="bold" font-size="40px" stroke="#000" stroke-width="3" stroke-linejoin="miter"><text x="168.3" y="592.1" text-anchor="middle">T</text><text x="237.5" y="592.1" text-anchor="middle">U</text><text x="309.5" y="592.1" text-anchor="middle">N</text><text x="371.2" y="592.1" text-anchor="middle">I</text><text x="434.8" y="592.1" text-anchor="middle">N</text><text x="506.1" y="592.1" text-anchor="middle">G</text></g></g></svg></body></html>
